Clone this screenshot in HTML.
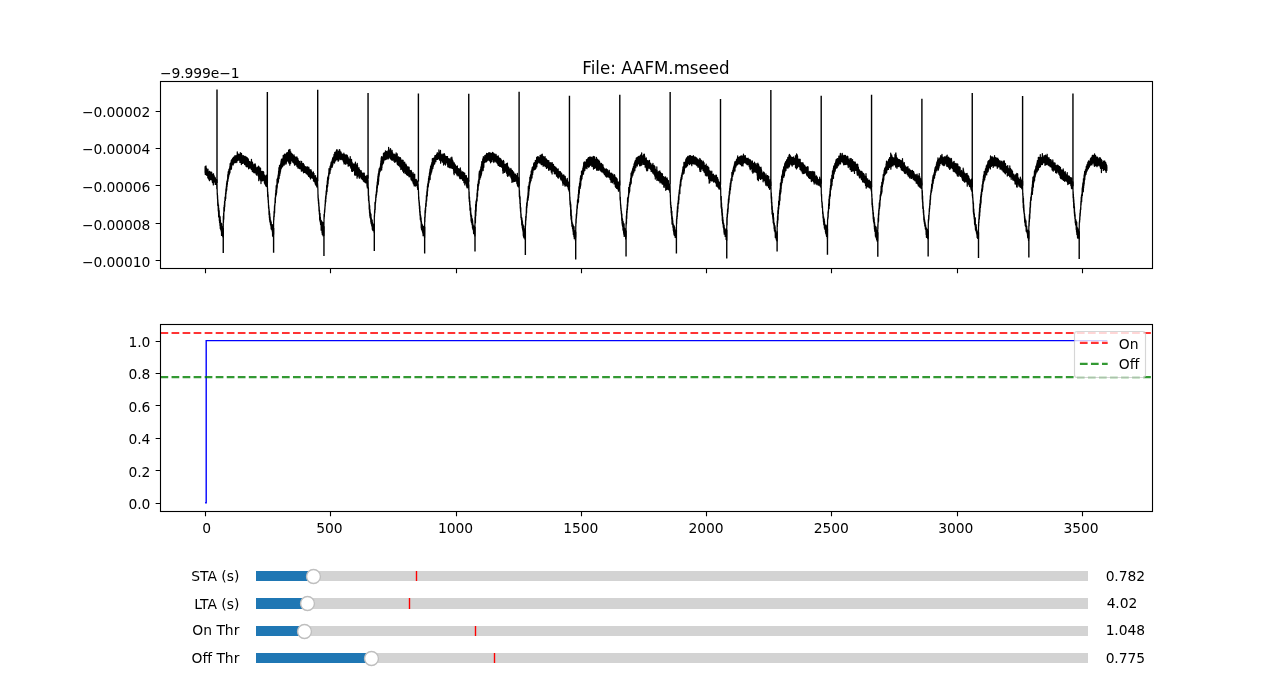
<!DOCTYPE html>
<html lang="en"><head><meta charset="utf-8"><title>File: AAFM.mseed</title>
<style>html,body{margin:0;padding:0;background:#fff;overflow:hidden}svg{display:block;will-change:transform}text{font-family:"DejaVu Sans","Liberation Sans",sans-serif;font-size:13.889px;fill:#000}.n{letter-spacing:-0.09px}.t12{font-size:16.667px}.e{text-anchor:end}.m{text-anchor:middle}.fr{fill:none;stroke:#000;stroke-width:1.11}.tk{stroke:#000;stroke-width:1.11;fill:none}</style></head><body>
<svg width="1280" height="682" viewBox="0 0 1280 682">
<rect width="1280" height="682" fill="#fff"/>
<path d="M205.09,172.78 205.12,166.71 205.32,174.56 205.34,170.01 205.44,168.38 205.54,173.58 205.57,171.71 205.59,170.95 205.67,168.8 205.82,174.35 205.84,172.32 205.89,174.07 205.99,165.9 206.07,169.07 206.09,172.1 206.12,173.02 206.29,169.61 206.32,171.62 206.34,170.94 206.42,174.48 206.52,168.09 206.57,171.45 206.59,168.28 206.77,175.47 206.82,171.36 206.84,171.62 206.87,170.34 206.99,174.78 207.07,171.32 207.09,175.31 207.22,169.8 207.32,171.51 207.34,171.91 207.47,170.18 207.52,174.09 207.57,171.75 207.6,169.73 207.82,177.88 207.85,176.08 207.87,176.14 208,169.21 208.07,171.81 208.1,171.93 208.3,176.63 208.32,175.38 208.35,176.5 208.37,171.61 208.57,172.94 208.6,173.48 208.65,179.08 208.75,173.02 208.82,173.45 208.85,174.31 208.9,174.83 208.92,172.37 209.07,174.2 209.1,175.31 209.25,172.48 209.32,178.53 209.35,179.94 209.37,180.42 209.5,171.47 209.57,176.77 209.6,177.47 209.62,180.7 209.8,172.26 209.82,174.19 209.85,171.25 210.02,177.87 210.08,176.81 210.1,177.1 210.2,172.28 210.33,177.27 210.35,175.24 210.43,173.55 210.58,175.93 210.6,173.67 210.68,179.41 210.8,172.65 210.83,174.66 210.85,173.42 210.88,172.47 211,177.12 211.08,175.39 211.1,175.82 211.15,178.41 211.3,174.1 211.33,174.52 211.35,175.24 211.4,179.29 211.58,174.56 211.6,173.71 211.63,172.12 211.75,179.23 211.83,178.35 211.85,178.05 211.98,175.61 212.03,180.46 212.08,179.87 212.1,180 212.13,180.96 212.23,173.93 212.33,177.09 212.35,175.21 212.45,182.52 212.58,175.92 212.61,176.12 212.63,174.45 212.78,181.71 212.83,181.05 212.86,180.8 212.93,175.26 213.08,179.84 213.11,178.1 213.18,175.07 213.33,184.9 213.36,181.81 213.53,173.75 213.58,178.05 213.61,181.95 213.68,182.09 213.81,177.98 213.83,178.29 213.86,179.96 213.88,177.64 213.96,182 214.08,180.79 214.11,179.99 214.21,175.85 214.26,181.37 214.33,177.94 214.36,180.71 214.51,178.15 214.53,181.91 214.58,179.32 214.61,178.78 214.76,182.1 214.83,177 214.86,180.63 214.88,181.69 215.09,178.27 215.11,177.32 215.24,184.45 215.34,181.88 215.36,180.22 215.41,178.48 215.49,183.99 215.59,180.55 215.61,181.46 215.69,180.58 215.76,184.09 215.84,182.58 215.86,182.03 215.91,179.36 216.09,183.12 216.11,180.47 216.14,184.35 216.26,180.27 216.34,180.5 216.36,180.64 216.39,183.39 216.59,179.97 216.61,181.57 216.64,179.52 216.81,188.74 216.84,184.64 216.86,183.78 216.89,179.87 217.06,185.45 217.09,184.85 217.11,189.11 217.16,188.85 217.24,194.38 217.34,193.06 217.36,194.03 217.52,198.92 217.57,195.39 217.59,198.14 217.62,196.74 217.74,205.5 217.82,201.55 217.84,199.65 218.04,206.1 218.07,202.55 218.09,202.86 218.27,211.02 218.32,210.45 218.34,211.35 218.49,204.78 218.57,211.26 218.59,214.16 218.64,216.79 218.79,208.2 218.82,209.44 218.84,212.56 218.87,212.09 219.04,217.56 219.07,214.94 219.09,216.1 219.19,210.62 219.32,220.57 219.34,219.49 219.47,215.87 219.57,222.78 219.59,219.81 219.67,223.04 219.82,216.03 219.84,220.12 219.87,219.47 219.97,225.42 220.07,222.1 220.1,221.7 220.15,216.96 220.27,228.51 220.32,228.33 220.35,225.85 220.42,220.02 220.57,229.27 220.6,226.46 220.62,227.54 220.7,222.33 220.82,225.39 220.85,224.4 220.87,224.22 220.92,229.94 221.07,225.24 221.1,227.61 221.12,225.88 221.22,231.3 221.32,228.93 221.35,225.22 221.42,224.97 221.55,235.42 221.57,233.89 221.6,232.97 221.67,223.51 221.8,233.74 221.82,233.66 221.85,230.95 221.87,232.52 222.07,227.81 222.1,228.14 222.2,233.66 222.32,228.4 222.35,226.97 222.5,236.09 222.58,232.53 222.6,227.39 222.8,234.91 222.83,234.59 222.85,232.09 223.03,227.85 223.08,236.94 223.1,234.83 223.18,236.74 223.33,216.14 223.35,217.53 223.45,222.57 223.58,216.88 223.6,213.89 223.68,212.8 223.78,219.18 223.83,215.71 223.85,211.86 223.9,207.32 224,212 224.08,211.61 224.1,211.75 224.25,205.08 224.33,206.31 224.35,206.12 224.43,210.72 224.55,201.36 224.58,202.75 224.6,203.71 224.68,201.86 224.73,206.71 224.83,203.16 224.85,203.46 225.03,197.13 225.08,198.89 225.11,200.51 225.26,196.86 225.33,198.46 225.36,200.36 225.58,192.79 225.61,196.06 225.73,198.48 225.83,192.68 225.86,191.03 225.96,188.78 226.08,193.7 226.11,190.78 226.13,192.26 226.31,186.53 226.33,188.21 226.36,187.59 226.43,191.28 226.56,183.62 226.58,183.85 226.61,184.33 226.73,189.99 226.81,182.28 226.83,183.85 226.86,183.83 226.88,181.43 227.03,186.85 227.08,184.48 227.11,182.68 227.18,180.64 227.23,184.68 227.33,181.57 227.36,184.11 227.49,179.11 227.59,180.75 227.61,181.43 227.76,174.75 227.84,178.84 227.86,177.3 227.89,181.27 228.01,176.4 228.09,177.4 228.11,175.99 228.21,171.69 228.29,178.77 228.34,173.64 228.36,173.26 228.41,173.19 228.49,176.03 228.59,175.69 228.61,171.26 228.64,177.09 228.84,172.21 228.86,169.63 228.94,174.06 229.09,172.94 229.11,169.07 229.21,174.8 229.34,173.27 229.36,169.28 229.41,169.24 229.54,173.07 229.59,170.48 229.61,173.51 229.81,166.66 229.84,167.52 229.86,167.76 229.97,172.47 229.99,166.15 230.07,168.38 230.09,167.68 230.12,163.72 230.27,169.74 230.32,164.38 230.34,165.82 230.39,164.15 230.49,168.32 230.57,167.42 230.59,166.07 230.64,168.61 230.74,163.76 230.82,167.88 230.84,168.43 230.94,162.11 231.07,168.08 231.09,168.02 231.32,160.32 231.34,162.06 231.42,169.18 231.57,166.22 231.59,164.87 231.64,163.14 231.79,165.73 231.82,163.24 231.84,162.14 231.89,164.77 231.97,159.37 232.07,159.79 232.09,163.12 232.19,164.02 232.29,159.17 232.32,159.58 232.34,160 232.52,163.82 232.57,162.21 232.6,162.68 232.65,158.33 232.82,160.39 232.85,162.66 232.97,164.38 233.07,158.72 233.1,158.81 233.12,158.19 233.22,164.91 233.32,159.25 233.35,160.54 233.42,157.23 233.57,160.97 233.6,161.48 233.62,163.47 233.67,158.31 233.82,159.65 233.85,157.45 233.95,163.14 234.07,159.27 234.1,158.37 234.12,158.13 234.25,161.23 234.32,159.64 234.35,159.97 234.45,161.79 234.5,157.45 234.57,158.44 234.6,159.63 234.65,160.4 234.72,155.89 234.82,159.84 234.85,159.9 234.9,162.36 235,157.87 235.08,160.58 235.1,159.77 235.13,161.2 235.25,157.83 235.33,158.3 235.35,159.2 235.4,160.03 235.53,156.08 235.58,159.87 235.6,158.96 235.65,160.8 235.8,156.06 235.83,158.71 235.85,155.55 235.93,162.7 236.08,156 236.1,156.59 236.18,156.07 236.33,162.23 236.35,159.43 236.43,155.86 236.53,161.7 236.58,160.44 236.6,161.81 236.7,156.02 236.83,157.17 236.85,157.51 236.88,162.17 237,155.01 237.08,156.07 237.1,159.13 237.18,159.57 237.28,151.81 237.33,153.36 237.36,153.55 237.46,159.2 237.58,155.95 237.61,153.35 237.76,160.36 237.83,156.7 237.86,154.5 238.01,159.11 238.08,159.07 238.11,157.52 238.26,159.74 238.33,155.26 238.36,156.26 238.38,159.96 238.58,156.47 238.61,156.49 238.68,154.25 238.83,160.12 238.86,159 238.93,155.11 239.08,155.3 239.11,158.77 239.18,156.31 239.31,160.03 239.33,157.84 239.36,156.62 239.41,155.2 239.51,157.58 239.58,157 239.61,158.53 239.73,154.17 239.84,159.92 239.86,158.27 239.91,162.39 240.09,155.21 240.11,161.71 240.29,152.72 240.34,154.69 240.36,157.7 240.46,161.48 240.54,154.97 240.59,155.01 240.61,155.57 240.81,161.9 240.84,161.3 240.86,160.75 240.99,155.33 241.06,162.72 241.09,159.97 241.11,159.77 241.21,154.17 241.34,162.77 241.36,164.55 241.49,153.4 241.59,160.07 241.61,159.76 241.66,163.64 241.79,156.96 241.84,159.01 241.86,159.15 241.91,156.96 242.09,161.54 242.11,158.65 242.14,157.14 242.19,160.36 242.32,159.45 242.34,158.44 242.47,162.15 242.57,158.92 242.59,158.06 242.67,157.3 242.79,163.38 242.82,161.39 242.84,155.39 242.97,160.8 243.07,159.14 243.09,160.85 243.17,162.44 243.32,156.73 243.34,157.15 243.49,162.03 243.57,161.19 243.59,157.07 243.62,155.88 243.79,162.41 243.82,159.58 243.84,162.87 243.92,163.09 244.02,156.06 244.07,159.4 244.09,161.5 244.24,162.26 244.27,159 244.32,160.66 244.34,159.46 244.39,163.18 244.49,158 244.57,160.09 244.59,163.48 244.62,164.55 244.77,156.57 244.82,159.88 244.85,160.59 245,158.86 245.07,161.94 245.1,162.34 245.27,156.27 245.32,160.14 245.35,159.79 245.4,162.63 245.57,157.31 245.6,160.37 245.77,165.15 245.82,162.68 245.85,160.72 245.87,160.17 246.02,166.27 246.07,165.81 246.1,162.38 246.2,159 246.32,164.28 246.35,163.54 246.57,157.07 246.6,160.41 246.65,160.21 246.75,166.8 246.82,162.91 246.85,162.54 246.9,164.5 247.02,158.13 247.07,164 247.1,164.16 247.3,157.76 247.33,164.48 247.35,163.22 247.38,166.27 247.58,159.54 247.6,161.69 247.7,166.86 247.8,160.45 247.83,161.15 247.85,161.45 247.88,158.47 248.05,165.86 248.08,165.44 248.1,161.18 248.25,159.12 248.33,165.87 248.35,164.09 248.38,165.08 248.5,159.88 248.58,163.62 248.6,165.49 248.63,168.8 248.8,161.63 248.83,163.58 248.85,164.07 248.88,161.46 248.95,166.53 249.08,164 249.1,163.49 249.2,162.09 249.3,167.12 249.33,165.11 249.35,168.23 249.45,161.71 249.58,164.66 249.6,165.91 249.68,165.91 249.81,162.86 249.83,163.18 249.86,167.2 249.88,167.49 249.93,162.13 250.08,163.28 250.11,163.66 250.13,167.36 250.18,161.86 250.33,165.69 250.36,165.71 250.46,162.26 250.56,166.01 250.58,164.77 250.61,167.4 250.63,168.19 250.83,162.54 250.86,164.37 250.91,161.93 251.03,167.76 251.08,165.94 251.11,164.35 251.18,162.87 251.31,169.45 251.33,167.78 251.36,167.83 251.46,159.32 251.56,168.82 251.58,165.76 251.61,167.65 251.63,168.88 251.76,161.56 251.83,167.09 251.86,166.71 252.01,170.07 252.08,162.55 252.11,161.89 252.34,171.48 252.36,165.81 252.41,167.71 252.49,162.37 252.59,165.28 252.61,168.29 252.71,169.5 252.76,165.02 252.84,165.72 252.86,165.93 252.96,171.79 253.09,165.75 253.11,164.95 253.24,170.97 253.34,167.12 253.36,168.25 253.41,166.03 253.51,171.09 253.59,167.61 253.61,168.42 253.71,165.81 253.81,171.9 253.84,171.48 253.86,171.62 253.91,172.74 254.04,164.16 254.09,166.4 254.11,169.84 254.29,166.06 254.34,172.49 254.36,168.91 254.44,165.16 254.46,171 254.59,167.58 254.61,169.85 254.72,166.67 254.79,170.25 254.82,168.78 254.84,168.14 254.92,164.72 255.07,172.96 255.09,168.06 255.17,163.88 255.32,170.79 255.34,169.88 255.39,169.88 255.47,164.85 255.57,167.09 255.59,167.4 255.67,166.56 255.69,169.77 255.82,169.23 255.84,167.34 255.92,170.76 256.07,168.91 256.09,167.75 256.22,174.38 256.32,171.8 256.34,171.47 256.47,172.52 256.57,169.11 256.59,170.25 256.67,169.17 256.77,175.16 256.82,173.02 256.84,172.63 256.87,173.06 256.99,168.22 257.07,171.87 257.09,171.35 257.2,173.75 257.3,167.02 257.32,169.81 257.35,169.63 257.42,172.69 257.57,170.93 257.6,170.04 257.65,172.31 257.67,167.83 257.82,171.97 257.85,169.44 257.9,173.78 258.02,168.24 258.07,171.96 258.1,171.5 258.17,175.41 258.25,168.53 258.32,169.18 258.35,173.37 258.42,176.14 258.57,166.2 258.6,167.51 258.62,166.54 258.75,180.64 258.82,173.94 258.85,171.81 258.95,166.62 259.07,179.89 259.1,179.6 259.22,168.5 259.32,173.65 259.35,175.79 259.37,177.72 259.57,171.38 259.6,170.2 259.65,177.72 259.83,170.27 259.85,167.99 260.05,178.7 260.08,177.46 260.1,175.06 260.13,171.28 260.33,176.13 260.35,176.31 260.53,168.11 260.58,172.62 260.6,176.38 260.68,180.4 260.8,172.35 260.83,173.38 260.85,173.69 260.88,171.29 260.98,183.53 261.08,173.69 261.1,171.56 261.13,171.47 261.28,179.79 261.33,178.48 261.35,175 261.43,173.51 261.55,178.99 261.58,177.09 261.6,176.84 261.75,171.42 261.83,173.92 261.85,174.36 261.98,177.93 262.05,173.39 262.08,174.41 262.1,175.66 262.21,180.96 262.33,173.61 262.36,171.44 262.51,179.36 262.58,177.73 262.61,175.51 262.63,178.51 262.71,173.3 262.83,178.51 262.86,177.48 262.91,180.41 263.03,172.59 263.08,175.78 263.11,175.42 263.23,180.09 263.33,174.99 263.36,171.56 263.48,179.73 263.58,172.8 263.61,172.62 263.66,172.02 263.76,178.45 263.83,177.86 263.86,176.83 264.01,174.43 264.06,179.93 264.08,177.38 264.11,178.7 264.16,181.31 264.31,175.87 264.33,177.79 264.36,178.48 264.41,182.96 264.51,176.34 264.58,177.72 264.61,178.64 264.64,177.76 264.84,184.09 264.86,179.13 264.99,175.44 265.06,183.13 265.09,182.38 265.11,181.99 265.14,183.9 265.29,176.59 265.34,181.61 265.36,181.31 265.39,182.44 265.51,177.23 265.59,178.76 265.61,179.14 265.71,185.69 265.84,177.16 265.86,176.67 266.04,186.06 266.09,179.57 266.11,177.83 266.16,176.29 266.31,186.15 266.34,184.2 266.36,186.55 266.49,175.12 266.59,179.62 266.61,183.91 266.64,184.93 266.74,179.77 266.84,181.49 266.86,179.95 266.91,186.32 267.06,182.21 267.09,181.51 267.17,179.01 267.19,183.52 267.32,183.4 267.34,181.4 267.54,192.04 267.57,188.41 267.59,192.13 267.67,196.68 267.77,191.77 267.82,192.05 267.84,196.27 267.99,194.28 268.02,199.41 268.07,195.73 268.09,195.96 268.12,195.37 268.29,203.1 268.32,199.97 268.34,202.96 268.39,200 268.57,208.23 268.59,207.12 268.64,205.02 268.82,207.91 268.84,208.18 268.89,207.15 269.04,214.77 269.07,213.84 269.09,209.2 269.29,213.76 269.32,212.71 269.34,217.48 269.42,211.27 269.57,220.06 269.6,216.69 269.75,213.55 269.8,217.69 269.82,216.1 269.85,221.91 270.02,216.78 270.07,218.28 270.1,219.43 270.12,217.26 270.32,221.74 270.35,220.91 270.45,224.46 270.57,222.55 270.6,222.34 270.62,220.05 270.82,226.04 270.85,225.35 270.87,221.69 271.07,226.35 271.1,227.24 271.15,228.88 271.22,221.75 271.32,226.83 271.35,225.2 271.42,224.63 271.57,227.91 271.6,228.01 271.65,226 271.7,229.83 271.82,227.25 271.85,226.53 271.87,226.06 272.08,229.98 272.1,225.18 272.33,231.09 272.35,231.71 272.45,225.49 272.58,236 272.6,233.12 272.63,234.2 272.73,224.53 272.83,229.22 272.85,233.6 272.93,236.07 273.03,227.12 273.08,227.53 273.1,229.78 273.13,228.94 273.28,236.62 273.33,233.37 273.35,231.68 273.4,228.56 273.53,234.53 273.58,233.77 273.6,222.74 273.8,216.18 273.83,217.97 273.85,219.86 274.08,211.49 274.1,215.5 274.2,216.86 274.25,211.58 274.33,213.3 274.35,211.67 274.5,205.79 274.58,208.66 274.61,212.92 274.76,204.5 274.83,204.93 274.86,206.05 275.06,200.66 275.08,202.65 275.11,198.89 275.23,197.66 275.28,201.88 275.33,200.74 275.36,202.73 275.56,193.47 275.58,193.91 275.61,194.86 275.71,196.74 275.83,192.18 275.86,190.02 275.96,196.02 276.08,191.49 276.11,191.23 276.18,185.69 276.33,194.55 276.36,191.7 276.58,185.19 276.61,192.09 276.63,192.69 276.81,184.51 276.83,185.17 276.86,185.37 276.93,188.98 277.04,179.2 277.09,179.45 277.11,180.12 277.26,187.25 277.34,182.27 277.36,181.54 277.41,183.97 277.49,179.29 277.59,181.78 277.61,180.7 277.69,177.81 277.84,182.42 277.86,181.55 277.91,181.77 278.01,175.68 278.09,177.94 278.11,179.84 278.14,182.97 278.34,175.15 278.36,173.98 278.44,181.81 278.59,171.09 278.61,173.84 278.64,172.88 278.74,179.13 278.84,176.73 278.86,174.49 278.91,167.61 279.09,175.97 279.11,178.37 279.26,170.23 279.34,173.74 279.36,175.66 279.52,165.27 279.57,170.4 279.59,169.23 279.72,175.54 279.82,171.54 279.84,169.31 279.89,172.03 280.07,165.18 280.09,168.04 280.19,173.14 280.32,167.67 280.34,166.82 280.44,166.41 280.54,171.3 280.57,167.12 280.59,165.22 280.69,163.63 280.82,169.14 280.84,166.71 280.97,161.57 280.99,166.92 281.07,165.61 281.09,167.38 281.12,168.83 281.27,159.94 281.32,163.41 281.34,164.84 281.37,162.7 281.49,168.06 281.57,163.29 281.59,159.08 281.74,166.65 281.82,163.04 281.84,163.42 282.05,162.07 282.07,164.72 282.1,162.1 282.15,166.37 282.22,160.08 282.32,161.07 282.35,162.98 282.42,166.78 282.5,160.25 282.57,161.91 282.6,159.79 282.67,166.4 282.8,159.02 282.82,159.04 282.85,158.38 282.87,158.02 283.07,164.63 283.1,165.58 283.22,155.28 283.32,160.38 283.35,162.51 283.45,158.67 283.57,163.43 283.6,161.78 283.65,164.18 283.8,156.39 283.82,158.22 283.85,158.99 283.95,163.97 284.07,157.6 284.1,157.84 284.12,155.86 284.27,165.07 284.32,161.28 284.35,158.33 284.45,154.05 284.58,161.52 284.6,161.75 284.65,163.33 284.73,157.52 284.83,158.14 284.85,159.17 284.93,162.41 285.03,157.49 285.08,158.31 285.1,158.39 285.13,156.66 285.33,161.12 285.35,159.07 285.45,155.23 285.55,161.92 285.58,159.7 285.6,161.96 285.75,154.13 285.83,156.35 285.85,160.51 285.9,164.25 286.08,153.94 286.1,154.33 286.23,163.47 286.33,157.62 286.35,156.99 286.43,154.93 286.58,161.97 286.6,159.82 286.7,152.99 286.78,160.71 286.83,159.57 286.85,157.33 286.98,154.31 287.06,159.4 287.08,159 287.11,156.85 287.18,159.72 287.33,155.64 287.36,155.61 287.43,154.53 287.56,160.86 287.58,159.93 287.61,160.41 287.71,152.5 287.83,157.18 287.86,159.53 287.91,159.97 288.06,152.22 288.08,154.71 288.11,157.24 288.23,158.56 288.33,153.1 288.36,152.31 288.51,162.06 288.58,157.65 288.61,155.69 288.66,150.1 288.83,161.73 288.86,162.77 289.01,149.87 289.08,157.54 289.11,160.6 289.16,163.45 289.28,151.56 289.33,152.31 289.36,153.92 289.49,162.43 289.59,151.8 289.61,152.98 289.64,150.62 289.79,165.16 289.84,159.76 289.86,160.52 289.96,149.38 290.09,163.7 290.11,159.47 290.14,161.95 290.21,151.56 290.34,161.44 290.36,159.56 290.39,161.28 290.56,151.59 290.59,152.58 290.61,153.17 290.71,163.35 290.81,152.09 290.84,153.16 290.86,155.14 290.91,154.91 291.06,160.56 291.09,158.64 291.11,158.52 291.16,153.83 291.29,158.69 291.34,158.32 291.36,157.87 291.39,156.46 291.56,159.16 291.59,156.48 291.61,158.44 291.69,160.34 291.79,153.61 291.84,155.06 291.86,157.04 292.04,160.96 292.07,158.46 292.09,155.01 292.14,154.99 292.19,160.82 292.32,159.37 292.34,156.8 292.47,159.7 292.49,155.22 292.57,157.66 292.59,154.32 292.72,162.14 292.82,159.23 292.84,158.11 292.89,155.97 293.07,160.57 293.09,159.57 293.12,155.67 293.32,159.35 293.34,158.66 293.44,159.51 293.57,156.12 293.59,158.69 293.74,162.93 293.79,158.52 293.82,161.18 293.84,158.71 293.99,162.51 294.07,154.96 294.09,159.55 294.27,164.05 294.32,157.39 294.34,159.79 294.4,158.16 294.55,161.11 294.57,160.33 294.6,160.87 294.7,156.62 294.75,165.28 294.82,163.59 294.85,162.09 294.87,164.28 295,158.07 295.07,158.29 295.1,159.19 295.2,164.53 295.27,158.76 295.32,160.6 295.35,162.79 295.52,163.23 295.55,160.18 295.57,160.34 295.6,160.65 295.7,157.51 295.77,164.1 295.82,160.72 295.85,160.83 295.92,157.18 296.05,162.18 296.07,162.02 296.1,162.09 296.12,164.16 296.3,157.29 296.32,158.54 296.35,159.13 296.45,164.98 296.55,158.72 296.57,159.25 296.6,160.39 296.7,164.3 296.77,158.03 296.82,161.12 296.85,158.91 296.9,156.86 296.98,166.52 297.08,165.33 297.1,164.31 297.28,158.89 297.33,165.24 297.35,164.6 297.43,165.84 297.53,158.33 297.58,161.8 297.6,163.25 297.68,165.68 297.8,158.38 297.83,158.69 297.85,158.61 298.03,168.12 298.08,165.11 298.1,162.94 298.13,160.04 298.23,163.69 298.33,162 298.35,160.17 298.45,166.22 298.58,164.34 298.6,164.88 298.68,161.26 298.78,167.99 298.83,166.81 298.85,166.16 298.9,161.42 299.08,166.21 299.1,162.86 299.3,166.8 299.33,166.57 299.36,165.09 299.46,168.54 299.56,163.16 299.58,164.02 299.61,166.12 299.63,167.24 299.76,163.38 299.83,165.54 299.86,165.84 299.88,168.53 300.08,161.07 300.11,162.33 300.28,168.55 300.33,167.08 300.36,168.71 300.41,165.24 300.58,165.99 300.61,167.42 300.71,165.07 300.83,169.07 300.86,166.41 300.96,163.7 301.06,169.21 301.08,165.39 301.11,166.12 301.31,163.31 301.33,167.84 301.36,168.72 301.38,171.19 301.53,163.31 301.58,164.45 301.61,161.45 301.68,169.72 301.84,165.5 301.86,165.07 301.89,164.81 301.94,169.29 302.09,166 302.11,166.94 302.24,163.41 302.34,168.25 302.36,170.5 302.51,164.02 302.59,164.67 302.61,170.85 302.74,164.07 302.84,168.19 302.86,166.37 303.01,170.34 303.06,165.1 303.09,168.34 303.11,166.27 303.24,171.38 303.34,166.46 303.36,165.96 303.41,163.5 303.54,172.8 303.59,169.18 303.61,167.68 303.71,164.78 303.84,169.75 303.86,172.15 303.99,164.56 304.09,165.18 304.11,167.34 304.14,171.13 304.32,169.89 304.34,167.06 304.39,165.96 304.54,172.45 304.57,170.9 304.59,170.21 304.74,168.55 304.82,170.77 304.84,168.96 304.87,172.11 304.99,167.79 305.07,167.82 305.09,170.51 305.14,172.56 305.29,167.23 305.32,168.51 305.34,171.28 305.39,171.82 305.52,166.58 305.57,169.53 305.59,171.64 305.64,172.26 305.74,168.48 305.82,169.69 305.84,168.57 305.87,168.39 305.97,172.5 306.07,168.67 306.09,167.02 306.27,173.72 306.32,167.73 306.34,170.14 306.42,167.45 306.52,173.44 306.57,169.68 306.59,171.97 306.69,167.1 306.8,173.88 306.82,172.61 306.85,173.36 306.97,169.22 307.07,169.6 307.1,170.77 307.17,166.63 307.22,173.37 307.32,172.03 307.35,173.48 307.55,169.83 307.57,170.67 307.6,171.49 307.72,174.85 307.82,168.58 307.85,167.5 307.97,174.98 308.07,171.86 308.1,170.47 308.12,170.18 308.3,174.69 308.32,171.71 308.35,175.44 308.57,170.2 308.6,173.64 308.67,176.47 308.82,167.17 308.85,170.64 308.87,169.52 308.97,176.13 309.07,171.48 309.1,168.66 309.28,175.13 309.33,171.91 309.35,173.58 309.4,171.28 309.58,177.07 309.6,173.06 309.73,172.65 309.83,177.1 309.85,172.46 309.95,169.93 310.08,175.64 310.1,176.04 310.13,176.85 310.3,170.79 310.33,172.45 310.35,175.25 310.38,172.58 310.5,178.96 310.58,173.57 310.6,174.59 310.63,170.2 310.8,176.34 310.83,176.04 310.85,173.81 310.93,169.57 311.08,175.84 311.1,172.97 311.18,175.57 311.33,171.72 311.35,175.36 311.4,170.84 311.58,171.56 311.6,173 311.7,177.62 311.83,174.07 311.86,173.72 311.88,172.83 311.96,177.05 312.08,173.46 312.11,172.55 312.23,178.22 312.33,176.42 312.36,175.69 312.38,174.28 312.53,177.86 312.58,176.57 312.61,175.51 312.63,177.32 312.83,173.73 312.86,175.23 312.93,176.89 313.06,173.06 313.08,175.2 313.11,175.74 313.21,178.57 313.33,173.65 313.36,171.9 313.48,181.06 313.58,176.47 313.61,175.66 313.71,174.01 313.81,181.2 313.83,176.37 313.86,177.41 313.96,173.33 314.06,179.13 314.08,177.4 314.11,176.31 314.24,175.38 314.31,180.11 314.34,177.45 314.36,181.25 314.59,176.92 314.61,178.21 314.66,180.49 314.74,178.09 314.84,178.28 314.86,180.51 314.94,182.76 315.06,177.16 315.09,181.71 315.11,180.32 315.26,183.9 315.34,179.37 315.36,183.48 315.56,175.64 315.59,183.29 315.61,179.34 315.71,185.09 315.81,177.71 315.84,178.87 315.86,178.2 316.06,183.12 316.09,181.65 316.11,183.39 316.21,178.55 316.31,184.2 316.34,181.37 316.36,184.71 316.51,178.1 316.59,180.94 316.61,179.79 316.74,186.96 316.82,179.01 316.84,180.72 316.92,178.05 317.02,184.95 317.07,184.5 317.09,186.07 317.24,180.1 317.32,182 317.34,180.94 317.44,179.2 317.57,183.56 317.59,183.32 317.82,187.85 317.84,188.92 317.87,188.6 318.04,197.91 318.07,194.96 318.09,194.5 318.27,200.73 318.32,198.75 318.34,198.79 318.39,198.63 318.52,203.83 318.57,201.55 318.59,199.78 318.74,206.32 318.82,202.54 318.84,202.97 319.02,210.92 319.07,210.77 319.09,209.36 319.17,206.65 319.3,211.88 319.32,210.61 319.35,214.29 319.52,210.02 319.57,214.1 319.6,213.82 319.65,219.75 319.75,213.67 319.82,216.91 319.85,216.85 319.9,220.68 320.07,213.48 320.1,215.93 320.22,222.11 320.32,217.03 320.35,218.75 320.42,217.39 320.57,224.52 320.6,223.31 320.7,220.47 320.82,224.7 320.85,223.39 320.97,221.04 321.02,224.58 321.07,224.34 321.1,223.99 321.15,230.14 321.25,220.4 321.32,222.24 321.35,225.7 321.45,228.11 321.52,222.25 321.57,224.07 321.6,221.54 321.75,229.44 321.83,221.68 321.85,224.32 321.88,221.53 322.03,232.68 322.08,230.32 322.1,227.15 322.13,225.28 322.3,234.41 322.33,232.43 322.35,231.84 322.48,222.03 322.58,228.73 322.6,232.45 322.63,234.5 322.83,224.81 322.85,226.45 323,235.85 323.08,229.33 323.1,226.82 323.13,222.69 323.25,235.9 323.33,228.34 323.35,229.31 323.4,225.83 323.55,235.48 323.58,233.55 323.6,234.63 323.75,229.02 323.83,232.88 323.85,235.43 324.05,214.37 324.08,218.17 324.1,218.73 324.28,214.01 324.33,216.64 324.36,215.25 324.58,209.8 324.61,211.38 324.73,212.31 324.83,208.29 324.86,207.52 324.91,209.46 325.08,204.32 325.11,204.7 325.21,206.32 325.31,200.22 325.33,200.36 325.36,203.4 325.43,203.49 325.56,197.81 325.58,198.81 325.61,196.53 325.76,201.71 325.78,196.23 325.83,198.55 325.86,195.31 325.96,198.86 326.08,193.17 326.11,192.86 326.13,196.48 326.18,191.17 326.33,191.48 326.36,192.6 326.46,189.76 326.58,194.34 326.61,187.55 326.71,185.19 326.81,191.05 326.84,190.77 326.86,190.19 326.99,185.28 327.09,191.54 327.11,188.5 327.29,180.9 327.34,183.45 327.36,185.33 327.41,187.15 327.59,177.75 327.61,178.56 327.69,186.2 327.84,182.12 327.86,177.36 327.89,177.01 328.06,183.54 328.09,181.52 328.11,179.93 328.19,176.01 328.34,180.27 328.36,176.74 328.39,179.39 328.49,175.19 328.59,177.81 328.61,177.07 328.64,178.67 328.71,172.78 328.84,176.05 328.86,174.08 328.91,175.88 328.99,168.75 329.06,170.44 329.09,173.38 329.12,174.87 329.32,169.48 329.34,169.75 329.39,169.52 329.47,171.61 329.57,171.27 329.59,172.74 329.79,168.06 329.82,168.46 329.84,168.6 329.94,173.47 330.07,170.3 330.09,166.05 330.12,171.51 330.32,169.52 330.34,168.38 330.39,167.28 330.44,170.08 330.57,167.61 330.59,168.6 330.74,169.65 330.82,163.99 330.84,164.96 330.97,166.99 331.07,162.65 331.09,163.78 331.14,162.21 331.27,167.48 331.32,162.25 331.34,165.68 331.47,162.1 331.57,166.95 331.6,165.65 331.62,166.35 331.72,162.24 331.82,162.93 331.85,162.44 331.87,167.18 332.05,160.68 332.07,164.63 332.1,162.3 332.22,167.19 332.3,160.1 332.32,162 332.35,159.49 332.52,166.04 332.57,162.19 332.6,159.15 332.72,157.89 332.82,164.83 332.85,160.67 332.87,162.83 333,157.52 333.07,161.28 333.1,161.72 333.12,162.95 333.3,157.19 333.32,157.98 333.35,159.11 333.45,161.13 333.5,158.59 333.57,159.6 333.6,158.06 333.67,156.55 333.8,162.63 333.82,158.79 333.85,162.06 334.02,154.5 334.08,159.7 334.1,160.36 334.13,161.8 334.33,157 334.35,155.44 334.38,155.38 334.58,163.06 334.6,160.09 334.75,152.35 334.83,159.47 334.85,159.14 334.88,161.12 335.05,152.97 335.08,156.07 335.1,157.05 335.25,158.76 335.28,153.84 335.33,156.74 335.35,156.78 335.48,158.14 335.5,153.6 335.58,155.13 335.6,153.09 335.73,160.76 335.83,157.15 335.85,155.83 335.88,151.53 336.08,158.9 336.1,156.11 336.15,152.9 336.3,159.71 336.33,156.94 336.35,158.64 336.48,150.15 336.58,155.46 336.61,156.18 336.66,158.79 336.81,152.83 336.83,154.1 336.86,149.73 337.01,159.58 337.08,156.33 337.11,152.74 337.23,149.78 337.33,157.33 337.36,157.17 337.38,158.85 337.56,153.4 337.58,155.12 337.61,156.26 337.63,158.19 337.81,155.13 337.83,156.26 337.86,157.79 337.98,153.59 338.08,160.28 338.11,161.15 338.16,153.19 338.33,157.54 338.36,160.34 338.41,160.94 338.56,151.29 338.58,152.84 338.61,153.68 338.71,160.43 338.83,151.47 338.86,153.67 338.96,152.52 339.01,159.06 339.09,154.57 339.11,153.87 339.21,149.91 339.29,156.76 339.34,154.84 339.36,156.45 339.44,149.6 339.59,157.46 339.61,154.44 339.79,149.87 339.84,156.25 339.86,156.53 339.91,157.3 340.06,151.33 340.09,152.47 340.11,152.28 340.24,159.58 340.34,156.36 340.36,155.26 340.41,151.77 340.56,158.51 340.59,155.37 340.61,157.34 340.74,154.67 340.81,158.6 340.84,157.38 340.86,158.87 341.06,152.05 341.09,156.9 341.11,158.27 341.19,154.18 341.31,159.1 341.34,158.53 341.36,156.72 341.49,154.48 341.57,158.88 341.59,156.34 341.62,158.09 341.69,153.91 341.82,155.33 341.84,155.15 341.94,159.7 342.07,155.9 342.09,155.29 342.19,158.58 342.29,155.17 342.32,157.56 342.34,156.26 342.37,155.39 342.54,158.54 342.57,158.41 342.59,158.14 342.64,154.23 342.77,159.06 342.82,156.87 342.84,155.04 342.87,159.03 343.04,154.87 343.07,156.99 343.09,158.78 343.14,161.11 343.24,154.85 343.32,156.51 343.34,157.44 343.52,161.36 343.54,154.38 343.57,155.69 343.59,154.69 343.79,162.4 343.82,157.7 343.84,156.87 343.87,153.01 344.07,162.65 344.1,164 344.22,155.33 344.32,163.6 344.35,160.23 344.4,161.6 344.55,154.86 344.57,161.4 344.6,159.48 344.72,161.59 344.8,157.78 344.82,160.11 344.85,159.07 344.9,160.9 344.97,154.55 345.07,158.29 345.1,162.02 345.15,162.62 345.32,154.84 345.35,155.6 345.5,164.12 345.57,160.12 345.6,156.85 345.62,155.32 345.82,163.48 345.85,163.66 346.02,157.59 346.07,160.57 346.1,163.93 346.25,157.6 346.32,159.61 346.35,159.32 346.45,161.93 346.58,154.93 346.6,156.29 346.68,160.54 346.83,159.15 346.85,161.44 347,157.57 347.08,161.2 347.1,162.22 347.28,155.31 347.33,158.24 347.35,158.68 347.43,163.51 347.45,158.32 347.58,163.01 347.6,159.19 347.73,158.84 347.83,162.18 347.85,159.05 347.88,161.19 348,157.01 348.08,160.47 348.1,162.4 348.18,166.13 348.25,157.93 348.33,161.8 348.35,163.37 348.38,164.16 348.5,159.56 348.58,163.43 348.6,162.08 348.63,164.79 348.78,159.67 348.83,162.41 348.85,164.71 348.88,165.13 349.03,159.56 349.08,160.63 349.11,161.92 349.16,165.61 349.28,159.05 349.33,160.32 349.36,161.65 349.41,160.97 349.46,165.31 349.58,163.78 349.61,161.3 349.71,165.36 349.83,162.81 349.86,161.09 349.93,159.64 350.03,163.66 350.08,162.3 350.11,164.41 350.13,165.41 350.23,156.57 350.33,163.17 350.36,166.02 350.43,166.93 350.56,159.33 350.58,161.6 350.61,165.7 350.71,167.19 350.78,160.31 350.83,160.62 350.86,161.73 350.98,168.32 351.08,165.69 351.11,163.48 351.21,160.21 351.33,167.31 351.36,165.9 351.38,166.79 351.54,159.43 351.59,163.84 351.61,166.35 351.66,171.15 351.79,162.56 351.84,163.81 351.86,161.95 351.99,169.63 352.09,163.26 352.11,162.28 352.31,167.61 352.34,164.47 352.36,167.49 352.44,165.19 352.59,171.4 352.61,170.65 352.69,165.9 352.84,168.38 352.86,166.5 352.96,169.88 353.06,163.9 353.09,166.79 353.11,167.26 353.19,164.7 353.26,169.16 353.34,168.04 353.36,165.47 353.46,170.52 353.56,164.17 353.59,168.47 353.61,168.2 353.71,164.53 353.84,168.34 353.86,168.23 353.89,165.01 353.94,168.74 354.07,166.78 354.09,168.94 354.22,166.1 354.32,170.4 354.34,166.53 354.47,164.1 354.57,170.62 354.59,172.75 354.64,174.66 354.69,165.73 354.82,170.03 354.84,168.72 354.89,175.16 355.07,165.57 355.09,163.8 355.27,173 355.32,169.76 355.34,165.43 355.42,162.02 355.57,174.91 355.59,172.93 355.67,166.3 355.82,171.24 355.84,175.14 356.07,165.6 356.09,165.28 356.17,174.13 356.32,166.2 356.34,166.63 356.37,164.97 356.5,174.49 356.57,171.12 356.6,169.39 356.65,166.45 356.82,174.61 356.85,169.99 356.95,165.44 357.07,178.2 357.1,176.45 357.27,163.37 357.32,171.21 357.35,172.64 357.4,175.68 357.52,165.33 357.57,168.34 357.6,173.98 357.67,176.37 357.77,169.45 357.82,169.84 357.85,172.09 357.87,170.51 357.97,174.55 358.07,172.34 358.1,169.62 358.12,168.9 358.3,175.02 358.32,172.72 358.35,175.23 358.42,168.47 358.57,170.87 358.6,170.89 358.7,170.85 358.82,175.49 358.85,173.75 358.93,167.59 359.08,176.67 359.1,177.83 359.25,170.06 359.33,175.49 359.35,178.25 359.55,169.41 359.58,171.02 359.6,172.17 359.63,170.64 359.73,176.29 359.83,172.51 359.85,172.57 359.95,170.49 360.03,174.93 360.08,173.34 360.1,173.98 360.15,176.58 360.23,171.99 360.33,173.1 360.35,174.63 360.45,176.04 360.5,171.4 360.58,172.57 360.6,172.93 360.63,176.71 360.75,170.98 360.83,174.06 360.85,177.2 360.88,177.52 361.05,172.46 361.08,173.92 361.1,174.83 361.13,170.73 361.3,178.63 361.33,174.29 361.36,173.22 361.51,172.19 361.56,176.35 361.58,176.2 361.61,178.35 361.66,173.62 361.83,178.75 361.86,175.51 361.88,177.39 362.03,175.38 362.08,177.13 362.11,175.51 362.23,173.74 362.31,178.9 362.33,175.12 362.36,178.21 362.53,179.74 362.58,175.2 362.61,175.28 362.63,178.86 362.81,173.24 362.83,175.95 362.86,177.69 362.93,179.56 363.03,174.49 363.08,176.12 363.11,174.14 363.16,177.57 363.23,173.09 363.33,175.5 363.36,175.96 363.46,181.16 363.56,173.8 363.58,174.16 363.61,177.05 363.63,175.01 363.68,181.18 363.84,176.86 363.86,178.57 363.94,173.25 364.06,179.88 364.09,178.81 364.11,179.57 364.26,173.09 364.34,181.34 364.36,181.99 364.54,176.41 364.59,178.62 364.61,177.83 364.79,181.69 364.84,181.54 364.86,180.41 364.94,176.1 365.09,180.8 365.11,180.9 365.19,177.95 365.21,180.98 365.34,180.82 365.36,179.68 365.39,182.65 365.59,176.49 365.61,176.5 365.76,181.82 365.84,178.67 365.86,179.8 365.89,177.45 366.06,182.89 366.09,180.89 366.11,182.89 366.29,176.69 366.32,179.28 366.34,180.89 366.47,182.35 366.49,180.03 366.57,180.55 366.59,177.85 366.69,182.51 366.82,178.34 366.84,175.39 367.02,186.31 367.07,182.44 367.09,182.79 367.12,178.1 367.29,187.07 367.32,185.17 367.34,187.96 367.52,176.62 367.57,184.53 367.59,186.13 367.64,187 367.79,175.53 367.82,179.36 367.84,181.82 367.92,187.55 368.04,179.65 368.07,180.97 368.09,180.44 368.32,195.7 368.34,190.01 368.42,187.56 368.54,200.44 368.57,198.06 368.59,198.36 368.72,199.38 368.82,195.82 368.85,200.63 368.95,202.68 369.07,201.59 369.1,201.29 369.2,209.29 369.32,203.54 369.35,205.26 369.37,205.07 369.55,212.9 369.57,211.71 369.6,212.61 369.67,205.51 369.82,215.99 369.85,211.81 369.87,214.37 369.92,209.34 370.07,211.35 370.1,214.01 370.12,217.63 370.32,213.53 370.35,212.66 370.57,219.32 370.6,217.77 370.7,213.58 370.8,221.7 370.82,221.05 370.85,221.88 370.97,214.32 371.07,221.51 371.1,222.94 371.17,223.7 371.28,217.87 371.33,219.57 371.35,221.5 371.4,224.02 371.53,219.03 371.58,219.97 371.6,220.16 371.73,225.82 371.83,222.88 371.85,223.61 371.88,220.17 372.08,226.72 372.1,225.68 372.2,220.13 372.3,229.2 372.33,225.66 372.35,228.13 372.43,222.42 372.58,229.95 372.6,229.29 372.73,223.66 372.83,227.58 372.85,225.53 373.03,224.06 373.05,229.39 373.08,228.21 373.1,227.99 373.13,230.68 373.2,226.35 373.33,227.18 373.35,226.54 373.45,225.67 373.55,227.72 373.58,225.86 373.6,230.03 373.65,230.5 373.73,225.12 373.83,226.89 373.86,225.78 374.01,229.94 374.06,224.41 374.08,226.64 374.11,225.61 374.28,232.44 374.33,215.91 374.36,215.5 374.48,216.16 374.58,210.57 374.61,213.75 374.73,209.31 374.83,211.35 374.86,212.47 374.96,202.45 375.08,206.44 375.11,207.89 375.16,209.85 375.33,201.96 375.36,203.55 375.38,203.71 375.56,200.51 375.58,201.38 375.61,202.12 375.76,196.86 375.83,200.18 375.86,194.72 375.91,197.62 376.08,196.2 376.11,197.6 376.34,191.77 376.36,195.01 376.41,195.66 376.51,190.85 376.59,192.42 376.61,194.5 376.71,186.75 376.84,191.99 376.86,191.02 376.94,185.16 377.04,192.1 377.09,188.96 377.11,189.26 377.26,181.91 377.34,186.1 377.36,187.95 377.59,182.39 377.61,180.7 377.66,178.87 377.81,185.17 377.84,179.67 377.86,180.02 377.91,176.39 378.06,182.15 378.09,179.6 378.11,178.31 378.19,174.51 378.34,184.16 378.36,179.58 378.46,173.12 378.59,177.57 378.61,177.91 378.64,181.25 378.82,171.47 378.84,170.82 378.94,177.06 379.07,172.87 379.09,172.22 379.12,168.76 379.22,175.2 379.32,172.74 379.34,172.14 379.44,173.9 379.52,170.71 379.57,171.59 379.59,169.75 379.77,171.38 379.82,169.31 379.84,170.15 379.87,167.71 380.07,171.64 380.09,169.77 380.12,171.69 380.32,166.64 380.34,166.33 380.52,170.09 380.54,164.51 380.57,166.14 380.59,164.15 380.62,163.61 380.72,168.3 380.82,166.99 380.84,165.33 380.89,160.95 381.07,170.14 381.09,169.38 381.22,157.82 381.32,166 381.35,168.25 381.4,169.76 381.52,156.75 381.57,161.68 381.6,160.09 381.67,169.89 381.8,156.78 381.82,157.79 381.85,157.84 381.92,167.79 382.07,160.37 382.1,160.59 382.15,157.63 382.3,165 382.32,164.02 382.35,163.72 382.52,158.55 382.57,160.67 382.6,160.63 382.62,157.74 382.67,164.28 382.82,159.63 382.85,158.29 382.92,158.06 383.05,162.86 383.07,161.02 383.1,159.97 383.15,156.28 383.25,161.45 383.32,160.55 383.35,163.17 383.45,153.46 383.57,160.22 383.6,162.24 383.78,155.86 383.83,158.39 383.85,157.63 384,160.51 384.05,155.78 384.08,156.71 384.1,156.45 384.2,152.81 384.3,156.69 384.33,155.28 384.35,156.66 384.38,157.64 384.55,152.9 384.58,154.29 384.6,153.71 384.7,158.48 384.83,154.65 384.85,153.84 384.98,159.53 385.05,153.07 385.08,153.74 385.1,155 385.18,154.33 385.25,157.71 385.33,156.05 385.35,157.39 385.45,150.79 385.58,158.62 385.6,159.43 385.7,159.56 385.75,154.26 385.83,156.04 385.85,154 385.88,151.76 386.03,158.32 386.08,154.87 386.1,155.02 386.13,158.12 386.21,153.8 386.33,155.64 386.36,159.24 386.56,151.92 386.58,152.51 386.61,151.35 386.71,157.15 386.83,152.3 386.86,154.47 386.88,151.95 386.91,158.18 387.08,154.4 387.11,156.38 387.18,154.14 387.33,157.41 387.36,153.78 387.53,156.83 387.58,155.71 387.61,155.45 387.68,153.1 387.83,157.41 387.86,155.85 387.91,159.05 388.01,150.65 388.08,155.86 388.11,158.97 388.23,152.03 388.33,154.37 388.36,153.85 388.48,157.82 388.58,149.47 388.61,147.42 388.81,157.03 388.84,156.33 388.86,152.13 388.91,149.59 389.09,156.86 389.11,158 389.29,150.5 389.34,156.3 389.36,154.96 389.39,157 389.51,151.35 389.59,156.8 389.61,156.24 389.69,156.86 389.81,151.24 389.84,151.82 389.86,156.72 389.96,156.73 390.09,151.04 390.11,150.89 390.21,156.36 390.34,149.67 390.36,151.17 390.44,148.63 390.56,159 390.59,155.98 390.61,156.49 390.71,149.19 390.84,155.41 390.86,156.63 390.91,157.03 390.96,152.16 391.06,152.94 391.09,151.27 391.32,157.25 391.34,153.18 391.44,151.48 391.52,155.96 391.57,155.19 391.59,157.32 391.64,159.98 391.77,151.08 391.82,151.86 391.84,152.8 392.02,159.89 392.07,152.66 392.09,153.24 392.12,150.43 392.27,160.26 392.32,155.17 392.34,157.25 392.39,158.79 392.54,153.16 392.57,154.08 392.59,156.98 392.69,157.9 392.82,153.22 392.84,154.94 392.92,159.2 393.07,156.28 393.09,155.09 393.17,154.37 393.29,159.62 393.32,158.4 393.34,158.41 393.44,154.83 393.57,157.71 393.6,157.93 393.8,154.73 393.82,155.6 393.85,157.62 393.87,161.21 394.07,155.82 394.1,157.73 394.12,158.3 394.25,154.04 394.32,156.92 394.35,160.24 394.37,154.4 394.57,158.18 394.6,155.26 394.82,162.43 394.85,160.72 395.02,155.92 395.07,158.91 395.1,154.8 395.22,160.61 395.32,156.41 395.35,156.33 395.47,161.57 395.57,154.56 395.6,157.93 395.72,159.42 395.8,155.8 395.82,157.8 395.85,157.22 396,161.04 396.05,155.82 396.08,156.55 396.1,155.24 396.13,152.78 396.33,161.12 396.35,158.74 396.45,155.94 396.58,159.02 396.6,160 396.7,157.24 396.8,160.96 396.83,157.83 396.85,154.81 397.08,163.19 397.1,160.06 397.13,162.08 397.23,153.83 397.33,159.55 397.35,164.08 397.4,164.38 397.55,157.47 397.58,159.54 397.6,161.24 397.65,162.78 397.73,157.2 397.83,159.75 397.85,162.09 397.93,162.41 398,159.04 398.08,159.55 398.1,159.78 398.28,165.58 398.3,159.49 398.33,162.24 398.35,162.9 398.45,157.36 398.48,163.75 398.58,161.89 398.61,161.12 398.71,156.75 398.81,164.6 398.83,163.08 398.86,164.11 399.01,158.01 399.08,164.36 399.11,161.77 399.18,165.02 399.26,160.16 399.33,161.28 399.36,162.99 399.51,165.11 399.56,160.85 399.58,162.01 399.61,160.43 399.66,157.71 399.78,166.78 399.83,164.28 399.86,163.32 399.96,158.65 400.08,161.16 400.11,163.49 400.16,162.97 400.26,164.64 400.33,162.97 400.36,160.46 400.38,157.63 400.51,165.62 400.58,164.09 400.61,164.44 400.68,158.46 400.83,169.5 400.86,169.15 401.04,159.55 401.09,163.97 401.11,164.35 401.16,169.17 401.26,160.79 401.34,162.4 401.36,164.42 401.46,168.17 401.59,160.86 401.61,163.54 401.69,161.55 401.76,167.53 401.84,165.86 401.86,162.5 401.89,160.74 402.04,168.23 402.09,164.75 402.11,165.65 402.24,161.12 402.34,169.52 402.36,165.07 402.39,169.57 402.54,160.05 402.59,163.35 402.61,165.02 402.69,171.11 402.81,160.39 402.84,164.2 402.86,163.5 402.89,162.85 403.01,170.66 403.09,165.44 403.11,163.18 403.16,160.47 403.34,170.94 403.36,168.92 403.44,162.37 403.57,169.32 403.59,171.23 403.62,172.71 403.77,164.67 403.82,165.89 403.84,164 403.97,168.89 404.07,164.35 404.09,162.65 404.27,171.3 404.32,166.34 404.34,167.44 404.39,164.32 404.54,169.03 404.57,166.78 404.59,168.59 404.69,162.08 404.79,170.7 404.82,169.05 404.84,167.89 404.94,163.69 405.07,170.57 405.09,173.61 405.29,165.97 405.32,167.62 405.34,169.49 405.42,170.8 405.57,166.53 405.59,169.52 405.67,173.13 405.82,167.71 405.84,166.8 405.87,172.22 406.07,164.18 406.1,166.01 406.17,165.77 406.32,170.39 406.35,172.77 406.47,165.31 406.57,171.35 406.6,171.92 406.62,174.63 406.7,167.97 406.82,170.57 406.85,170.86 406.97,167.42 407.07,174.44 407.1,171.27 407.12,173.56 407.27,166.87 407.32,168.83 407.35,169.68 407.37,167.95 407.45,175.33 407.57,168.02 407.6,166.92 407.77,175.15 407.82,173.02 407.85,171.93 407.92,169.34 408.02,173.27 408.07,171.73 408.1,169 408.17,168.18 408.2,173.7 408.32,171.46 408.35,171.26 408.42,174.49 408.45,168.3 408.58,174.12 408.6,173.09 408.7,175.55 408.8,166.94 408.83,169.1 408.85,168.51 408.93,176.7 409.08,168.33 409.1,169.02 409.13,167.49 409.2,174.95 409.33,173.98 409.35,174.67 409.43,175.45 409.58,172.13 409.6,173.17 409.7,176.82 409.83,171.55 409.85,173.9 409.88,170.3 410.08,175.43 410.1,174 410.13,175.15 410.23,172.17 410.33,172.49 410.35,172.11 410.48,171.73 410.53,176.22 410.58,175.5 410.6,174.33 410.65,175.26 410.78,171.06 410.83,172.31 410.85,176.44 410.98,179.31 411.08,170.62 411.11,170.41 411.18,179.83 411.33,170.79 411.36,174.55 411.38,172.39 411.56,178.61 411.58,175.66 411.61,177.43 411.66,171.9 411.81,180.26 411.83,177.83 411.86,178.94 411.96,175.7 412.08,178.95 412.11,175.92 412.18,180.93 412.26,174.02 412.33,178.56 412.36,180.2 412.43,180.4 412.51,173.76 412.58,174.73 412.61,178.27 412.68,181.26 412.81,174.76 412.83,174.83 412.86,175.8 413.03,182.76 413.08,172.72 413.11,174.16 413.13,173.46 413.31,183.63 413.33,181.81 413.36,180.04 413.44,176.56 413.59,182.33 413.61,183.09 413.64,183.13 413.79,177.29 413.84,179.78 413.86,180.19 413.96,184.67 414.09,174.63 414.11,177.11 414.21,185.96 414.34,176.92 414.36,177.21 414.39,176.47 414.51,183.83 414.59,181.32 414.61,180.41 414.71,174.24 414.84,182.8 414.86,183.58 414.99,179.23 415.09,179.33 415.11,180.66 415.19,184.11 415.31,180.21 415.34,182.99 415.36,181.68 415.46,186.03 415.49,180.68 415.59,181.14 415.61,181.51 415.71,184.81 415.84,179.83 415.86,182.81 416.02,184.25 416.07,181.49 416.09,182.54 416.24,179.39 416.27,184.63 416.32,181.51 416.34,182.49 416.54,180.48 416.57,185.56 416.59,184.76 416.72,180.75 416.79,185.33 416.82,180.92 416.84,184.02 416.94,185.43 417.04,181.98 417.07,182.42 417.09,184.9 417.14,182.33 417.19,185.22 417.32,183.09 417.34,186.05 417.42,187.74 417.54,181.02 417.57,183.58 417.59,184.63 417.69,189.37 417.79,181.98 417.82,184.76 417.84,184.88 417.97,188.08 417.99,182.22 418.07,186.08 418.09,185.84 418.19,184.33 418.22,188.25 418.32,187.78 418.34,187.6 418.55,194.78 418.57,191.57 418.6,194.47 418.65,199.28 418.82,196.77 418.85,200.76 418.87,199.08 419.07,202.97 419.1,201.57 419.15,200.62 419.25,205.68 419.32,203.7 419.35,205.18 419.4,202.64 419.45,208.64 419.57,205.74 419.6,208.81 419.7,212.18 419.77,205.97 419.82,208.04 419.85,207.27 419.95,215.24 420.07,214.33 420.1,212.42 420.15,211.3 420.3,218.93 420.32,214.08 420.35,219.79 420.55,215.17 420.57,219.96 420.6,219.84 420.72,216.16 420.82,220.68 420.85,218.3 420.88,221.74 421.08,218.4 421.1,217.87 421.23,228.06 421.33,221.35 421.35,221.07 421.53,229.52 421.58,225.54 421.6,225.15 421.65,222.85 421.83,229.57 421.85,226.42 422,224.41 422.08,229.79 422.1,229.81 422.13,230.93 422.28,224.55 422.33,227.55 422.35,225.41 422.55,230.13 422.58,226.11 422.6,226.86 422.63,225.07 422.7,233.11 422.83,231.38 422.85,229.93 423.03,226.37 423.08,230.63 423.1,235.86 423.25,227.91 423.33,230.25 423.36,229.8 423.41,232.98 423.56,226.69 423.58,228.77 423.61,228.2 423.78,234.64 423.83,230.39 423.86,228.63 423.98,233.32 424.08,231.91 424.11,229.61 424.26,235.81 424.33,231.43 424.36,231.62 424.38,228.44 424.53,237.69 424.58,234.02 424.61,233.67 424.71,217.09 424.83,218.72 424.86,222.13 425.03,210.58 425.08,213.45 425.11,217.14 425.33,208.39 425.36,210.08 425.48,212.81 425.56,206.68 425.58,209.19 425.61,210.44 425.76,203.32 425.84,206.33 425.86,203.45 425.89,206.52 426.09,200.55 426.11,203.21 426.14,206.12 426.31,199.2 426.34,199.73 426.36,195.59 426.41,201.13 426.59,196.86 426.61,199.26 426.71,200.91 426.81,192.6 426.84,192.69 426.86,192.16 426.91,191.5 426.99,196.31 427.09,191.53 427.11,191.27 427.21,189.19 427.31,196.01 427.34,192.74 427.36,191.86 427.39,186.09 427.59,188.65 427.61,186.98 427.66,191.04 427.74,183.93 427.84,186.55 427.86,186.8 428.06,183.13 428.09,186.58 428.11,187.18 428.14,187.26 428.26,181.49 428.32,182.06 428.34,182.49 428.39,186.3 428.54,178.41 428.57,179.01 428.59,181.58 428.72,183.27 428.77,180.21 428.82,181.71 428.84,178.19 428.89,176.43 428.94,182.44 429.07,182.32 429.09,178.22 429.19,180.19 429.32,175.19 429.34,176.14 429.44,173.25 429.49,178.87 429.57,176.58 429.59,175.92 429.69,171.99 429.82,179.16 429.84,176.5 429.97,169.63 430.04,176.54 430.07,175.56 430.09,177.79 430.12,179.51 430.27,168.61 430.32,173.48 430.34,169.52 430.42,175.15 430.57,166.62 430.59,166.24 430.69,174.65 430.82,169.6 430.85,168.18 430.87,166.55 431,174.13 431.07,171.22 431.1,169.72 431.17,164.86 431.32,170.58 431.35,170.36 431.45,164.64 431.57,169.96 431.6,169.39 431.65,172.11 431.75,162.56 431.82,166.58 431.85,167 431.87,170.69 432.07,162.89 432.1,162.56 432.25,169 432.32,161.1 432.35,158.73 432.55,168.82 432.57,168.73 432.6,164.7 432.7,159.31 432.82,167.31 432.85,168.42 433.07,159.84 433.1,163.84 433.22,166.61 433.28,159.45 433.33,161.14 433.35,158.23 433.53,165.2 433.58,162.37 433.6,161.45 433.65,162.39 433.68,160.2 433.83,160.39 433.85,160.07 433.88,163.62 434,159.28 434.08,161.96 434.1,162.69 434.13,158.44 434.33,164.21 434.35,161.02 434.48,163.35 434.55,157.75 434.58,159.37 434.6,158.28 434.73,163.65 434.83,159.42 434.85,155.82 435.05,162.03 435.08,157.78 435.1,159.46 435.15,155.36 435.3,160.89 435.33,159.59 435.35,161.05 435.48,155.98 435.58,160.88 435.6,161.68 435.73,155.68 435.83,159.85 435.86,158.92 435.88,161.62 436.06,156.12 436.08,159.05 436.11,159.84 436.21,156.44 436.33,157.44 436.36,158.42 436.38,159.53 436.56,156.49 436.58,158.43 436.61,158.84 436.63,154.33 436.83,157.54 436.86,158.61 436.96,159.33 436.98,155.87 437.08,157.78 437.11,152.95 437.31,159.41 437.33,159.2 437.36,158.85 437.51,152.89 437.58,159.35 437.61,156.2 437.63,159.35 437.78,153.97 437.83,157.17 437.86,158.23 437.93,153.82 438.08,155.06 438.11,155.55 438.26,153.51 438.34,156.92 438.36,155.84 438.39,158.67 438.56,153.78 438.59,155.57 438.61,154.73 438.69,158.25 438.84,154.08 438.86,155.52 438.89,149.98 438.99,158.46 439.09,158.33 439.11,154.31 439.16,157.98 439.29,151.94 439.34,156.15 439.36,155.17 439.46,159.74 439.59,153.42 439.61,152.07 439.69,160.16 439.84,156.51 439.86,156.11 439.96,158.83 440.09,155.28 440.11,153.93 440.19,151.91 440.31,160.09 440.34,159.77 440.36,157.21 440.46,150.29 440.56,157.42 440.59,157.25 440.61,163.15 440.74,153.72 440.82,154.1 440.84,159.43 441.07,155.36 441.09,155.13 441.12,154.12 441.24,159.04 441.32,157.9 441.34,157.08 441.39,155.3 441.52,159.93 441.57,158.25 441.59,160 441.64,160.72 441.79,155.75 441.82,156.68 441.84,157.23 442.02,160.81 442.04,155.15 442.07,155.82 442.09,155.13 442.12,154.8 442.27,162.09 442.32,158.54 442.34,158 442.47,155.07 442.57,159.46 442.59,158.95 442.62,159.95 442.74,155.02 442.82,158.47 442.84,162.22 443.02,153.96 443.07,155.99 443.09,159.75 443.12,157.51 443.22,161.27 443.32,157.96 443.35,156.07 443.42,154.71 443.55,165.09 443.57,162.54 443.6,161.44 443.72,154.97 443.82,164.22 443.85,163.77 444,154.65 444.07,158.55 444.1,159.11 444.15,163.4 444.32,153.69 444.35,156.24 444.45,163.77 444.55,155.8 444.57,159.02 444.6,154.33 444.7,161.4 444.82,160.2 444.85,159.54 444.95,161.9 445.05,155.95 445.07,158.05 445.1,158.34 445.3,161.84 445.32,159.84 445.35,159.17 445.4,158.96 445.5,165.09 445.57,161.7 445.6,157.27 445.62,156.47 445.83,162.44 445.85,162.44 446.08,156.94 446.1,161.29 446.23,161.31 446.33,158.07 446.35,156.72 446.55,162.4 446.58,157.97 446.6,158.82 446.65,156.51 446.8,162.65 446.83,160.96 446.85,160.74 446.93,160.93 447,157.43 447.08,160.15 447.1,161.88 447.15,163.4 447.25,156.74 447.33,158.75 447.35,163.25 447.4,164.55 447.55,156.66 447.58,160.94 447.6,159.14 447.63,158.28 447.78,166.83 447.83,162.09 447.85,163.82 447.9,165.36 447.98,158.53 448.08,161.75 448.1,163.74 448.33,159.36 448.36,163.25 448.43,163.47 448.58,159.46 448.61,162.06 448.71,164.25 448.76,158.69 448.83,161.2 448.86,165.69 448.93,167.33 449.08,159.66 449.11,160.31 449.23,167.14 449.33,161.37 449.36,158.92 449.41,164.56 449.58,163.05 449.61,161.46 449.68,159.64 449.78,165.16 449.83,162.63 449.86,167.79 450.03,160.49 450.08,163.95 450.11,162.64 450.21,160.08 450.31,163.22 450.33,162.43 450.36,164.98 450.43,166.14 450.56,159.82 450.58,160.51 450.61,161.56 450.76,165.87 450.84,157.78 450.86,159.21 450.89,158.27 450.99,167.94 451.09,167.36 451.11,163.59 451.16,160.26 451.31,166.1 451.34,164.94 451.36,167.71 451.51,160.65 451.59,161.21 451.61,164.26 451.66,166.53 451.81,160.03 451.84,162.28 451.86,157.08 452.01,168.3 452.09,163.99 452.11,162.3 452.16,158.98 452.34,166.29 452.36,165.59 452.39,166.98 452.51,161.42 452.59,165.03 452.61,166.6 452.66,168.4 452.81,162.69 452.84,165.41 452.86,164.86 452.89,160.75 453.04,166.63 453.06,164.43 453.09,164.01 453.14,161.79 453.29,167.55 453.32,165.77 453.34,167 453.39,163.75 453.49,170.3 453.57,167.93 453.59,167.67 453.69,163.67 453.82,173.61 453.84,170.09 454.02,165.04 454.07,168.64 454.09,170.21 454.19,174.69 454.27,162.76 454.32,166.54 454.34,165.25 454.52,172.51 454.57,169.37 454.59,166.89 454.72,164.12 454.74,170.99 454.82,170.27 454.84,167.54 454.92,166.7 454.97,169.42 455.07,168.68 455.09,170.75 455.22,167 455.32,168.26 455.34,170.1 455.44,170.39 455.52,165.13 455.57,168.07 455.6,168.85 455.67,172.82 455.82,168.2 455.85,167.86 456,173.27 456.05,166.26 456.07,167.78 456.1,168.98 456.12,167.67 456.17,173.38 456.32,170.44 456.35,172.64 456.5,166.71 456.57,173.73 456.6,174.1 456.75,168.51 456.82,172.51 456.85,171.67 456.9,174.32 457.07,167.09 457.1,168.79 457.22,175.81 457.32,171.17 457.35,165.95 457.47,172.88 457.57,170.79 457.6,170.32 457.7,168.5 457.8,172.31 457.82,169.31 457.85,173.66 457.87,170 458.08,172.09 458.1,169.48 458.33,174.47 458.35,172.75 458.38,172.11 458.4,174.19 458.58,173.22 458.6,175.64 458.65,168.63 458.83,174.91 458.85,173.26 458.9,174.76 459.03,168.79 459.08,169.2 459.1,174.79 459.23,176.39 459.33,169.43 459.35,172.05 459.38,170.48 459.45,177.13 459.58,174.43 459.6,173.16 459.63,169.26 459.83,178.51 459.85,176.62 459.98,170.8 460.08,174.66 460.1,174.89 460.15,176.03 460.33,167.98 460.35,170.58 460.45,178.21 460.58,169.98 460.61,170.98 460.66,170.86 460.78,178.66 460.83,176.2 460.86,174.2 460.93,170.59 461.08,177.36 461.11,176.98 461.28,177.1 461.33,173.06 461.36,174.53 461.51,177.32 461.58,173.53 461.61,176.23 461.73,177.33 461.78,172.86 461.83,175.78 461.86,174.81 462.01,178.66 462.08,176.66 462.11,177.78 462.18,171.89 462.33,179.29 462.36,175.58 462.38,178.84 462.53,173.82 462.58,174.15 462.61,176.18 462.68,180.34 462.81,171.86 462.83,173.42 462.86,174.65 462.91,180.02 463.09,174.97 463.11,176.74 463.31,180.05 463.34,172.91 463.36,177.61 463.41,172.44 463.59,180.41 463.61,180.69 463.66,180.71 463.79,174.19 463.84,178.15 463.86,174.99 463.91,182.67 464.09,176.94 464.11,178.96 464.14,173.78 464.34,182.22 464.36,177.98 464.44,174.58 464.59,181.57 464.61,178.5 464.69,173 464.81,184.88 464.84,179.52 464.86,180.01 464.91,183.98 464.99,176.08 465.09,178.13 465.11,180.27 465.29,182.73 465.34,176.91 465.36,177.02 465.57,183.04 465.59,180.12 465.64,175.57 465.79,180.67 465.82,180.48 465.84,179.65 465.89,182.61 465.99,177.72 466.07,178.27 466.09,178.04 466.19,183.08 466.32,176.07 466.34,176.75 466.39,175.65 466.47,186.11 466.57,183.66 466.59,184.33 466.64,178.56 466.82,186.2 466.84,182.75 466.87,187.33 467.04,178.42 467.07,182.49 467.09,183.03 467.22,187.96 467.29,178.9 467.32,180.68 467.34,180.68 467.42,178.39 467.57,185.94 467.59,182.64 467.67,178.66 467.82,184.78 467.84,187.43 468.02,178.18 468.07,183.95 468.1,181.94 468.17,186.19 468.27,180.53 468.32,181.07 468.35,183.28 468.45,184.75 468.55,181.68 468.57,182.76 468.6,180.34 468.77,190.07 468.82,188.45 468.85,184.78 469.05,198.39 469.07,197.7 469.1,196.65 469.17,191.87 469.32,201.46 469.35,198.49 469.37,201.81 469.52,196.92 469.57,201.48 469.6,200.02 469.67,205.28 469.82,201.95 469.85,201.12 469.95,210.18 470.07,205.29 470.1,204.79 470.27,210.58 470.32,210.23 470.35,208.31 470.55,215.33 470.58,215.17 470.6,213.81 470.68,207.76 470.8,216.69 470.83,215.64 470.85,214.74 470.95,212.88 471.08,220.89 471.1,220.2 471.3,214.93 471.33,216.7 471.35,220.44 471.45,222.59 471.55,217.31 471.58,219.95 471.6,215.67 471.78,222.38 471.83,222.25 471.85,221.46 471.88,219.33 472.05,224.65 472.08,222.43 472.1,224.74 472.33,218.94 472.35,219.79 472.48,228.03 472.58,222.07 472.6,222.95 472.65,220.71 472.83,228.92 472.85,226.29 472.96,223.93 473.08,229.73 473.11,228.98 473.21,225.3 473.26,230.07 473.33,227.22 473.36,227.84 473.46,226.98 473.58,233.6 473.61,231.31 473.63,232.73 473.76,225.81 473.83,232.12 473.86,230.86 473.93,233.35 473.98,227.9 474.08,230.69 474.11,228.75 474.16,228.49 474.26,234.09 474.33,232.45 474.36,227.21 474.58,234.66 474.61,233.27 474.71,227.35 474.83,234.99 474.86,235.96 475.03,217.04 475.08,220.78 475.11,221.54 475.16,223.3 475.31,210.41 475.33,213.6 475.36,211.54 475.44,222.88 475.59,208.43 475.61,208.56 475.66,204.47 475.81,215.65 475.84,212.62 475.86,209.77 475.89,209.9 475.99,201.57 476.09,209.51 476.11,209.19 476.14,211.22 476.29,200.56 476.34,204.07 476.36,206.13 476.59,198.92 476.61,199.37 476.69,202.04 476.84,198.06 476.86,200.22 477.01,193.27 477.09,200.71 477.11,196.06 477.19,197.58 477.26,192.12 477.34,192.98 477.36,189.67 477.56,196.27 477.59,191.11 477.61,190.45 477.64,191.3 477.69,184.49 477.84,190.17 477.86,189 477.94,184 478.07,185.89 478.09,190.12 478.29,182.16 478.32,183.4 478.34,182.23 478.37,180.76 478.47,185.88 478.57,183.67 478.59,181.23 478.67,185.17 478.77,179.29 478.82,179.94 478.84,179.56 478.89,182.87 479.07,173.65 479.09,178.4 479.17,183.22 479.29,171.65 479.32,176.03 479.34,173.89 479.52,178.35 479.57,174.75 479.59,175.17 479.62,172.88 479.79,179.36 479.82,178.38 479.84,177.66 479.94,170.66 480.07,175.81 480.09,176.3 480.12,176.92 480.22,169.93 480.32,172.52 480.34,177.81 480.57,169.48 480.6,170.5 480.72,176.96 480.82,167.4 480.85,167.85 481.02,175.59 481.07,168.78 481.1,170.93 481.12,166.31 481.32,175.06 481.35,168.04 481.45,164.54 481.57,173.76 481.6,170.75 481.62,171.13 481.75,161.68 481.82,168.48 481.85,166.07 481.87,171.69 482.07,162.78 482.1,162.19 482.22,168.33 482.32,164.91 482.35,162.41 482.42,161.52 482.57,166.02 482.6,169.63 482.7,159.3 482.82,163.49 482.85,165.9 482.88,167.96 483,158.36 483.08,159.33 483.1,162.34 483.15,170.55 483.33,156.73 483.35,158.91 483.48,167.78 483.58,161.71 483.6,162.27 483.68,158.36 483.83,167.31 483.85,163.12 483.93,159.34 484.08,161.63 484.1,162.2 484.18,162.71 484.28,159.12 484.33,160.93 484.35,157.79 484.43,160.98 484.48,157.65 484.58,159.16 484.6,159.01 484.68,161.92 484.75,155.69 484.83,158.97 484.85,159.85 484.88,162.42 485.08,155.58 485.1,155.32 485.13,161.6 485.33,159.15 485.36,158.76 485.58,155.45 485.61,157.53 485.63,155.71 485.78,161.06 485.83,158.25 485.86,159.1 485.93,155.19 486.08,161.84 486.11,159.22 486.13,160 486.26,154.63 486.33,158.05 486.36,157.39 486.41,161.82 486.58,155.03 486.61,155.97 486.63,153.48 486.81,158.63 486.83,155.86 486.86,158.7 487.01,156.29 487.08,156.45 487.11,159.93 487.23,155.78 487.28,160.81 487.33,157.71 487.36,159.66 487.41,154.22 487.58,159.03 487.61,156.73 487.68,159.94 487.76,153.56 487.84,156.94 487.86,157.62 487.89,156.11 487.91,159.65 488.09,156.59 488.11,155.87 488.14,159.45 488.31,154.79 488.34,156.61 488.36,154.38 488.44,153.25 488.59,160.13 488.61,156.81 488.69,152.79 488.84,158.73 488.86,155.8 488.89,158.73 488.99,152.59 489.09,156.81 489.11,157.74 489.24,154.75 489.34,157.94 489.36,159.14 489.51,154.78 489.56,160.18 489.59,158.89 489.61,160.97 489.81,152.91 489.84,153.83 489.86,155.67 489.99,159.5 490.04,154.93 490.09,157.22 490.11,156.89 490.14,153.78 490.26,160.56 490.32,157.97 490.34,155.2 490.42,153.85 490.57,161.24 490.59,162.76 490.74,153.18 490.82,156.53 490.84,157.89 490.97,160.36 491.07,154.04 491.09,157.88 491.19,159.07 491.29,153.27 491.32,154.74 491.34,156.28 491.49,159.01 491.54,154.21 491.57,155.62 491.59,154.52 491.74,161.65 491.82,155.67 491.84,156.14 491.89,153.55 492.04,160.08 492.07,158.11 492.09,156.98 492.19,153.7 492.32,159.33 492.34,159.33 492.57,152.29 492.59,154.26 492.74,158.73 492.82,156.12 492.85,157.41 492.87,152.67 493,159.3 493.07,157.75 493.1,154.8 493.17,152.86 493.32,158.52 493.35,161.5 493.45,153.6 493.57,157.29 493.6,157.23 493.62,160.78 493.7,153.92 493.82,156.8 493.85,157.57 493.87,162.54 494.05,155.94 494.07,158.9 494.1,155.63 494.2,154.9 494.3,159.73 494.32,159.61 494.35,159.58 494.47,156.34 494.5,159.75 494.57,156.51 494.6,158.55 494.67,158.91 494.8,153.95 494.82,157.98 494.85,157.13 494.9,161.21 495.02,155.93 495.07,159.38 495.1,157.58 495.2,159.64 495.25,156.54 495.33,157.5 495.35,156.87 495.45,156.43 495.5,161.02 495.58,158.45 495.6,157.29 495.63,156.13 495.8,160.15 495.83,160.15 495.85,159.53 495.98,162.08 496.08,156.14 496.1,154.41 496.18,160.01 496.33,159.18 496.35,161.05 496.38,162.05 496.43,157.34 496.58,159.49 496.6,157.48 496.68,156.6 496.78,160.26 496.83,159.5 496.85,159.04 496.98,156.22 497.08,160.55 497.1,160.9 497.18,163.31 497.3,156.67 497.33,158.83 497.35,157.03 497.48,160.51 497.58,160 497.6,159.28 497.7,156.61 497.76,163.98 497.83,162.47 497.86,162.21 498.01,156.92 498.08,163.32 498.11,162.21 498.13,165.19 498.28,155.9 498.33,161.85 498.36,162.74 498.41,165.41 498.53,158.26 498.58,159.73 498.61,160.9 498.68,165.15 498.83,158.98 498.86,159.77 498.88,157.53 498.98,164.22 499.08,160.56 499.11,162.83 499.13,159.13 499.33,166.03 499.36,163.58 499.43,158.19 499.58,164.55 499.61,163.54 499.71,165.41 499.78,159.2 499.83,159.5 499.86,162.54 499.98,166.37 500.08,158.91 500.11,158.33 500.24,166.38 500.34,162.66 500.36,159.7 500.39,159.04 500.56,166.28 500.59,162.55 500.61,162.65 500.74,158.97 500.84,165.51 500.86,165.24 500.89,165.42 500.96,159.46 501.09,160.33 501.11,164.84 501.21,166.82 501.24,161.62 501.34,162.58 501.36,163.51 501.39,160.21 501.49,165.72 501.59,163.3 501.61,160.5 501.81,166.39 501.84,164.06 501.86,166.88 501.99,162.29 502.09,167.46 502.11,163.78 502.24,162.59 502.34,166.53 502.36,165.58 502.39,166.04 502.46,161.49 502.59,165.74 502.61,166.85 502.69,170.47 502.82,162.69 502.84,161.86 503.02,173.34 503.07,166.96 503.09,168.63 503.17,160.95 503.32,172.44 503.34,169.8 503.47,160.34 503.57,166.92 503.59,166.15 503.69,170.32 503.79,163.72 503.82,164.65 503.84,161.34 503.89,168.69 504.07,164.37 504.09,164.52 504.22,169.38 504.32,167.79 504.34,167.7 504.39,164.01 504.54,168.22 504.57,166.01 504.59,167.81 504.62,172.43 504.77,166.11 504.82,167.11 504.84,166.43 504.99,166.21 505.07,170.1 505.09,169.54 505.14,170.08 505.2,164.46 505.32,166.97 505.35,166.68 505.5,170.54 505.55,165.68 505.57,167 505.6,168.45 505.72,170.23 505.77,165.88 505.82,167.56 505.85,167.37 505.97,166.86 506.07,171.91 506.1,170.4 506.15,163.96 506.32,167.35 506.35,169.29 506.45,165.6 506.57,172.25 506.6,173.33 506.77,163.62 506.82,167.99 506.85,168.81 506.9,172.9 507.05,163.28 507.07,165.76 507.1,166.9 507.25,175.44 507.32,170.36 507.35,169.67 507.42,163.08 507.55,176.31 507.57,174.03 507.6,174.68 507.65,165.76 507.83,170.55 507.85,172.78 507.88,172.79 508.05,167.41 508.08,167.97 508.1,166.72 508.2,174.57 508.33,167.44 508.35,168.85 508.38,168.39 508.53,174.3 508.58,172.79 508.6,171.15 508.65,168.14 508.8,175.36 508.83,175.17 508.85,175.51 508.98,167.82 509.08,175.32 509.1,175.32 509.15,176.1 509.2,168.59 509.33,174.11 509.35,173.87 509.4,174.71 509.58,169.61 509.6,170.5 509.63,169.75 509.7,174.16 509.83,173.63 509.85,169.58 510.03,174.3 510.08,172.52 510.1,174.22 510.28,174.87 510.31,171.54 510.33,172.34 510.36,172.53 510.43,173.41 510.51,168.92 510.58,170.69 510.61,174.16 510.71,176.36 510.83,169.95 510.86,170.31 510.91,168.48 510.96,177.42 511.08,177.21 511.11,173.34 511.23,169.8 511.33,178.17 511.36,176.41 511.48,171.67 511.58,178.91 511.61,178.05 511.63,178.51 511.76,170.09 511.83,173.69 511.86,175.25 511.96,182.42 512.03,171.18 512.08,172.82 512.11,173.68 512.13,172.63 512.21,180.99 512.33,174.37 512.36,175.25 512.41,170.74 512.58,178.77 512.61,178.31 512.76,173.89 512.84,176.84 512.86,180.34 512.96,173.74 513.09,173.84 513.11,171.85 513.24,181.78 513.34,174.32 513.36,172.94 513.51,180.18 513.59,178.88 513.61,174.74 513.69,172.18 513.84,178.11 513.86,177.07 513.89,174.11 513.99,179.15 514.09,175.93 514.11,176.58 514.16,179.84 514.24,173.51 514.34,175.17 514.36,175.85 514.46,181.47 514.59,176.79 514.61,174.95 514.64,174.87 514.84,180.7 514.86,179.54 514.89,180.76 515.04,176.41 515.06,180.16 515.09,177.69 515.14,176.4 515.27,179.93 515.32,178.9 515.34,179.87 515.47,174.11 515.57,178.18 515.59,178.66 515.62,181.24 515.82,176.95 515.84,179.8 515.89,177.23 515.94,180.91 516.07,179.73 516.09,178.25 516.17,175.93 516.19,180.23 516.32,179.51 516.34,180.86 516.49,175.63 516.57,177.91 516.59,179.38 516.72,176.98 516.82,182.84 516.84,181.71 516.87,183.57 517.07,176.92 517.09,178.25 517.22,184.31 517.32,179.73 517.34,173.36 517.52,186 517.57,183.67 517.6,181.34 517.7,176.52 517.8,182.96 517.82,181.77 517.85,184.11 518,179.25 518.05,184.93 518.07,183.65 518.1,185 518.25,178.09 518.32,182 518.35,181.98 518.42,186.88 518.55,177.83 518.57,181.35 518.6,179.17 518.72,185.82 518.82,179.07 518.85,178.31 518.9,177.81 519.05,185.65 519.07,184.53 519.1,181.78 519.32,193.86 519.35,196.84 519.47,190.51 519.57,194.83 519.6,196.91 519.72,199.32 519.8,195.93 519.82,197.3 519.85,197.54 519.97,203.82 520.08,201.56 520.1,196.94 520.25,208.2 520.33,205.49 520.35,206.6 520.38,203.37 520.5,210.95 520.58,209.85 520.6,211.88 520.78,207.64 520.83,214.34 520.85,214.27 520.88,212.77 520.9,217.49 521.08,213.78 521.1,214.73 521.13,214.47 521.3,219.52 521.33,218.15 521.35,219.01 521.43,217.45 521.45,219.94 521.58,217.71 521.6,219.13 521.73,224.9 521.8,218.74 521.83,219.36 521.85,217.83 522.05,225.15 522.08,221.11 522.1,221.94 522.18,220.14 522.3,228.11 522.33,226.42 522.35,227.54 522.48,221.52 522.58,227.05 522.61,227.78 522.66,229.65 522.83,224.47 522.86,224.34 522.93,231.28 523.08,226.96 523.11,225.12 523.28,235.41 523.33,233.08 523.36,227.92 523.41,227.47 523.56,236.85 523.58,236.15 523.61,235.49 523.71,225.97 523.83,235.89 523.86,237.14 523.88,237.83 524.01,228.32 524.08,232.01 524.11,234.77 524.21,237.83 524.31,230.44 524.33,233.36 524.36,231.44 524.46,237.03 524.58,232.04 524.61,233.38 524.63,229.74 524.81,236.85 524.83,235.3 524.86,233.04 524.91,230.77 525.06,239.21 525.09,238.38 525.11,236.95 525.21,235.08 525.31,237.48 525.34,237.35 525.36,226.04 525.44,226.53 525.56,219.87 525.59,219.89 525.61,222.02 525.64,224.93 525.74,216.38 525.84,218.26 525.86,218.94 525.96,220.38 526.09,214.07 526.11,214.22 526.16,217.71 526.34,209.68 526.36,209.74 526.41,206.54 526.56,212.91 526.59,212.21 526.61,210.64 526.71,203.13 526.84,207.26 526.86,208.09 526.99,202.18 527.09,204.31 527.11,205.35 527.16,205.73 527.31,199.09 527.34,201.53 527.36,202.42 527.41,197.96 527.57,198.08 527.59,200.18 527.62,200.21 527.74,195.8 527.82,199.22 527.84,200.47 528.04,192.71 528.07,198.12 528.09,195.98 528.12,199.47 528.29,186.44 528.32,190.91 528.34,191.87 528.44,197.44 528.54,187.45 528.57,187.8 528.59,186.79 528.72,195.3 528.82,191.61 528.84,186.43 528.92,184.9 528.97,191.24 529.07,191.03 529.09,189.8 529.24,182.41 529.32,186.58 529.34,187.9 529.39,188.86 529.52,181.61 529.57,185.03 529.59,185.65 529.62,185.93 529.82,180 529.84,177.21 530,184.1 530.07,178.81 530.1,180.59 530.17,177.58 530.32,182.08 530.35,179.68 530.4,182.22 530.47,175.37 530.57,178.05 530.6,178.87 530.62,180.8 530.8,174.36 530.82,178.65 530.85,174.36 531.05,180.78 531.07,180.19 531.1,179.54 531.22,171.08 531.32,173.63 531.35,176.49 531.45,177.61 531.52,173.77 531.57,175.27 531.6,174.99 531.75,178.03 531.82,172.7 531.85,172.47 531.9,169.33 532,177.87 532.07,172.02 532.1,176.22 532.15,167.5 532.32,172.92 532.35,172.74 532.58,169.08 532.6,169.94 532.65,174.48 532.75,166.84 532.83,167.48 532.85,168.94 532.88,172.84 533.05,166.68 533.08,168.94 533.1,169.15 533.15,167.55 533.18,169.9 533.33,169.45 533.35,169 533.43,166.28 533.53,170.09 533.58,167.52 533.6,165.77 533.65,163.54 533.75,169.54 533.83,167.7 533.85,169.12 533.93,163.93 534.08,169.9 534.1,165.79 534.2,162.52 534.23,167.81 534.33,165.39 534.35,168.46 534.38,169.38 534.58,162.96 534.6,163.78 534.65,163.11 534.8,169.22 534.83,168.24 534.85,166.24 534.93,162.69 535.03,168.26 535.08,162.71 535.11,164.46 535.18,169.34 535.33,162.12 535.36,160.27 535.48,167.06 535.58,164.11 535.61,164.84 535.73,160.67 535.83,164.27 535.86,165.74 535.88,168.53 536.03,160.68 536.08,161.69 536.11,161.23 536.18,166.37 536.33,162 536.36,161.4 536.38,160.71 536.53,166.14 536.58,163.4 536.61,162.44 536.66,157.34 536.83,166.86 536.86,163.43 537.01,157.55 537.08,160.88 537.11,163.41 537.33,158.92 537.36,161.55 537.51,156.75 537.59,160.73 537.61,163.59 537.79,158.11 537.84,160.67 537.86,161.36 538.01,156.99 538.09,158.16 538.11,159.1 538.21,161.57 538.31,158.5 538.34,158.95 538.36,157.24 538.39,156.92 538.54,162.03 538.59,157.11 538.61,157.94 538.64,157.54 538.84,162.25 538.86,159.89 539.06,157.93 539.09,162.12 539.11,159.75 539.19,162.77 539.29,158.69 539.34,160.38 539.36,158.96 539.54,162.92 539.59,158.97 539.61,159.06 539.66,157.72 539.79,162.28 539.84,160.75 539.86,161.03 539.94,162.75 540.02,157.48 540.07,159.19 540.09,155.29 540.22,163.2 540.32,158.93 540.34,157.71 540.37,155.96 540.52,163.13 540.57,162.88 540.59,161.21 540.72,156.64 540.82,161.87 540.84,162.1 540.99,155.19 541.07,159.66 541.09,156.64 541.17,164.55 541.32,158.28 541.34,156.07 541.37,154.79 541.52,162.32 541.57,159.46 541.59,158.78 541.67,155.99 541.79,163.8 541.82,160.58 541.84,164.53 541.99,156.15 542.07,163.64 542.09,163 542.14,164.09 542.24,154.09 542.32,155.67 542.34,158.47 542.5,163.61 542.55,157.04 542.57,158.94 542.6,159.73 542.62,159.56 542.75,164.26 542.82,161.49 542.85,161.11 542.87,156.61 543.05,164.28 543.07,160.76 543.1,166.15 543.22,156.4 543.32,164.89 543.35,165.57 543.4,165.88 543.57,156.96 543.6,160.06 543.65,162.08 543.82,159.16 543.85,157.29 544.02,164.29 544.07,161.76 544.1,162.46 544.15,157.02 544.32,163.99 544.35,162.55 544.45,157.9 544.57,165.45 544.6,164.11 544.65,165.69 544.75,157.19 544.82,158.7 544.85,164.36 545.08,156.54 545.1,161.05 545.13,159.27 545.23,166.64 545.33,161.33 545.35,159.68 545.45,159.25 545.53,163.73 545.58,163.44 545.6,163.06 545.63,158.7 545.73,164.64 545.83,162.15 545.85,161.49 545.88,159.19 546.03,163.44 546.08,163.38 546.1,160.91 546.18,166.3 546.33,158.99 546.35,159.18 546.48,168.39 546.58,161.99 546.6,161.92 546.68,159.62 546.83,166.82 546.85,164.9 546.9,164.93 546.95,160.91 547.08,161.43 547.1,164.57 547.13,162.7 547.18,166.64 547.33,165.07 547.36,161.89 547.46,160.91 547.56,164.03 547.58,163.42 547.61,167.38 547.73,160.4 547.83,165.33 547.86,164.2 547.96,168.09 548.08,164.79 548.11,164.09 548.13,162.6 548.28,166.3 548.33,164.73 548.36,165.45 548.46,162.84 548.56,167.94 548.58,165.94 548.61,168.26 548.63,170.17 548.83,160.74 548.86,166.47 549.01,170.32 549.03,163.98 549.08,164.81 549.11,162.33 549.26,167.83 549.33,167.06 549.36,166.85 549.41,163.78 549.53,167.49 549.58,165.71 549.61,167.87 549.73,163.16 549.84,167.39 549.86,166.21 549.94,164.5 550.06,168.62 550.09,168.42 550.11,166.39 550.14,164.85 550.19,169.33 550.34,165.53 550.36,162.73 550.59,168.31 550.61,164.93 550.64,163.34 550.84,169.06 550.86,169.14 550.96,170.26 551.09,165.65 551.11,167.31 551.16,165.17 551.34,172.18 551.36,167.88 551.39,168.71 551.49,162.87 551.59,167.96 551.61,167.29 551.74,171.84 551.84,166.12 551.86,168.37 551.91,164.75 552.09,174.11 552.11,172.78 552.24,162.65 552.32,167.74 552.34,169.12 552.42,170.33 552.54,164.89 552.57,168.27 552.59,166.72 552.64,170.71 552.82,164.87 552.84,166.1 552.87,165.93 552.97,170.74 553.07,167.32 553.09,167.87 553.22,165.29 553.32,171.04 553.34,171.12 553.47,164.42 553.57,167.21 553.59,168.59 553.69,170.06 553.72,166.11 553.82,167.9 553.84,165.97 553.87,170.36 554.07,170.18 554.09,171.66 554.19,169.03 554.32,172.27 554.34,173.79 554.49,166.64 554.57,170.05 554.59,171.56 554.69,173.43 554.8,166.8 554.82,168.71 554.85,167.15 555.05,173.47 555.07,170.67 555.1,168.55 555.15,168.16 555.17,171.53 555.32,170.45 555.35,170.8 555.37,169.09 555.52,172.84 555.57,172.2 555.6,172.75 555.62,173.62 555.72,167.1 555.82,172.16 555.85,169.86 555.87,173.5 556,168.24 556.07,170.52 556.1,173.42 556.17,174.35 556.3,169.17 556.32,170.4 556.35,169.65 556.37,168.56 556.52,176.18 556.57,173.05 556.6,173.29 556.65,168.28 556.82,176.09 556.85,170.45 556.9,170.12 557.05,174.82 557.07,174.23 557.1,173.62 557.22,170.04 557.3,175.1 557.33,172.68 557.35,171.93 557.48,176.67 557.55,169.65 557.58,172.78 557.6,175.95 557.63,174 557.78,177.49 557.83,174.45 557.85,172.16 557.93,169.68 558.05,177.41 558.08,175.16 558.1,176.85 558.18,168.96 558.3,178.18 558.33,175.7 558.35,176.24 558.38,176.89 558.48,171.4 558.58,176.66 558.6,174.82 558.68,176.98 558.75,172.02 558.83,173.44 558.85,175.85 558.9,172.73 559.08,174.24 559.1,174.59 559.23,172.42 559.28,176.05 559.33,174.75 559.35,174.69 559.38,172.71 559.5,176.13 559.58,173.12 559.6,175.65 559.73,171.37 559.83,171.97 559.86,173.19 559.88,176.51 559.98,172.95 560.08,173.53 560.11,177.83 560.31,171.67 560.33,173.36 560.36,172 560.51,178.54 560.58,175.51 560.61,172.55 560.83,179.85 560.86,176.62 560.96,173.03 561.01,177.87 561.08,176.59 561.11,177.94 561.26,173.38 561.33,177.48 561.36,175.35 561.48,178.37 561.56,174.67 561.58,176.5 561.61,173.87 561.63,173.18 561.76,180.2 561.83,176.69 561.86,174.8 561.98,174.53 562.06,180.12 562.08,179.25 562.11,175.99 562.21,175.5 562.34,181.59 562.36,178.85 562.39,176.25 562.59,180.47 562.61,182.62 562.74,183.21 562.84,175.74 562.86,177.35 562.99,185.27 563.09,182.97 563.11,178.35 563.16,175.25 563.24,182.47 563.34,179.22 563.36,180.33 563.39,177.76 563.59,182.05 563.61,182.12 563.64,182.62 563.79,174.91 563.84,180.96 563.86,183.46 564.06,176.37 564.09,178.98 564.11,182.35 564.29,178.05 564.34,179.88 564.36,177.69 564.51,184.75 564.59,178.63 564.61,180.85 564.64,177.07 564.77,184.56 564.82,182.14 564.84,179.48 564.87,176.13 565.07,186.29 565.09,182.94 565.12,184.46 565.22,176.31 565.32,180.62 565.34,181.71 565.39,185.38 565.54,178.09 565.57,180.96 565.59,181.58 565.69,183.5 565.72,180.17 565.82,180.2 565.84,182.47 565.99,180.99 566.02,184.23 566.07,182.21 566.09,182.55 566.24,184.17 566.32,180.73 566.34,184.69 566.47,185.38 566.57,181.81 566.59,180.53 566.62,184.49 566.82,179.69 566.84,181.9 566.89,184.81 566.99,180.03 567.07,183.73 567.09,183.35 567.17,186.41 567.3,178.49 567.32,181.57 567.35,182.86 567.37,180.33 567.45,186.68 567.57,180.83 567.6,181.13 567.8,185.46 567.82,183.87 567.85,186.78 567.95,182.53 568,186.91 568.07,185.62 568.1,185.69 568.15,183.98 568.27,188.9 568.32,187.4 568.35,185.49 568.45,182.22 568.57,189.44 568.6,187.01 568.7,183.14 568.82,186.4 568.85,185.5 568.9,190.47 569.07,184.03 569.1,187.7 569.2,191.39 569.27,184.92 569.32,185.97 569.35,187.5 569.45,185.33 569.57,194.02 569.6,193.61 569.62,192.28 569.8,199.85 569.83,197.33 569.85,200.77 569.9,196.92 570.05,204.43 570.08,200.8 570.1,202.49 570.23,200.75 570.33,206.16 570.35,206.33 570.38,207.04 570.53,202.55 570.58,206.77 570.6,207.62 570.7,215.62 570.83,204.53 570.85,207.44 571.08,219.2 571.1,217.43 571.18,209.88 571.33,218.03 571.35,218.44 571.53,221.16 571.55,217.1 571.58,218.09 571.6,216.98 571.63,215.98 571.68,223.62 571.83,220.54 571.85,221.84 571.88,226.22 572.08,224.72 572.1,225.08 572.16,222.2 572.31,226.18 572.33,225.63 572.36,224.59 572.56,228.67 572.58,226.57 572.61,227.13 572.71,223.91 572.73,228.3 572.83,224.54 572.86,228.84 572.88,225.9 572.98,231.31 573.08,227.43 573.11,225.61 573.18,225.22 573.33,234.55 573.36,229.81 573.46,228.2 573.56,232.72 573.58,230.08 573.61,231.62 573.68,234.75 573.76,228.97 573.83,230.8 573.86,234.07 573.91,236.4 574.03,226.56 574.08,227.69 574.11,233.34 574.28,238.64 574.33,232.29 574.36,233.31 574.41,232.4 574.51,238.45 574.58,238.06 574.61,236.27 574.66,232.33 574.81,238.66 574.84,237.72 574.86,237.43 575.04,231.85 575.09,239.1 575.11,235.27 575.19,238.27 575.34,230.46 575.36,235.16 575.46,240.41 575.56,233.85 575.59,236.3 575.61,235.14 575.69,237.38 575.79,224.14 575.84,226.42 575.86,224.38 575.99,218.76 576.09,222.95 576.11,223.31 576.29,214.48 576.34,215.04 576.36,217.3 576.46,218.35 576.54,213.33 576.59,214.72 576.61,215.97 576.81,209.11 576.84,213.66 576.86,209.22 576.91,211.78 577.04,206.12 577.06,207.82 577.09,206.64 577.17,204.85 577.22,208.65 577.32,207.5 577.34,205.83 577.39,207.48 577.49,200.34 577.57,203.19 577.59,204.98 577.74,199.34 577.82,201.18 577.84,200.88 578.02,203 578.07,197.92 578.09,198.92 578.29,194.27 578.32,195.4 578.34,195.96 578.49,201.87 578.57,192.47 578.59,192.12 578.62,190.09 578.82,197.52 578.84,192.37 578.94,186.78 579.04,194.55 579.07,193.82 579.09,193.46 579.29,186.07 579.32,189.64 579.34,188.69 579.39,192.97 579.54,183.39 579.57,184.8 579.6,185.4 579.7,188.83 579.8,184.96 579.82,187.04 579.85,184.57 579.95,181.7 580.07,186.14 580.1,186.53 580.12,188.43 580.25,178.24 580.32,179.21 580.35,181.9 580.42,187.05 580.57,175.89 580.6,178.12 580.65,177.8 580.75,185.25 580.82,182.37 580.85,179.77 580.92,176.42 581.05,180.87 581.07,179.5 581.1,177.53 581.17,175.64 581.27,179.72 581.32,179.14 581.35,178.63 581.42,179.94 581.5,171.15 581.57,176.52 581.6,176.17 581.65,179.13 581.75,172.58 581.82,175.19 581.85,174.45 581.95,178.84 582.05,173.41 582.08,173.79 582.1,171.72 582.18,176.43 582.33,174.02 582.35,172.77 582.4,174.99 582.43,170.64 582.58,172.67 582.6,172.56 582.83,168.88 582.85,168.27 583,174.03 583.08,169.84 583.1,167.6 583.23,173.47 583.33,168.74 583.35,166.53 583.38,166.2 583.48,174.11 583.58,171.18 583.6,169.65 583.7,162.72 583.75,171.91 583.83,170.77 583.85,170.45 584.08,163.53 584.1,167.41 584.2,169.75 584.3,161.98 584.33,164.89 584.35,163.54 584.38,162.26 584.45,170.72 584.58,166.2 584.61,166.69 584.73,163.33 584.81,168.01 584.83,165.74 584.86,170.61 584.96,162.38 585.08,167.8 585.11,168.74 585.33,163.59 585.36,163.91 585.56,166.06 585.58,162.69 585.61,165.29 585.66,167.46 585.78,162.41 585.83,162.47 585.86,162.83 585.93,167.81 586.08,161.41 586.11,163.8 586.23,166.99 586.28,163.37 586.33,166.07 586.36,166.13 586.43,159.65 586.58,167.54 586.61,165.8 586.66,168.16 586.76,159.85 586.83,161.05 586.86,161.83 586.96,168.62 587.09,164.17 587.11,160.3 587.16,160.04 587.21,166.3 587.34,161.89 587.36,161.82 587.44,163.79 587.49,159.68 587.59,159.83 587.61,162.4 587.69,165.57 587.74,158.51 587.84,161.31 587.86,162.25 587.89,166.34 588.09,160.65 588.11,161.69 588.24,166.52 588.34,160.79 588.36,157.54 588.51,167.12 588.59,162.46 588.61,159.15 588.66,158.01 588.79,167.08 588.84,164.9 588.86,163.21 588.99,157.62 589.06,165.2 589.09,164.91 589.11,166.64 589.14,166.74 589.21,157.7 589.34,162.04 589.36,164.12 589.41,166.21 589.57,161.25 589.59,158.09 589.72,164.28 589.82,162.37 589.84,160.12 589.89,156.95 590.07,163.96 590.09,161.78 590.12,163.86 590.24,157.85 590.32,163.72 590.34,161.48 590.39,164.04 590.47,158.62 590.57,160.8 590.59,161.89 590.67,165.34 590.82,157.2 590.84,160.4 591.02,162.63 591.04,158.95 591.07,160.29 591.09,159.31 591.17,158.64 591.27,163.15 591.32,161.65 591.34,159.32 591.57,163.88 591.59,164.35 591.72,157.48 591.82,160.96 591.84,162.37 591.89,166.5 592,158.28 592.07,160.94 592.1,160.74 592.17,164.34 592.25,160.37 592.32,162.58 592.35,161.49 592.4,159.76 592.45,164.57 592.57,161 592.6,162.21 592.67,158.37 592.72,163.42 592.82,162.2 592.85,164.17 593.02,156.68 593.07,163.86 593.1,163.99 593.15,166.67 593.32,156.74 593.35,157.74 593.5,169.13 593.57,162.37 593.6,161.72 593.65,156.28 593.8,168.19 593.82,167.56 593.85,163.76 593.95,156.74 594.05,165.77 594.07,163.97 594.1,166.59 594.27,157.5 594.32,159.55 594.35,163.62 594.42,165.99 594.58,157.56 594.6,156.83 594.75,168.45 594.83,162.15 594.85,161.1 594.93,160 595.05,167.41 595.08,166.03 595.1,161.39 595.2,159.04 595.3,165.43 595.33,163.66 595.35,164.8 595.38,167.68 595.53,159.53 595.58,161.54 595.6,163.4 595.7,165.74 595.78,159.26 595.83,160.24 595.85,164.28 595.98,166.67 596.05,162.21 596.08,163.39 596.1,163.08 596.13,161.62 596.3,167.78 596.33,167.58 596.35,161.07 596.43,157.28 596.58,169.45 596.6,168.87 596.75,160.42 596.83,163.93 596.85,167.04 596.88,170.48 597.08,159.38 597.11,163.2 597.21,168.4 597.33,162.06 597.36,160.28 597.38,159.02 597.56,169.2 597.58,168.15 597.61,164.81 597.66,159.51 597.83,169.83 597.86,167.11 597.88,169 598.01,160.99 598.08,163.87 598.11,164.6 598.26,167.11 598.31,161.88 598.33,164.6 598.36,164.51 598.38,163.16 598.48,168.49 598.58,164.52 598.61,162.75 598.63,162.62 598.71,170.34 598.83,163.73 598.86,160.42 598.88,160.22 599.01,168.76 599.08,168.69 599.11,165.7 599.21,161.36 599.28,168.57 599.33,166.49 599.36,168.89 599.49,161.32 599.59,165.01 599.61,169.04 599.79,163.5 599.84,165.18 599.86,164.56 600.01,169.02 600.09,162.93 600.11,163.16 600.24,170.12 600.34,169.23 600.36,164.89 600.41,164.43 600.56,168.59 600.59,164.44 600.61,166.76 600.69,165.49 600.81,171.05 600.84,170.19 600.86,168.37 600.91,169.3 601.06,164.87 601.09,167.71 601.11,167.57 601.19,169.36 601.31,166.22 601.34,167.21 601.36,164.8 601.39,163.4 601.49,170.1 601.59,168.03 601.61,168.1 601.74,165.02 601.81,171.92 601.84,168.31 601.86,170.53 601.99,164.02 602.07,166.14 602.09,168.27 602.17,171.33 602.32,166.98 602.34,166.76 602.52,170.74 602.57,169.78 602.59,169.51 602.64,165.96 602.82,170.32 602.84,168.85 602.97,164.8 603.07,170.82 603.09,171.16 603.12,172.67 603.29,167.02 603.32,167.36 603.34,168.95 603.47,170.86 603.57,167.13 603.59,167.74 603.77,171.17 603.82,170.12 603.84,169.79 603.87,173.34 603.99,168.43 604.07,170.33 604.09,171.24 604.17,174 604.19,168.41 604.32,171.23 604.34,169.01 604.5,174.01 604.57,171.52 604.6,174.37 604.72,169.07 604.82,172.2 604.85,172.97 604.95,169.59 605.07,174.74 605.1,170.65 605.15,170.08 605.32,175.7 605.35,172.28 605.47,174.58 605.52,171.05 605.57,171.1 605.6,171.81 605.62,169.15 605.75,176.22 605.82,174.12 605.85,171.5 605.87,172.85 606.07,170.23 606.1,170.46 606.25,173.93 606.3,170.14 606.32,171.83 606.35,170.58 606.37,168.86 606.45,177.07 606.57,171.29 606.6,171.57 606.67,170.54 606.8,175.05 606.82,174.38 606.85,174.77 606.93,175.25 607.05,172.11 607.08,172.27 607.1,172.43 607.2,174.7 607.25,169.55 607.33,169.69 607.35,173.26 607.38,170.87 607.45,174.96 607.58,174.65 607.6,173.29 607.65,172.26 607.73,176.94 607.83,175.26 607.85,175.06 607.9,172.83 608.03,176.55 608.08,174.09 608.1,172.95 608.25,174.96 608.3,172.81 608.33,174.89 608.35,174.4 608.45,175.38 608.53,172.01 608.58,172.33 608.6,174.21 608.7,171.21 608.8,175.79 608.83,174.25 608.85,174 608.88,176.35 608.95,170.38 609.08,174.21 609.1,177.58 609.28,170.42 609.33,175.09 609.36,174.57 609.38,172.76 609.56,175.94 609.58,173.7 609.61,172.46 609.71,176.57 609.83,175.45 609.86,173.08 610.01,177.34 610.08,176.81 610.11,177.37 610.16,179.38 610.31,174.23 610.33,174.43 610.36,178.33 610.48,179.66 610.51,173.25 610.58,174.52 610.61,175.94 610.68,175.72 610.71,180.09 610.83,177.46 610.86,173.82 610.88,173.81 611.06,182.37 611.08,175.79 611.11,176.89 611.16,173.5 611.33,178.5 611.36,176.46 611.41,173.69 611.53,180.53 611.58,178.12 611.61,173.02 611.81,179.86 611.84,179.65 611.86,178.86 611.99,174.16 612.09,181.46 612.11,177.69 612.21,175.76 612.31,181.08 612.34,180.75 612.36,182.82 612.54,175.94 612.59,177.82 612.61,178.97 612.71,174.69 612.81,179.72 612.84,177.37 612.86,176.96 612.89,174.14 613.04,180.43 613.09,178.86 613.11,178.88 613.24,181.35 613.31,175.6 613.34,178.84 613.36,177.15 613.41,175.88 613.46,181.52 613.59,177.8 613.61,178.63 613.66,180.9 613.81,177.62 613.84,180.09 613.86,177.19 614.04,183.92 614.09,179.32 614.11,180.56 614.24,177.75 614.29,182.07 614.32,181.15 614.34,180.22 614.39,182.63 614.49,174.62 614.57,182.34 614.59,182.24 614.64,183.65 614.79,177.39 614.82,177.71 614.84,176.37 614.87,175.71 614.99,183.81 615.07,182.09 615.09,176.91 615.32,186.56 615.34,185.24 615.37,185.46 615.57,179.55 615.59,183.16 615.67,187.22 615.82,177.69 615.84,177.61 616.02,187.6 616.07,183.43 616.09,186.27 616.22,178.22 616.32,185.1 616.34,185.22 616.39,187.46 616.52,178.08 616.57,181.75 616.59,183.68 616.67,188.4 616.8,179.04 616.82,179.24 616.85,178.59 617,187.82 617.07,183.95 617.1,185.61 617.17,179.15 617.27,186.63 617.32,184.36 617.35,184.4 617.42,182.86 617.57,188.87 617.6,185.75 617.7,186.42 617.75,183.13 617.82,185.88 617.85,185.89 617.95,188.27 618.07,181.99 618.1,181.86 618.22,187.93 618.32,185.07 618.35,185.86 618.45,191.19 618.55,182.01 618.57,186.2 618.6,186.59 618.65,183.64 618.72,189.98 618.82,186.23 618.85,185.38 619.02,183.67 619.05,187.44 619.07,186.09 619.1,184.71 619.22,189.82 619.33,182.63 619.35,183.16 619.48,187.21 619.58,186.03 619.6,186.14 619.63,180.71 619.83,191.41 619.85,192.18 619.98,191.73 620.05,199.29 620.08,197.48 620.1,199.43 620.3,200.55 620.33,197.09 620.35,199.81 620.58,205.39 620.6,204.87 620.63,203.68 620.8,208.45 620.83,205.27 620.85,206.17 621.03,210.81 621.08,207.95 621.1,210.08 621.15,209.81 621.33,213.89 621.35,211.44 621.45,211.19 621.55,215.41 621.58,214.41 621.6,214.4 621.78,220.58 621.83,217.63 621.86,215.81 621.91,213.97 622.03,223.14 622.08,220.66 622.11,219.89 622.21,218.12 622.31,225.21 622.33,224.38 622.36,224.79 622.38,225.12 622.51,218.93 622.58,220.52 622.61,222.33 622.68,226.77 622.83,223.17 622.86,221.09 622.98,230.08 623.08,223.56 623.11,221.46 623.31,230.83 623.33,229.67 623.36,227.5 623.43,223 623.58,232.2 623.61,230.95 623.63,233.35 623.73,225.07 623.83,229.96 623.86,230.99 623.88,234.38 624.08,223.98 624.11,230.94 624.18,236.42 624.26,229.01 624.34,232.57 624.36,230.77 624.39,228.42 624.54,235.49 624.59,233.51 624.61,232.84 624.76,228.48 624.84,235.04 624.86,235.48 624.91,235.76 624.99,232.06 625.09,234.62 625.11,232.53 625.16,234.95 625.34,233.53 625.36,232.96 625.56,236.64 625.59,236.07 625.61,235.24 625.64,238.92 625.69,234.86 625.84,235.96 625.86,235.96 625.94,236.87 626.09,223.14 626.11,222.16 626.21,225.32 626.34,216.31 626.36,215.9 626.49,223.46 626.59,214.68 626.61,211.19 626.77,218.52 626.82,215.64 626.84,214.22 626.89,208.87 627.07,210.99 627.09,212.75 627.24,204.54 627.32,206.42 627.34,208.18 627.44,209.56 627.57,197.99 627.59,198.6 627.72,206.35 627.82,201.39 627.84,199.74 627.94,198.84 628.02,202.28 628.07,202.13 628.09,202.19 628.32,195.9 628.34,197.55 628.37,198.06 628.49,194.53 628.57,196.78 628.59,196.42 628.62,196.89 628.72,187.5 628.82,195.02 628.84,191.71 628.94,193.91 629.07,188.86 629.09,189.34 629.2,190.24 629.32,186.84 629.35,192.82 629.5,184.43 629.57,186.54 629.6,187.15 629.72,191.19 629.8,184.36 629.82,184.58 629.85,184.49 629.92,182.46 630,186.81 630.07,186.72 630.1,185.91 630.17,186.1 630.32,181.28 630.35,181.96 630.37,183.6 630.55,178.97 630.57,179.64 630.6,178.44 630.67,184.37 630.82,177.77 630.85,178.13 630.92,182.06 631.07,173.2 631.1,175.98 631.12,174.3 631.22,183.26 631.32,179.09 631.35,173.19 631.55,177.99 631.57,177.51 631.6,174.92 631.62,177.66 631.75,173.01 631.83,174.14 631.85,172.61 631.93,171.35 632.08,176.92 632.1,174.04 632.15,176.01 632.3,170.89 632.33,172.26 632.35,170.19 632.48,174.3 632.58,172.14 632.6,171.44 632.65,168.65 632.83,175.16 632.85,174.08 633,168.36 633.08,171.69 633.1,174.04 633.28,166.87 633.33,167.63 633.35,171.47 633.45,172.81 633.58,166.87 633.6,166.3 633.8,170.1 633.83,167.39 633.85,166.88 633.9,172.25 634.05,163.86 634.08,166.49 634.1,164.37 634.16,164.1 634.26,169.67 634.33,165.3 634.36,165.49 634.41,163.88 634.56,169.69 634.58,166.05 634.61,167.53 634.71,162.15 634.83,165.1 634.86,170.69 635.03,161.61 635.08,163.51 635.11,161.18 635.21,167.51 635.33,161.1 635.36,160.5 635.41,160.36 635.53,167.01 635.58,164.7 635.61,164.16 635.66,160.26 635.81,165.82 635.83,164.48 635.86,167.69 636.01,160.82 636.08,162.27 636.11,163.2 636.13,164.8 636.26,158.17 636.33,161.73 636.36,160.89 636.38,164.77 636.56,160.53 636.58,160.93 636.61,158.93 636.71,163.43 636.79,158.17 636.84,161.33 636.86,161.14 636.91,159.49 636.99,165.72 637.09,163.32 637.11,159.62 637.14,157.26 637.24,166.03 637.34,161.84 637.36,159.8 637.41,158.3 637.59,163.84 637.61,164.6 637.66,164.72 637.76,157.65 637.84,160.59 637.86,160.76 637.89,162.26 638.09,156.9 638.11,157.23 638.19,163.47 638.34,159.36 638.36,158.24 638.39,157.55 638.54,163.55 638.59,159.8 638.61,159.3 638.74,156.39 638.76,161.8 638.84,158.07 638.86,159.84 638.91,160.16 638.99,158.17 639.06,159.05 639.09,158.45 639.19,163.86 639.32,161.38 639.34,159.66 639.39,156.86 639.54,162.83 639.57,161.74 639.59,164.96 639.62,165.79 639.82,157.67 639.84,158.22 639.92,163.78 640.07,160.3 640.09,162.76 640.22,155.44 640.32,162.46 640.34,160.77 640.37,163.05 640.54,155.85 640.57,156.27 640.59,158.75 640.69,165.71 640.82,156.81 640.84,158.07 640.99,165.55 641.07,158.19 641.09,154.7 641.27,162.88 641.32,161.6 641.34,159.71 641.44,155.74 641.54,162.06 641.57,160.68 641.6,160.85 641.67,152.8 641.82,162.11 641.85,164.8 641.92,155.26 642.07,158.86 642.1,160.69 642.17,162.51 642.3,157.62 642.32,160.42 642.35,160.37 642.47,157.19 642.5,162.07 642.57,159.69 642.6,158.88 642.7,161.95 642.8,156.07 642.82,160.2 642.85,159.14 642.87,162.47 643.07,156.15 643.1,158.37 643.12,157.47 643.25,164.39 643.32,158.97 643.35,157.78 643.45,159.86 643.55,156.21 643.57,159.42 643.6,159.05 643.75,154.43 643.82,160.1 643.85,160.11 643.87,162.86 644.02,154.33 644.08,158.27 644.1,157.33 644.25,164.04 644.33,156.95 644.35,154.07 644.58,164.37 644.6,163.01 644.7,156.04 644.83,160.2 644.85,163.93 644.95,159.82 645.08,164.49 645.1,162.97 645.18,167.13 645.28,160 645.33,161.2 645.35,162.14 645.48,160.66 645.53,164.5 645.58,162.77 645.6,159.5 645.65,158.74 645.83,166.48 645.85,161.03 645.95,158.18 646.05,165.26 646.08,164.34 646.1,165.13 646.28,157.82 646.33,166.15 646.35,166.63 646.38,169.15 646.58,159.91 646.61,163.84 646.68,170.61 646.83,160.53 646.86,161.02 647.01,170.97 647.08,166.7 647.11,164.2 647.21,161.38 647.28,167.78 647.33,167.46 647.36,168.03 647.51,160.53 647.58,164.02 647.61,168.47 647.68,170.3 647.78,160.8 647.83,164.59 647.86,161.67 647.96,166.88 648.08,163.49 648.11,164.28 648.23,165.73 648.26,160.87 648.33,162.35 648.36,163.77 648.46,166.26 648.51,163.12 648.58,163.26 648.61,163.72 648.68,168.06 648.78,162.37 648.83,163.9 648.86,167.33 648.93,162.9 649.09,166.59 649.11,168.02 649.19,163.65 649.34,168.13 649.36,166.05 649.46,160.31 649.56,167.52 649.59,165.4 649.61,165.56 649.64,167.34 649.81,162.61 649.84,166.34 649.86,164.99 650.01,164.83 650.06,168.7 650.09,165.44 650.11,166.82 650.21,163.61 650.29,168 650.34,164.52 650.36,166.13 650.44,164.28 650.54,169.29 650.59,166.9 650.61,165.5 650.66,167.85 650.76,163.37 650.84,165.31 650.86,165.5 650.89,169.34 650.96,164.85 651.09,166.55 651.11,166.08 651.16,171.59 651.29,164.96 651.34,165.29 651.36,166.06 651.44,170.56 651.57,167.75 651.59,168.24 651.77,170.45 651.82,165.59 651.84,169.85 651.87,170.46 652.07,164.96 652.09,168.44 652.14,171.09 652.29,165.94 652.32,168.15 652.34,167.96 652.44,171.79 652.52,166.39 652.57,167.82 652.59,168.02 652.67,166.63 652.77,172.9 652.82,171.39 652.84,166.23 652.94,163.38 653.04,170.74 653.07,169.96 653.09,173.15 653.27,167.6 653.32,170.82 653.34,172.82 653.37,172.87 653.57,167.17 653.59,170.26 653.67,172.2 653.82,167.96 653.84,167.38 653.94,166.78 653.97,174.27 654.07,168.5 654.1,168.84 654.15,165.41 654.32,173.9 654.35,172.82 654.5,175.06 654.57,166.41 654.6,174.41 654.75,175.68 654.82,168.61 654.85,168 654.92,166.52 655.02,176.54 655.07,173.72 655.1,171.44 655.17,168.64 655.3,179.07 655.32,176.02 655.35,175.87 655.45,169.47 655.57,174.84 655.6,173.09 655.67,175.76 655.82,170.24 655.85,173.08 655.97,176.53 656.07,171.47 656.1,175.47 656.15,172.22 656.22,176.32 656.32,172.71 656.35,172.82 656.42,174.58 656.48,170.7 656.58,173.9 656.6,173.31 656.65,178.31 656.83,166.8 656.85,174.45 656.98,180.4 657.03,172.96 657.08,173.46 657.1,173.3 657.13,170.21 657.3,178.11 657.33,176.62 657.35,173.67 657.48,172.96 657.58,176.4 657.6,178.2 657.8,172.32 657.83,174.8 657.85,174.13 657.88,179.68 658.08,173.58 658.1,173.59 658.23,179.74 658.33,174.17 658.35,176.08 658.48,180.7 658.58,171.76 658.6,173.63 658.65,173.17 658.73,178.37 658.83,178.36 658.85,176.46 658.93,171.37 659.06,179.65 659.08,178.39 659.11,176.26 659.13,178.18 659.21,173.2 659.33,176.81 659.36,179.33 659.41,180.91 659.51,173.26 659.58,174.16 659.61,176.61 659.68,179.19 659.81,175.09 659.83,175.74 659.86,170.98 660.03,182.82 660.08,177.13 660.11,177.31 660.16,172.62 660.33,179.89 660.36,179.71 660.38,180.02 660.48,172.39 660.58,176.24 660.61,177.14 660.71,181.12 660.83,173.74 660.86,174.17 660.98,180.26 661.08,177.01 661.11,178.85 661.13,174.47 661.33,180.53 661.36,182.09 661.41,182.93 661.54,175.67 661.59,176.15 661.61,178.73 661.71,182 661.84,173.37 661.86,178.13 661.89,176.83 661.94,181.09 662.09,177 662.11,178.11 662.14,174.66 662.29,184.16 662.34,179.32 662.36,175.45 662.44,173.97 662.51,180.25 662.59,180.01 662.61,181.12 662.64,181.53 662.81,177.83 662.84,179.84 662.86,178.47 662.91,183.03 663.09,176.92 663.11,178.48 663.19,184.21 663.34,177.31 663.36,178.23 663.54,184.17 663.59,182.34 663.61,182.98 663.69,176.66 663.81,187.09 663.84,184.81 663.86,182.6 664.02,176.9 664.07,179.94 664.09,184.76 664.14,187.46 664.27,177.32 664.32,179.29 664.34,178.03 664.42,184.8 664.57,178.44 664.59,179.36 664.74,185.79 664.82,179.55 664.84,177.83 665.02,182.61 665.07,182.44 665.09,182.32 665.12,184.96 665.29,177.68 665.32,181.45 665.34,180.18 665.49,186.33 665.57,176.83 665.59,178.34 665.74,190.26 665.82,183.41 665.84,181.88 665.92,179.5 666.02,187.22 666.07,186.59 666.09,187.21 666.19,181.84 666.32,186.56 666.34,187.43 666.47,178.74 666.57,179.32 666.6,182.88 666.7,189.42 666.8,181.67 666.82,183.18 666.85,179.49 666.87,179.24 667.02,186.82 667.07,184.05 667.1,177.76 667.27,189.17 667.32,186.83 667.35,184.8 667.45,179.33 667.57,188.51 667.6,185.95 667.62,188.92 667.82,182.31 667.85,183.36 667.92,188.24 668.07,187.64 668.1,187.7 668.12,184.36 668.2,188.84 668.32,185.46 668.35,185.86 668.42,189.85 668.47,185.16 668.57,186.18 668.6,186.36 668.62,180.6 668.8,189.5 668.82,188.22 668.85,187.89 668.93,184.36 669.08,189.45 669.1,189.32 669.23,184.96 669.33,187.23 669.35,185.31 669.38,184.12 669.55,189.31 669.58,187.94 669.6,190.21 669.7,186.23 669.78,192.26 669.83,190.43 669.85,190.54 670.08,185.46 670.1,186.34 670.33,196.24 670.35,197.2 670.38,195.05 670.53,204.44 670.58,204.05 670.6,202.88 670.7,201.97 670.8,207.8 670.83,205.41 670.85,206.34 671.03,205.37 671.08,209.22 671.1,208.83 671.15,212.62 671.23,208.8 671.33,209.15 671.36,207.28 671.43,215.28 671.58,211.6 671.61,211.22 671.73,218.96 671.83,214.78 671.86,211.05 672.03,223.96 672.08,223.47 672.11,220.76 672.18,216.23 672.31,224.47 672.33,220.49 672.36,222.58 672.51,217.96 672.58,221.56 672.61,224.51 672.71,224.73 672.78,220.6 672.83,223.4 672.86,223.73 672.88,227.14 673.01,223.38 673.08,226.8 673.11,223.78 673.13,223.54 673.33,230.36 673.36,229.37 673.43,225.42 673.58,230.18 673.61,232.02 673.78,225.16 673.84,228.79 673.86,225.34 673.91,234.16 674.09,225.79 674.11,228.33 674.14,226.34 674.29,235.34 674.34,230.91 674.36,229.99 674.44,226.74 674.56,234.09 674.59,232.48 674.61,232.83 674.71,227.41 674.84,232.69 674.86,234.22 674.94,236.04 675.04,229.52 675.09,233.08 675.11,232.23 675.19,237.44 675.31,232.1 675.34,232.4 675.36,233.72 675.46,236.28 675.56,230.68 675.59,231.6 675.61,232.54 675.69,236.54 675.84,234.9 675.86,235.96 675.91,230.86 676.09,233.51 676.11,235.68 676.14,231.79 676.32,236.64 676.34,237.24 676.37,237.66 676.52,218.78 676.57,219.88 676.59,221.97 676.67,223.84 676.82,216.13 676.84,216.13 676.97,219.02 677.02,213.62 677.07,218.54 677.09,212.84 677.27,209.79 677.29,216.59 677.32,215.11 677.34,213.33 677.44,206.62 677.57,209.1 677.59,211.1 677.72,212.05 677.82,205.45 677.84,203.08 677.97,208.79 678.07,202.76 678.09,204.63 678.22,200.55 678.32,203.52 678.34,201.99 678.39,204.02 678.49,196.62 678.57,199.84 678.59,202.24 678.62,203.52 678.82,194.6 678.85,195.5 678.97,199.71 679.07,192.5 679.1,193.95 679.22,194.1 679.32,189.8 679.35,193.54 679.47,190.02 679.57,191.65 679.6,192.09 679.62,192.5 679.77,186.58 679.82,188.47 679.85,192.11 679.87,193.72 679.97,184.74 680.07,186.22 680.1,188.1 680.3,183.57 680.32,184.84 680.35,181.73 680.5,184.46 680.55,179.68 680.57,182.08 680.6,181.42 680.7,179.99 680.82,185.97 680.85,183.69 681,178.15 681.07,181.44 681.1,177.29 681.12,181.47 681.33,178.53 681.35,178.65 681.38,179.51 681.5,175.22 681.58,176.04 681.6,177.46 681.63,179.56 681.78,174.79 681.83,175.61 681.85,177.43 681.93,178.74 682.05,172.88 682.08,173.92 682.1,173.93 682.2,176.44 682.23,173.01 682.33,173.06 682.35,174.48 682.38,174.57 682.58,169.93 682.6,172.93 682.7,170 682.8,174.12 682.83,173.06 682.85,171.56 682.95,167.22 683.08,172.29 683.1,172.92 683.18,174.22 683.33,166.5 683.35,169.98 683.5,171.77 683.58,166.5 683.6,167.01 683.63,166.17 683.73,171.89 683.83,169.13 683.86,169.2 683.91,162.45 684.06,173.18 684.08,170.39 684.11,171.57 684.18,162.54 684.33,169.35 684.36,170.61 684.38,171.01 684.56,162.86 684.58,166.85 684.61,166.69 684.76,168.12 684.81,163.68 684.83,165.44 684.86,165.38 684.91,163.14 684.96,168.11 685.08,167.76 685.11,161.89 685.16,166.05 685.33,165.86 685.36,164.83 685.41,166.7 685.48,163.41 685.58,166.41 685.61,166.26 685.73,159.65 685.83,162.12 685.86,160.77 685.96,167.1 686.08,165.51 686.11,161.14 686.18,158.82 686.34,166.44 686.36,162.41 686.39,163.89 686.49,157.98 686.59,163.39 686.61,161.85 686.64,166.79 686.84,159.49 686.86,162.28 686.96,164.2 687.09,159.72 687.11,157.88 687.21,165.82 687.34,160.29 687.36,158.64 687.41,158.62 687.44,162.42 687.59,162.19 687.61,161.41 687.66,165.26 687.74,156.26 687.84,159.71 687.86,159.5 687.94,162.9 688.09,160.71 688.11,161.33 688.14,158.88 688.19,163.15 688.34,161.45 688.36,161.95 688.41,159.79 688.51,163.03 688.59,161.37 688.61,160.74 688.79,156.95 688.82,161.42 688.84,159.63 688.94,163.75 689.07,157.49 689.09,155.96 689.17,161.94 689.32,160.42 689.34,161.89 689.37,155.72 689.54,164.54 689.57,160.7 689.59,159.83 689.67,158.3 689.69,161.85 689.82,159.97 689.84,158.11 689.92,157.48 690.04,163.56 690.07,161.12 690.09,161.38 690.14,156.21 690.32,160.1 690.34,160.69 690.39,162.6 690.54,155.7 690.57,161.64 690.59,157.16 690.74,162.79 690.79,156.72 690.82,157.83 690.84,157.92 690.99,163.3 691.07,156.64 691.09,160.22 691.25,156.44 691.27,164.13 691.32,160.97 691.35,159.53 691.37,156.68 691.45,161.1 691.57,160.77 691.6,161.91 691.62,158.5 691.8,165.68 691.82,163.66 691.85,161.7 691.95,157.65 692.07,159.31 692.1,160.04 692.15,161.39 692.25,156.44 692.32,159.63 692.35,159.35 692.45,163.34 692.5,157.72 692.57,159.86 692.6,159.1 692.65,162.38 692.77,156.57 692.82,161.4 692.85,158.19 692.87,157.19 693,161.47 693.07,158.88 693.1,159.2 693.2,156.87 693.27,163.91 693.32,163.17 693.35,161.76 693.42,155.7 693.57,161.92 693.6,158.38 693.62,163.64 693.73,156.59 693.83,161.69 693.85,162.2 693.9,162.59 694.03,157.27 694.08,158.34 694.1,158.92 694.23,162.25 694.33,161.29 694.35,159.71 694.43,157.15 694.55,162.37 694.58,160.57 694.6,160.56 694.78,164.13 694.83,162.51 694.85,158.56 695,162.88 695.08,160.45 695.1,160.16 695.3,157 695.33,163.13 695.35,163.04 695.45,163.5 695.58,158.69 695.6,158.79 695.73,163.9 695.83,163.07 695.85,161.18 695.95,157.73 696.08,164.81 696.1,162.68 696.23,158.56 696.33,164.11 696.36,164.8 696.53,158.16 696.58,160.23 696.61,158.56 696.68,165.36 696.83,160.74 696.86,160.63 696.91,164.24 697.03,158.48 697.08,160.31 697.11,161.88 697.23,165.93 697.31,159.63 697.33,160.46 697.36,159.95 697.56,164.62 697.58,159.91 697.61,164 697.68,165.69 697.81,159.84 697.83,160.04 697.86,162.11 698.03,167.35 698.06,161.16 698.08,165.06 698.11,162.2 698.13,159.31 698.31,165.33 698.33,164.5 698.36,164.29 698.38,161.06 698.46,165.56 698.58,164.72 698.61,161.19 698.79,161.17 698.84,163.41 698.86,163.18 699.06,165.7 699.09,161.69 699.11,162.2 699.21,160.86 699.34,167.53 699.36,166.8 699.46,160.01 699.59,165.96 699.61,169.13 699.81,158.33 699.84,166.25 699.86,166.88 699.96,171.31 700.09,158.86 700.11,162.28 700.14,160.77 700.21,171.31 700.34,164.22 700.36,159.99 700.54,169.17 700.59,165.27 700.61,162.41 700.64,159.64 700.81,171.54 700.84,168.77 700.86,167.23 700.96,160.84 701.06,162.21 701.09,163.86 701.17,169.58 701.27,161.33 701.32,163.16 701.34,162.11 701.42,168.65 701.57,162.3 701.59,164.14 701.67,160.54 701.72,166.55 701.82,164.34 701.84,163.32 701.92,162.11 701.99,167.4 702.07,166.64 702.09,165.1 702.12,163.72 702.14,166.66 702.32,163.99 702.34,163.23 702.52,168.78 702.57,168.03 702.59,163.55 702.64,163.28 702.77,168.4 702.82,165.32 702.84,168.7 702.97,161.92 703.07,170.46 703.09,169.53 703.24,161.11 703.32,167.03 703.34,168.98 703.54,164.36 703.57,167.76 703.6,166.14 703.7,170 703.82,162.25 703.85,165.18 703.97,171.96 704.05,165.01 704.07,166.49 704.1,164.71 704.12,163.22 704.22,170.08 704.32,167 704.35,167.85 704.45,167.15 704.57,170.05 704.6,169.99 704.7,167.82 704.77,172.66 704.82,172.3 704.85,167.53 704.9,165.59 704.97,170.6 705.07,167.83 705.1,168.89 705.15,171.79 705.25,166.6 705.32,169.19 705.35,169.52 705.4,175.15 705.55,165.64 705.57,169.83 705.6,169.84 705.62,168.61 705.72,174.14 705.82,168.95 705.85,171.11 705.92,168.14 706,173.51 706.08,172.08 706.1,174.04 706.2,164.09 706.3,175.91 706.33,172.94 706.35,174.55 706.5,166.4 706.58,173.16 706.6,174.16 706.8,166.34 706.83,169.16 706.85,171.73 706.93,174.58 707.08,167.38 707.1,169.61 707.23,174.55 707.33,172.64 707.35,172.38 707.45,175.3 707.53,170.71 707.58,173.36 707.6,173.58 707.73,175.75 707.8,166.2 707.83,168.83 707.85,170.5 707.9,176.03 708.08,169.29 708.1,170.43 708.15,169.12 708.28,176.41 708.33,171.76 708.35,174.45 708.4,168.26 708.58,177.66 708.61,178.68 708.76,167.61 708.83,173.06 708.86,177 708.91,178.28 709.03,170.07 709.08,172.28 709.11,173.12 709.21,183.19 709.31,173.1 709.33,173.24 709.36,172.96 709.53,180.84 709.58,176.15 709.61,176.7 709.68,171.11 709.81,182.5 709.83,177.75 709.86,176.89 709.96,171.74 710.08,178.08 710.11,180.29 710.28,171.15 710.33,173.14 710.36,172.79 710.46,179.33 710.56,171.72 710.58,175.37 710.61,174.18 710.71,172.41 710.81,177.86 710.83,176.32 710.86,175.88 710.93,173.56 711.04,178.82 711.09,178.56 711.11,180.77 711.24,174.87 711.34,176.35 711.36,175.54 711.51,173.94 711.59,178.85 711.61,176.22 711.69,178.7 711.81,171.01 711.84,175.95 711.86,175.87 711.99,180.9 712.04,175.56 712.09,176.37 712.11,175.31 712.31,177.84 712.34,175.22 712.36,175.03 712.41,174.43 712.46,178.72 712.59,178.63 712.61,179.14 712.71,174.83 712.84,178.15 712.86,179.61 712.91,180.64 713.01,176.27 713.09,177.64 713.11,176.83 713.14,177.67 713.29,174.64 713.34,175.09 713.36,174.18 713.54,181.89 713.57,180.37 713.59,175.46 713.64,174.83 713.82,182.06 713.84,180.75 713.94,175.32 714.07,177.9 714.09,181.75 714.32,177.02 714.34,179.03 714.37,176.18 714.39,181.82 714.57,179.46 714.59,180.65 714.77,175.99 714.82,181.34 714.84,179.5 714.87,181.74 714.99,176.3 715.07,177.15 715.09,177.91 715.12,181 715.32,180.6 715.34,178.7 715.49,181.89 715.54,177.06 715.57,178.45 715.59,179.96 715.64,182.9 715.82,177.47 715.84,175.21 716.02,182.39 716.07,181.88 716.1,179.43 716.12,182.09 716.27,175.13 716.32,178.62 716.35,182.05 716.42,186.19 716.52,175.65 716.57,179.54 716.6,181.49 716.62,180.2 716.67,185.43 716.82,182 716.85,178.58 717.07,185.04 717.1,183.44 717.12,183.87 717.2,179 717.32,180.79 717.35,181.76 717.37,178.97 717.5,185.86 717.57,181.38 717.6,177.73 717.72,186.92 717.82,183.46 717.85,182.19 717.9,179.19 718.07,187.21 718.1,185.15 718.22,179.7 718.3,186.42 718.32,186.05 718.35,186.37 718.45,181.49 718.58,185.54 718.6,187.65 718.65,183.59 718.83,187.91 718.85,187.15 718.88,188.89 718.93,181.66 719.08,182.11 719.1,187.66 719.15,182.37 719.33,183.13 719.35,187.29 719.43,187.95 719.58,183.74 719.6,186.1 719.68,182.83 719.8,187.92 719.83,186.31 719.85,185.39 719.88,188.54 720.05,183.2 720.08,186.84 720.1,187.18 720.2,189.39 720.33,182.31 720.35,184.33 720.58,190.18 720.6,188.11 720.65,187.79 720.83,200.29 720.85,197.21 720.9,196.42 721.08,202.81 721.11,206.59 721.13,207.25 721.26,196.29 721.33,205.67 721.36,207.79 721.38,208.59 721.53,202.86 721.58,204.55 721.61,206.56 721.71,212.16 721.83,208.61 721.86,207.31 721.96,215.18 722.08,210.71 722.11,210.74 722.13,209.06 722.33,220.62 722.36,218.91 722.43,213.13 722.58,220.74 722.61,218.28 722.63,223.34 722.78,217.06 722.83,220.63 722.86,222.72 722.93,223.96 722.98,220.22 723.08,223.41 723.11,219.87 723.28,227.26 723.33,223.14 723.36,222.94 723.46,222.73 723.59,228.34 723.61,225.84 723.66,223.44 723.81,229.36 723.84,228.4 723.86,228.1 723.99,232.12 724.01,227.09 724.09,229.01 724.11,225.05 724.24,234.16 724.34,230.27 724.36,230.93 724.49,227.98 724.59,231.8 724.61,230.5 724.66,229.86 724.74,234.23 724.84,232.31 724.86,231 724.91,228.77 725.04,233.5 725.09,232.86 725.11,232.52 725.14,231.78 725.16,236.43 725.34,232.86 725.36,235.09 725.46,236.35 725.49,231.57 725.59,234.53 725.61,234.38 725.66,230.71 725.76,236.42 725.84,233.88 725.86,234.22 725.89,230.85 726.04,235.69 726.07,235.19 726.09,239.43 726.27,228.9 726.32,235.36 726.34,238.08 726.42,239.42 726.52,233.07 726.57,233.07 726.59,235.77 726.69,240.37 726.82,220.91 726.84,219.37 726.92,217.22 727.07,224.97 727.09,224.6 727.19,213.87 727.32,216.95 727.34,216.57 727.39,217.27 727.54,209.28 727.57,212.56 727.59,212.41 727.72,213.78 727.82,208.09 727.84,208.67 727.97,211.66 728.04,204.05 728.07,204.64 728.09,205.14 728.22,208.96 728.27,202.72 728.32,204.91 728.34,202.6 728.42,198.97 728.47,203.38 728.57,202.65 728.6,202.97 728.62,203.2 728.82,196.5 728.85,197.21 728.87,202.31 728.97,195.39 729.07,196.12 729.1,197.43 729.12,199.68 729.3,192.38 729.32,192.41 729.35,191.22 729.52,195.28 729.57,192.56 729.6,194.82 729.72,188.2 729.82,191.27 729.85,191.55 729.87,193.55 730.02,185.81 730.07,189.36 730.1,189.06 730.17,190.01 730.27,183.36 730.32,184.97 730.35,183.71 730.37,182.98 730.45,189.94 730.57,184 730.6,183.51 730.75,186.85 730.8,180.66 730.82,183.41 730.85,184.78 731.05,179.39 731.08,182.46 731.1,181.15 731.15,183.33 731.23,178.3 731.33,179.72 731.35,178.84 731.48,179.95 731.58,177.79 731.6,179.76 731.78,176.96 731.83,177.08 731.85,174.63 731.88,172.3 732.03,180.59 732.08,174.8 732.1,174.75 732.18,172.17 732.28,176.73 732.33,175.84 732.35,175.12 732.53,173.49 732.58,174.18 732.6,174.09 732.7,176.3 732.75,170.08 732.83,171.47 732.85,172.94 732.95,170.65 733,174.7 733.08,171.68 733.1,171.68 733.13,172.85 733.33,168.26 733.36,169.14 733.43,174.01 733.56,167.13 733.58,169.13 733.61,169.26 733.63,167.09 733.78,172.23 733.83,170.18 733.86,167 733.96,166.11 733.98,170.07 734.08,168.33 734.11,167.18 734.26,165.02 734.31,170.64 734.33,166.47 734.36,166.65 734.43,163.8 734.58,167.21 734.61,167.69 734.63,170.19 734.81,161.78 734.83,162 734.86,162.19 734.96,171.03 735.08,165.61 735.11,166.84 735.21,167.48 735.26,164.23 735.33,166.92 735.36,167.29 735.58,162.37 735.61,167.06 735.68,167.09 735.76,161.38 735.84,164.58 735.86,162.6 735.91,167.06 736.04,162.43 736.09,164.19 736.11,161.54 736.24,165.79 736.31,160.47 736.34,164.19 736.36,162.01 736.41,165.26 736.49,159.51 736.59,164.14 736.61,163.56 736.76,164.4 736.79,159.04 736.84,160.41 736.86,161.61 736.96,164.47 737.09,162.89 737.11,160.69 737.21,164.89 737.31,159.47 737.34,162.01 737.36,161.2 737.41,157.96 737.56,164.54 737.59,162.11 737.61,162.24 737.71,155.96 737.84,163.51 737.86,163.99 737.89,164.26 738.06,157.48 738.09,158.49 738.11,159.26 738.16,163.2 738.21,158.53 738.32,160.46 738.34,159.26 738.37,158.38 738.47,161.01 738.57,160.93 738.59,160.7 738.67,161.96 738.82,157.89 738.84,159.86 738.94,158.22 739.04,163.72 739.07,161.75 739.09,160.64 739.14,157.41 739.32,161.26 739.34,161.64 739.37,162.14 739.52,158.1 739.57,159.32 739.59,158.13 739.72,162.73 739.82,157.53 739.84,156.65 739.97,163.54 740.07,160.93 740.09,160.15 740.19,158.52 740.29,164.44 740.32,163.09 740.34,158.88 740.44,157.88 740.54,162.93 740.57,158.6 740.59,158.13 740.64,156.3 740.82,162.03 740.85,159.91 740.87,159.95 740.97,155.93 741.07,156.98 741.1,159.83 741.22,163.48 741.27,157.56 741.32,158.32 741.35,158.57 741.42,165.85 741.55,158.07 741.57,158.47 741.6,160.19 741.62,159.3 741.75,164.45 741.82,160.81 741.85,158.88 741.97,155.87 742.05,164.55 742.07,164.49 742.1,162.46 742.22,157.54 742.32,162.97 742.35,165.46 742.5,156.68 742.57,160.7 742.6,157.01 742.67,164.47 742.8,156.64 742.82,157.42 742.85,158.12 742.87,157.94 742.97,166.03 743.07,161.38 743.1,156.22 743.2,156.21 743.33,163.18 743.35,163.46 743.48,154.18 743.58,161.31 743.6,160.65 743.68,162.8 743.8,155.32 743.83,156.89 743.85,159.6 743.93,162.6 744.03,156.78 744.08,159.09 744.1,156.94 744.15,160.09 744.3,156.57 744.33,159.74 744.35,159.48 744.45,157.93 744.5,160.77 744.58,160.07 744.6,159.01 744.65,156.44 744.8,162.53 744.83,162.2 744.85,162.07 744.95,157.71 745.08,159.76 745.1,159.64 745.13,160.7 745.3,155.59 745.33,158.25 745.35,160.02 745.38,162.93 745.53,157.59 745.58,157.68 745.6,160.59 745.81,162.29 745.83,158.75 745.86,162.27 746.06,158.02 746.08,160.46 746.11,161.17 746.23,163.82 746.28,159.94 746.33,160.52 746.36,161.02 746.38,159.99 746.58,163.11 746.61,161.42 746.68,163.79 746.81,158.37 746.83,160.1 746.86,159.52 746.96,163.29 747.08,158.61 747.11,162.67 747.16,159.15 747.28,164.82 747.33,162.29 747.36,159.3 747.38,158.93 747.56,163.17 747.58,159.75 747.61,162.14 747.76,159.81 747.83,164.23 747.86,163.2 747.93,164.2 748.06,158.16 748.08,158.53 748.11,161.74 748.13,159.74 748.29,164.39 748.34,162.17 748.36,161.05 748.44,163.68 748.46,160.28 748.59,160.58 748.61,161.89 748.71,164.58 748.84,160.33 748.86,159.35 749.09,166.23 749.11,162.21 749.21,159.3 749.34,165.8 749.36,166.79 749.49,160.03 749.59,164.26 749.61,166.2 749.79,160.13 749.84,163.78 749.86,165.16 749.89,161.15 749.91,168.55 750.09,164.25 750.11,166.02 750.14,163.53 750.26,169.71 750.34,165.82 750.36,165.94 750.44,159.78 750.59,166.23 750.61,165.24 750.66,166.22 750.77,162.75 750.82,163.96 750.84,164.18 750.97,165.77 751.04,162.93 751.07,163.28 751.09,162.47 751.24,167.83 751.32,165.22 751.34,163.18 751.37,162.09 751.47,168.54 751.57,167.32 751.59,167.36 751.69,161.54 751.82,168.73 751.84,168.41 751.87,169.3 752.02,160.87 752.07,167.78 752.09,165.24 752.17,171.85 752.32,164.39 752.34,161.74 752.37,161 752.49,169.77 752.57,166.92 752.59,165.79 752.69,164.47 752.79,170.48 752.82,166.99 752.84,173.24 753.04,166.29 753.07,168.01 753.09,163.96 753.2,168.62 753.32,166.06 753.35,166.3 753.47,163.31 753.5,169.3 753.57,163.35 753.6,164.77 753.82,168.83 753.85,164.75 753.95,164.28 754.02,172.15 754.07,171.71 754.1,169.91 754.22,164.55 754.32,166.29 754.35,168.66 754.37,170.65 754.57,162.17 754.6,164.72 754.72,171.54 754.82,164.92 754.85,164.41 754.87,163.66 755.05,171.52 755.07,168.19 755.1,168.71 755.22,171.18 755.32,166.91 755.35,165.98 755.5,170.61 755.57,169.06 755.6,168.14 755.65,170.02 755.75,165.67 755.83,169.87 755.85,167.29 755.98,172.47 756.08,165.39 756.1,165.56 756.13,163.62 756.25,172.45 756.33,169.05 756.35,170.18 756.43,171.04 756.55,166.19 756.58,166.64 756.6,168.18 756.83,173.09 756.85,172.69 757.05,166.46 757.08,168.82 757.1,169.29 757.18,175.15 757.3,165.14 757.33,168.45 757.35,167.55 757.48,179.41 757.58,168.33 757.6,166.84 757.63,163.66 757.8,179.71 757.83,174.65 757.85,172.66 757.93,163.17 758.05,177.51 758.08,176.6 758.1,178.89 758.26,165.79 758.33,172.72 758.36,176.14 758.38,180.73 758.58,164.52 758.61,168.89 758.68,178.86 758.83,170.61 758.86,168.99 758.88,168.21 759.03,178.61 759.08,174.08 759.11,170.01 759.18,166.07 759.33,175.64 759.36,173.04 759.48,168.86 759.58,175.72 759.61,178.1 759.78,167.32 759.83,174.24 759.86,175.04 759.88,178.15 760.08,167.57 760.11,172.03 760.18,177.99 760.33,170.83 760.36,169.91 760.38,169.86 760.51,179.39 760.58,175.39 760.61,173.95 760.66,168.9 760.81,178.27 760.84,178.14 760.86,179.09 761.01,167.15 761.09,172.14 761.11,173.9 761.16,178.7 761.31,168.96 761.34,171.32 761.36,173.48 761.46,178.55 761.59,170.22 761.61,171.12 761.74,177.28 761.84,172.85 761.86,173.95 761.99,177.67 762.09,176.94 762.11,176.1 762.21,177.08 762.26,173.94 762.34,176 762.36,178.62 762.51,173.71 762.59,177.34 762.61,176.73 762.74,173.18 762.84,177.38 762.86,176.96 762.99,173.54 763.01,178.36 763.06,178.01 763.09,178.26 763.12,181.78 763.24,171.94 763.32,175.44 763.34,176.67 763.44,174.25 763.47,178.56 763.57,175.95 763.59,174.96 763.67,178.86 763.82,174.06 763.84,174.32 763.87,173.79 764.02,180.21 764.07,178.28 764.09,175.24 764.17,172.4 764.32,180.4 764.34,180.44 764.47,173.44 764.57,176.71 764.59,176.35 764.64,180.13 764.82,177.34 764.84,179.12 764.92,175.63 765.07,181.38 765.09,180.26 765.12,181.03 765.27,176.02 765.32,179.61 765.34,181.8 765.37,182.95 765.52,176.58 765.57,178.64 765.6,176.52 765.8,185.13 765.82,182.15 765.85,182.1 765.95,173.92 766.07,178.18 766.1,181.28 766.12,182.68 766.25,177.38 766.32,180.42 766.35,181.73 766.47,182.12 766.57,178.09 766.6,177.39 766.72,184.68 766.82,180.47 766.85,178.79 766.92,176.21 767.02,182.13 767.07,181.14 767.1,185.95 767.2,175.54 767.32,185.35 767.35,185.54 767.5,175.63 767.57,177.22 767.6,180.05 767.7,184.59 767.8,177.68 767.82,178.17 767.85,177.32 767.97,185.39 768.08,181.83 768.1,177.85 768.23,184.73 768.33,183.66 768.35,181.12 768.43,176.38 768.58,187.58 768.6,184.83 768.73,176.46 768.8,186.71 768.83,183.94 768.85,184.85 768.9,186.89 769.03,179.63 769.08,183.96 769.1,183.12 769.2,187.56 769.28,182.44 769.33,183.02 769.35,182.43 769.5,189.26 769.58,184.45 769.6,185.87 769.68,182.46 769.83,186.98 769.85,186.03 769.9,188.83 770.03,181.77 770.08,183.57 770.1,181.16 770.2,187.89 770.33,182.03 770.35,179.79 770.38,179.35 770.5,187.5 770.58,183.08 770.61,184.09 770.73,181.75 770.83,185.11 770.86,188.82 770.98,187.15 771.08,193.35 771.11,196.03 771.21,198.56 771.33,192.86 771.36,199.87 771.38,198.3 771.46,203.03 771.58,199.76 771.61,198.33 771.63,196.8 771.78,209.01 771.83,207.71 771.86,209.85 771.91,202.3 772.08,214.05 772.11,212.52 772.21,206.02 772.33,210.11 772.36,213.75 772.38,214.43 772.56,210.38 772.58,212.21 772.61,211.96 772.68,217.28 772.83,214.35 772.86,217.54 772.93,219.32 773.09,215.39 773.11,216.36 773.21,222.76 773.34,215.42 773.36,213.39 773.51,223.39 773.59,220.95 773.61,218.8 773.66,217.7 773.81,224.92 773.84,223.92 773.86,223.05 773.94,222.02 774.06,225.88 774.09,224.32 774.11,228.03 774.16,228.64 774.29,223.31 774.34,223.67 774.36,227.3 774.44,230.87 774.54,225.12 774.59,226.76 774.61,228.55 774.76,226.33 774.84,229.83 774.86,226.45 774.89,225.58 775.01,232.27 775.09,227.76 775.11,230.48 775.16,226.94 775.31,237.57 775.34,232.08 775.36,232.65 775.44,230.34 775.57,235.24 775.59,233.26 775.69,232.38 775.82,236.46 775.84,235.67 775.87,237.98 776.04,233.74 776.07,236.95 776.09,236.54 776.12,234.47 776.29,239.52 776.32,237.55 776.34,239.09 776.39,240 776.52,233.36 776.57,239.87 776.59,239.79 776.74,233.84 776.82,236.01 776.84,236.2 776.89,235.18 777.07,240.91 777.09,240.74 777.19,221.21 777.32,225.21 777.34,226.85 777.52,216.24 777.57,219.2 777.59,219.27 777.64,223.15 777.82,211.99 777.84,210.75 778.02,219.96 778.07,214.02 778.1,212.07 778.2,207.46 778.27,212.38 778.32,211.44 778.35,208.55 778.37,213.75 778.57,205.18 778.6,206.15 778.62,201.13 778.75,208.97 778.82,207.07 778.85,204.39 778.95,201 779,205.03 779.07,202.03 779.1,204.16 779.27,196.32 779.32,199.04 779.35,199.64 779.45,204.79 779.55,192.79 779.57,194.72 779.6,192.92 779.7,201.07 779.82,190.46 779.85,192.67 779.9,191 780,200.18 780.07,194.22 780.1,189.5 780.17,188.57 780.25,194.64 780.32,193.79 780.35,193.39 780.45,183.03 780.58,193.43 780.6,190.27 780.65,190.76 780.73,182.98 780.83,187.97 780.85,190.73 780.93,192.08 781.05,182.47 781.08,183.54 781.1,185.79 781.18,188.68 781.33,179.48 781.35,179.97 781.5,185.39 781.58,182.18 781.6,179.47 781.63,176.22 781.83,180.88 781.85,181.29 781.88,181.73 782.08,175.17 782.1,179.02 782.18,182.65 782.33,174.64 782.35,174.07 782.58,180.17 782.6,177.14 782.68,170.84 782.83,177.63 782.85,176.75 782.96,169.78 783.08,175.83 783.11,177.38 783.31,169.15 783.33,170.34 783.36,169.99 783.48,176.18 783.58,168.63 783.61,170.72 783.66,166.83 783.81,177.15 783.83,175.03 783.86,171.26 783.93,167.57 784.03,175.52 784.08,174.45 784.11,173.12 784.23,167.08 784.33,170.83 784.36,170.43 784.41,175.71 784.58,164.61 784.61,167.5 784.71,172.74 784.83,165.96 784.86,165.28 784.88,163.09 785.01,171.52 785.08,168.21 785.11,166.48 785.16,164.29 785.33,170.96 785.36,170.83 785.49,161.93 785.59,163.13 785.61,167.58 785.64,168.86 785.76,161.68 785.84,164.41 785.86,165.54 785.94,170.55 786.09,163.06 786.11,162.55 786.26,167.65 786.34,163 786.36,163.23 786.54,167.32 786.56,159.75 786.59,162.64 786.61,164.23 786.71,167.99 786.81,162.25 786.84,163.31 786.86,160.24 786.89,166.49 787.09,164.49 787.11,162.67 787.19,160.03 787.29,166.36 787.34,164.49 787.36,166.19 787.39,167.24 787.51,159.24 787.59,166.51 787.61,166.06 787.66,166.68 787.79,157.39 787.84,160.26 787.86,160.24 787.94,168.17 788.07,160.46 788.09,159.13 788.14,158.06 788.29,164.29 788.32,162.97 788.34,161.43 788.44,163.37 788.57,159.56 788.59,158.86 788.67,158.28 788.77,164.13 788.82,162 788.84,159.26 788.94,155.58 789.07,167.02 789.09,165.3 789.27,154.75 789.32,158.88 789.34,162.87 789.39,166.38 789.57,154.44 789.59,159.98 789.62,158.7 789.67,165.24 789.82,159.72 789.84,157.14 789.87,155.63 790.02,164.86 790.07,160.72 790.09,163.65 790.22,156.69 790.32,159.63 790.34,159.6 790.45,155.85 790.57,161.38 790.6,159.2 790.65,162.97 790.7,158.16 790.82,160.9 790.85,162.49 790.97,156.71 791.07,160.04 791.1,163.95 791.15,158.4 791.32,159.58 791.35,158.76 791.47,157.46 791.57,163.16 791.6,162.5 791.65,165 791.72,158.75 791.82,159.3 791.85,161.65 791.9,161.75 792,157.63 792.07,159.91 792.1,161.78 792.22,166.13 792.27,157.63 792.32,160.89 792.35,157.7 792.37,162.69 792.57,161.52 792.6,162.95 792.65,160.03 792.82,162.07 792.85,161.8 793.03,163.22 793.05,159.24 793.08,160.85 793.1,159.52 793.28,164.73 793.33,161.51 793.35,156.88 793.58,162.6 793.6,162.79 793.7,158.95 793.83,163.72 793.85,164.32 793.98,158.06 794.08,161.99 794.1,163.73 794.18,158.29 794.33,160.58 794.35,162.07 794.4,164 794.55,159.62 794.58,162.73 794.6,163.22 794.68,163.87 794.8,159.75 794.83,162.39 794.85,161.32 794.9,164.32 795.08,157.77 795.1,162.62 795.18,159.87 795.25,163.52 795.33,160.24 795.36,160.01 795.38,155.81 795.48,167.51 795.58,161.77 795.61,159.62 795.63,157.23 795.83,165.48 795.86,162.91 795.96,156.4 796.08,162.22 796.11,166.11 796.16,167.9 796.26,155.15 796.33,160.32 796.36,161.92 796.46,168.92 796.58,153.93 796.61,157.94 796.63,156.81 796.78,168.29 796.83,162.58 796.86,159.07 796.93,156.06 797.06,167.86 797.08,166.41 797.11,167.24 797.21,154.8 797.33,162.79 797.36,167.39 797.38,167.74 797.53,155.89 797.58,160.18 797.61,160.6 797.71,166.74 797.84,159.49 797.86,160.32 797.89,159.11 797.96,166.8 798.09,162.18 798.11,162.67 798.26,163.85 798.34,159.94 798.36,165.44 798.49,160.52 798.59,166.07 798.61,161.12 798.74,159.17 798.84,164 798.86,163.2 798.96,161.74 799.04,165.9 799.09,165.89 799.11,165.74 799.24,160.44 799.34,164.42 799.36,166.61 799.51,162.46 799.59,162.69 799.61,166.92 799.84,159.25 799.86,159.85 800.06,169.48 800.09,167.51 800.11,163.41 800.21,159.42 800.26,167.54 800.32,166.44 800.34,164.59 800.39,169.03 800.52,162.78 800.57,165.07 800.59,165.67 800.77,167.28 800.79,163.91 800.82,165.99 800.84,163.27 801.07,170.8 801.09,166.89 801.14,167.84 801.22,162.6 801.32,166.41 801.34,167.05 801.42,170.87 801.52,165.44 801.57,165.52 801.59,162.78 801.69,170.59 801.82,165.12 801.84,164.44 802.04,170.76 802.07,166.01 802.09,168.78 802.14,164.24 802.32,172.93 802.34,170.32 802.37,171.03 802.52,165.39 802.57,167.49 802.59,170.41 802.64,171.86 802.82,164.74 802.85,162.58 803,173.68 803.07,165.68 803.1,164.54 803.2,171.14 803.32,165.37 803.35,168.52 803.37,163.98 803.57,170.2 803.6,168 803.67,165.29 803.82,171.16 803.85,168.89 804,165.53 804.07,171.76 804.1,173.49 804.27,166.66 804.32,171.21 804.35,168.69 804.42,167.2 804.5,171.82 804.57,169.49 804.6,167.72 804.62,170.63 804.7,165.11 804.82,170.01 804.85,170.6 804.87,172.9 804.92,166.18 805.07,170.71 805.1,171.58 805.17,166.51 805.33,168.03 805.35,167.74 805.4,172.16 805.53,166.95 805.58,170.42 805.6,168.81 805.73,172.46 805.83,168.97 805.85,168.21 805.93,167.86 806,172.58 806.08,169.95 806.1,169.08 806.13,168.84 806.33,173.55 806.35,172.69 806.4,167.68 806.55,174.68 806.58,169.13 806.6,172.08 806.65,167.48 806.83,170.23 806.85,172.09 806.93,168.24 807.08,175.62 807.1,173.32 807.28,166.72 807.33,172.52 807.35,173.6 807.45,170.26 807.53,176.04 807.58,174.06 807.6,174.56 807.81,168.8 807.83,170.88 807.86,172.37 807.93,174.54 808.06,166.97 808.08,170.43 808.11,167.85 808.21,174.44 808.33,172.23 808.36,173.79 808.41,171.63 808.56,174.51 808.58,172.31 808.61,177.6 808.81,172.42 808.83,174.45 808.86,174.26 808.98,172.4 809.01,176.63 809.08,173.72 809.11,173.34 809.18,171.91 809.33,174.86 809.36,178.2 809.53,171.54 809.58,175.44 809.61,176.17 809.66,178.41 809.83,171.78 809.86,173.24 809.88,171.47 810.08,177.66 810.11,174.6 810.18,173.2 810.34,177.33 810.36,178.63 810.49,172.34 810.59,174.73 810.61,173.26 810.69,171.8 810.79,176.58 810.84,176.16 810.86,175.48 810.89,173.75 811.01,177.21 811.09,176.39 811.11,174.03 811.21,171.64 811.34,181.58 811.36,179.26 811.51,173.92 811.59,176.55 811.61,179 811.64,179.49 811.84,172.09 811.86,176.63 811.89,172.71 812.01,180.72 812.09,176.59 812.11,175.69 812.19,173.67 812.31,179.26 812.34,178.1 812.36,174.01 812.44,173.07 812.54,179.15 812.59,177.15 812.61,179.64 812.74,171.28 812.82,177.96 812.84,177.36 812.92,180.7 813.07,172.23 813.09,175.06 813.12,173.35 813.19,181.31 813.32,174.4 813.34,175.08 813.39,171.83 813.57,181.47 813.59,179.12 813.72,174.64 813.82,178.94 813.84,181.82 813.89,182.43 814.02,173.52 814.07,176.33 814.09,179.29 814.17,184.03 814.29,172.46 814.32,173.6 814.34,176.52 814.47,182.69 814.57,171.95 814.59,175.4 814.64,173.22 814.82,182.67 814.84,180.24 814.94,174.59 815.07,181.79 815.09,178.24 815.14,175.99 815.2,180.63 815.32,178.76 815.35,179.32 815.4,182.76 815.55,176.41 815.57,177.7 815.6,178.65 815.82,182.1 815.85,179.36 815.9,176.97 816.02,183.95 816.07,181.96 816.1,182.85 816.25,177.5 816.32,182.48 816.35,181.18 816.4,183.94 816.5,175.88 816.57,178.29 816.6,180.35 816.75,179.39 816.77,183.78 816.82,181.93 816.85,176.5 817.05,184.64 817.07,179.94 817.1,183.53 817.32,177.41 817.35,179.56 817.47,179.11 817.52,183.03 817.57,180.8 817.6,179.75 817.65,178.98 817.73,182.81 817.83,182.35 817.85,180.6 817.98,179.73 818.03,183.39 818.08,181.4 818.1,182.97 818.28,179.9 818.33,180.73 818.35,185.19 818.45,181.03 818.58,183.57 818.6,184 818.63,181.38 818.78,184.58 818.83,184.09 818.85,180.53 818.93,184.75 819.05,179.28 819.08,181.12 819.1,179.99 819.18,184.92 819.33,181.67 819.35,181.75 819.53,185.16 819.58,180.41 819.6,184.04 819.7,177.19 819.83,182.4 819.85,181.01 819.93,185.45 820.05,178.68 820.08,181.94 820.1,181.59 820.18,186.35 820.31,179.02 820.33,181.05 820.36,182.39 820.48,185.33 820.53,181.77 820.58,182.82 820.61,181.26 820.63,179.97 820.76,187.16 820.83,181.75 820.86,182.17 820.91,179.79 821.08,186.68 821.11,184.08 821.13,179.9 821.33,194.12 821.36,194.24 821.41,194.22 821.46,196.16 821.58,194.36 821.61,196.09 821.73,202.02 821.83,201.58 821.86,201.11 821.88,201.01 822.06,204.35 822.08,203.9 822.11,206.06 822.18,207.51 822.21,202.67 822.33,207.32 822.36,207.24 822.46,205.82 822.58,209.35 822.61,209.53 822.66,213.64 822.84,211.65 822.86,212.12 822.94,211.86 823.04,218.08 823.09,213.89 823.11,213.6 823.34,216.83 823.36,218.87 823.49,221.86 823.56,217.39 823.59,219.36 823.61,219.26 823.66,216.92 823.76,224.44 823.84,222.97 823.86,219.2 823.89,218.29 824.06,225.32 824.09,223.81 824.11,223.79 824.26,219.06 824.29,224.86 824.34,224.11 824.36,227.93 824.49,221.29 824.59,224.57 824.61,225.59 824.71,223.66 824.81,229.26 824.84,226.73 824.86,224.61 824.89,224.27 825.06,229.49 825.09,227.09 825.19,226.65 825.22,229.52 825.32,227.65 825.34,228.58 825.37,226.9 825.42,231.8 825.57,229.61 825.59,232.47 825.62,233.23 825.82,225.54 825.84,226.58 825.99,232.72 826.07,228.19 826.09,225.09 826.22,234.99 826.32,228.76 826.34,228.82 826.42,226.03 826.57,236.4 826.59,233.94 826.67,226.98 826.79,235.89 826.82,235.28 826.84,234.84 826.97,228.86 827.07,233.11 827.09,232.1 827.17,236.55 827.32,228.54 827.34,231.6 827.44,238.37 827.57,219.31 827.6,219.25 827.65,219.53 827.8,217.1 827.82,217.91 827.85,218.1 827.9,219.15 828,212.05 828.07,214.66 828.1,214.34 828.17,217.36 828.2,210.79 828.32,212.31 828.35,210.31 828.45,212.88 828.55,206.91 828.57,209.25 828.6,206.09 828.67,203.86 828.82,208.83 828.85,207.79 828.95,199.04 829.07,204.27 829.1,208.71 829.32,196.31 829.35,198.51 829.42,205.59 829.55,194.62 829.57,195.36 829.6,195.59 829.77,198.42 829.82,194.83 829.85,195.15 829.97,190.93 830.05,195.62 830.08,195.37 830.1,194.71 830.2,188.38 830.33,196.08 830.35,193.58 830.53,185.47 830.58,185.8 830.6,187.22 830.73,190.05 830.75,186.18 830.83,187.98 830.85,184.89 830.9,179.38 831.05,189.15 831.08,187.11 831.1,186.65 831.2,178.58 831.33,182.03 831.35,182 831.43,186.88 831.58,179.12 831.6,180.89 831.7,182.61 831.83,175.08 831.85,176.93 831.88,176.3 832,185.33 832.08,177.57 832.1,180.91 832.15,175.5 832.3,181.56 832.33,179.88 832.35,177.83 832.48,170.95 832.56,179.27 832.58,177.16 832.61,175.81 832.63,178.74 832.73,170.93 832.83,176.12 832.86,175.88 832.93,177.28 833.01,170.96 833.08,172.23 833.11,174.68 833.13,175.34 833.28,168.57 833.33,170.06 833.36,170.17 833.48,178.36 833.56,169.2 833.58,170.03 833.61,166.58 833.81,174.6 833.83,169.89 833.86,168.14 833.91,165.88 834.03,173.03 834.08,172.74 834.11,172.08 834.18,167.53 834.31,173.27 834.33,171.89 834.36,170.93 834.41,171.47 834.48,166.38 834.58,169.73 834.61,166.84 834.63,169.8 834.81,163.7 834.83,164.18 834.86,164.64 834.96,171.41 835.09,165.15 835.11,168.21 835.26,165.62 835.31,170.3 835.34,168.31 835.36,166.31 835.44,167.6 835.56,161.81 835.59,165.05 835.61,166.13 835.64,168.53 835.74,163.49 835.84,168.41 835.86,167.3 836.04,159.88 836.09,165.51 836.11,163.08 836.29,166.33 836.34,161.16 836.36,162.59 836.39,159.44 836.51,167.98 836.59,162.76 836.61,161.07 836.84,167.34 836.86,164.61 836.99,159.81 837.09,164.4 837.11,164.69 837.19,167.71 837.31,158.55 837.34,161.54 837.36,161.92 837.44,165.22 837.57,161.7 837.59,159.02 837.82,164.51 837.84,164.61 837.94,158.51 838.07,165.93 838.09,162.01 838.27,164.98 838.32,162.15 838.34,163.67 838.57,159.12 838.59,161.85 838.62,165.09 838.82,156.78 838.84,156.09 838.99,164.78 839.07,159.77 839.09,159.98 839.22,156.87 839.32,161.99 839.34,160.51 839.44,157.36 839.52,162.16 839.57,161.03 839.59,159.62 839.67,161.16 839.79,157.2 839.82,158.09 839.84,163.26 840.07,155.23 840.1,156.2 840.2,162.63 840.32,153.41 840.35,153.28 840.55,163.89 840.57,157.43 840.6,158.47 840.67,155.74 840.77,160.83 840.82,160.08 840.85,159.79 840.95,160.67 841.02,157.25 841.07,158.26 841.1,157.84 841.15,161.78 841.32,156.72 841.35,157.84 841.47,161.53 841.55,156.16 841.57,157.35 841.6,156.62 841.62,156.59 841.75,160.72 841.82,159.13 841.85,158.32 841.92,153.99 842.02,161.34 842.07,158.78 842.1,160.91 842.25,153.34 842.32,160.93 842.35,159.05 842.45,162.1 842.48,154.94 842.58,159.42 842.6,156.51 842.73,159.98 842.83,157.68 842.85,156.63 843.05,161.48 843.08,156.88 843.1,162.47 843.25,156.56 843.33,158.6 843.35,159.64 843.38,163.63 843.58,156.35 843.6,161.34 843.7,164.85 843.83,155.54 843.85,155.4 844.03,163.49 844.08,160.34 844.1,159.94 844.2,157.57 844.3,163.35 844.33,159.4 844.35,160.44 844.45,162.51 844.58,155.44 844.6,156.97 844.73,164.57 844.83,157.21 844.85,158.3 844.88,157.2 845.01,164.1 845.08,160.37 845.11,162.34 845.16,155.63 845.31,164.26 845.33,161.8 845.36,163.78 845.48,155.47 845.58,160.75 845.61,163.19 845.66,163.51 845.76,159.46 845.83,163.28 845.86,160.79 845.98,164.53 846.08,159.51 846.11,159.7 846.18,164.3 846.28,158.4 846.33,160.2 846.36,158.62 846.48,157.71 846.53,164.19 846.58,160.22 846.61,158.4 846.68,161.61 846.83,158.83 846.86,156.44 846.91,161.8 847.08,159.87 847.11,161.29 847.28,157.21 847.33,162.73 847.36,160.2 847.38,161.7 847.56,156.25 847.59,161.66 847.61,160.17 847.64,164.53 847.84,156.57 847.86,158.8 847.89,157.51 847.99,165.93 848.09,161.12 848.11,160.69 848.14,158.58 848.26,167.59 848.34,161.19 848.36,161.54 848.39,159.13 848.56,163.38 848.59,162.58 848.61,163.3 848.66,160.35 848.71,164.77 848.84,160.68 848.86,160.62 848.89,159.76 849.09,164.47 849.11,162.31 849.16,165.8 849.26,160.09 849.34,161.9 849.36,162.57 849.39,160.75 849.56,165.47 849.59,162.84 849.61,166.76 849.69,160.73 849.84,165.18 849.86,166.65 850.02,158.45 850.07,165.65 850.09,169.26 850.32,158.61 850.34,160.88 850.42,168.78 850.57,160.64 850.59,160.23 850.77,169.66 850.82,163.94 850.84,164.55 850.87,162.93 851.04,167.43 851.07,166.33 851.09,165.94 851.12,166.96 851.22,158.62 851.32,165.96 851.34,169.58 851.37,171.47 851.57,163.51 851.59,163.98 851.62,162.82 851.77,169.54 851.82,167.93 851.84,163.06 851.87,161.71 852.04,170.32 852.07,168.39 852.09,167.51 852.22,160.82 852.32,165.63 852.34,165.36 852.4,168.76 852.55,159.61 852.57,163.07 852.6,163.74 852.65,171.08 852.82,165.05 852.85,166.24 852.87,164.77 852.97,168.4 853.07,166.28 853.1,164.98 853.2,164.2 853.3,169.47 853.32,167.67 853.35,170.75 853.42,162.75 853.57,170.84 853.6,169.55 853.77,161.55 853.82,168.62 853.85,168.15 853.92,169.34 854,164.68 854.07,166.53 854.1,164.74 854.12,161.94 854.17,168.09 854.32,167.95 854.35,166.5 854.37,166.23 854.5,173.45 854.57,169.6 854.6,165.97 854.62,164.83 854.77,168.7 854.82,167.04 854.85,168.48 854.95,164.47 855.05,170.1 855.08,168.28 855.1,167.97 855.25,162.01 855.33,169.63 855.35,170.43 855.58,164.99 855.6,166.39 855.68,170.24 855.75,165.86 855.83,166.57 855.85,168.32 855.9,165.46 856.05,168.84 856.08,167.46 856.1,164.07 856.25,169.6 856.33,166.53 856.35,167.6 856.38,165.77 856.48,170.48 856.58,168.37 856.6,170.12 856.7,165.05 856.78,170.99 856.83,170.48 856.85,168.95 856.88,167.42 856.98,173.33 857.08,167.84 857.1,168.54 857.28,174.99 857.33,169.17 857.36,164.51 857.41,164.11 857.53,173.65 857.58,173.63 857.61,171.94 857.76,164.44 857.83,172.91 857.86,175.31 858.03,166.58 858.08,169.51 858.11,173.55 858.13,174.04 858.26,170.77 858.33,171.67 858.36,171.77 858.41,167.49 858.56,173.57 858.58,171.28 858.61,174.52 858.73,169.42 858.83,172.45 858.86,173.1 858.91,174.74 859.08,170.89 859.11,174.14 859.21,176.68 859.33,171.15 859.36,173.07 859.38,170.77 859.51,177.75 859.58,171.9 859.61,170 859.63,177.1 859.84,173.61 859.86,175.27 859.94,177.95 860.09,173.2 860.11,172.93 860.19,176.26 860.31,172.38 860.34,173.84 860.36,174.61 860.41,176.61 860.54,171.97 860.59,174.2 860.61,172.75 860.71,171.43 860.81,175.69 860.84,171.99 860.86,176.26 860.89,176.79 861.04,171.56 861.09,176.58 861.11,176.21 861.14,176.68 861.26,171.45 861.34,176.29 861.36,179.31 861.56,173.32 861.59,175.73 861.61,175.31 861.71,177.75 861.76,173 861.84,174.91 861.86,173.91 861.89,171.44 862.04,180.05 862.09,175.23 862.11,178.46 862.21,173.76 862.32,179.92 862.34,178.64 862.37,178.97 862.47,172.55 862.57,178.34 862.59,176.61 862.62,181.79 862.79,175.38 862.82,176.49 862.84,173.64 862.99,180.39 863.07,176.64 863.09,177.54 863.17,174.32 863.27,182.17 863.32,179.91 863.34,178.11 863.42,173.31 863.54,179.72 863.57,179.52 863.59,179.74 863.72,173.67 863.82,178.7 863.84,177.1 863.92,181.03 864.07,174.46 864.09,174.39 864.27,179.91 864.32,179.29 864.34,176.78 864.57,182.71 864.59,181.39 864.69,175.99 864.82,182.55 864.85,179.74 864.9,180.74 865,178.19 865.07,178.49 865.1,178.65 865.25,183.33 865.32,181.58 865.35,181.08 865.4,176.29 865.55,185.45 865.57,182.98 865.6,181.64 865.67,177.98 865.82,185.6 865.85,183.77 865.87,185.26 866,173.55 866.07,180.52 866.1,182.96 866.2,188.12 866.32,176.66 866.35,180.42 866.37,178.12 866.55,186.12 866.57,183.45 866.6,183.62 866.72,180.43 866.82,182.14 866.85,184.55 866.95,186.89 867.07,181.3 867.1,181.87 867.15,178.84 867.33,186.31 867.35,183.77 867.38,184.17 867.45,181.37 867.58,183.48 867.6,184.41 867.63,184.89 867.75,178.99 867.83,182.24 867.85,182.2 867.88,181.48 868,185.97 868.08,182.4 868.1,183.57 868.15,181.9 868.28,187.01 868.33,184.25 868.35,186.2 868.5,180.85 868.58,185.79 868.6,185.41 868.83,181.85 868.85,182.31 868.95,186.34 869.08,184.49 869.1,183.46 869.18,185.31 869.3,180.19 869.33,181.02 869.35,181.39 869.43,187.94 869.58,181.04 869.6,181.03 869.73,187.63 869.83,182.14 869.86,186.01 869.93,182.15 870.06,187.41 870.08,186.58 870.11,185.54 870.16,187.34 870.26,181.85 870.33,186.36 870.36,184.02 870.48,186.66 870.53,183.29 870.58,183.32 870.61,185.85 870.63,181.55 870.78,189.1 870.83,188.16 870.86,185.98 870.96,188.07 871.06,183.06 871.08,186.48 871.11,182.43 871.31,190.9 871.33,189.64 871.36,188.93 871.41,183.98 871.58,189.85 871.61,190.73 871.78,196.83 871.83,195.14 871.86,194.03 872.01,204.85 872.08,202.4 872.11,203.33 872.18,198.56 872.31,206.89 872.34,205.62 872.36,204.69 872.41,203.12 872.59,209.05 872.61,210.18 872.69,206.06 872.84,209.83 872.86,210.51 872.91,213.92 872.99,210.04 873.09,212.83 873.11,214.44 873.24,219.03 873.34,212.8 873.36,215.51 873.41,212.68 873.49,221.13 873.59,220.32 873.61,218.61 873.64,217.19 873.76,222.18 873.84,217.37 873.86,220.01 873.94,217.03 874.04,223.29 874.09,222.27 874.11,224.03 874.19,218.78 874.31,226.7 874.34,224.78 874.36,225.75 874.44,228.97 874.54,222.38 874.59,222.68 874.61,224.58 874.74,231.17 874.82,226.81 874.84,228.21 874.89,224.81 875.07,231.49 875.09,231.76 875.24,228.33 875.32,231.88 875.34,233.99 875.42,236.22 875.54,229.33 875.57,229.44 875.59,231.95 875.72,236.38 875.82,227.92 875.84,227.3 875.87,226.72 876.02,237.69 876.07,236.02 876.09,234.16 876.19,227.38 876.27,238 876.32,235.89 876.34,237.01 876.47,229.91 876.57,236.31 876.59,239.44 876.77,230.76 876.82,231.99 876.84,234.27 876.97,240.4 877.07,232.53 877.09,234.56 877.12,231.6 877.3,241.48 877.32,237.39 877.35,235.7 877.4,234.61 877.57,240.85 877.6,238.25 877.65,238.32 877.82,227.57 877.85,224.49 877.92,228.66 878.07,221.32 878.1,219.94 878.12,218.19 878.2,222.61 878.32,220.78 878.35,217.6 878.47,213.66 878.57,221.15 878.6,216.99 878.77,209.78 878.82,213.9 878.85,214.38 878.87,215.08 879.05,207.9 879.07,209.42 879.1,210.39 879.15,210.45 879.3,202.79 879.32,206.02 879.35,205.56 879.42,204.09 879.52,208.57 879.57,206.63 879.6,204.88 879.62,206.75 879.8,200.14 879.83,202.11 879.85,206.18 880.08,199.53 880.1,199.83 880.23,194.77 880.3,199.88 880.33,196.76 880.35,199.94 880.53,194.4 880.58,195.81 880.6,194.98 880.65,196.47 880.78,191.46 880.83,194.56 880.85,192.27 880.98,195.55 881.03,189.5 881.08,190.9 881.1,186.27 881.3,194.25 881.33,189.76 881.35,191.89 881.45,185.62 881.58,193.15 881.6,193.55 881.8,182.29 881.83,184.9 881.85,184.75 881.98,191.92 882.08,183.45 882.1,183.54 882.16,182.97 882.31,185.9 882.33,184.57 882.36,186.71 882.58,179.02 882.61,180.26 882.73,184.8 882.83,179.43 882.86,179.43 882.88,177.96 883.03,183.54 883.08,182.38 883.11,181.03 883.21,174.53 883.31,181.73 883.33,180.75 883.36,179.16 883.38,179.46 883.51,175.26 883.58,177.13 883.61,175.49 883.68,174.53 883.76,180.06 883.83,177.39 883.86,174.67 883.98,172.62 884.01,175.95 884.08,174.29 884.11,175.43 884.16,170.28 884.33,172.33 884.36,172.91 884.38,175.62 884.51,169.36 884.58,172.43 884.61,171.83 884.66,172.64 884.74,168.07 884.84,170.63 884.86,170.26 884.89,173.78 885.04,167.99 885.09,168.71 885.11,172.37 885.16,174.55 885.24,168.71 885.34,171.58 885.36,173.26 885.41,173.84 885.59,167.52 885.61,168.91 885.74,172.46 885.81,166.46 885.84,168.2 885.86,168.36 885.89,167.45 885.96,173.34 886.09,169.99 886.11,167.86 886.14,163.78 886.31,172.9 886.34,171.18 886.36,171.62 886.49,161.2 886.59,169.23 886.61,171.39 886.66,172.71 886.84,163.51 886.86,164.32 886.99,170.37 887.06,164.9 887.09,164.67 887.12,167.89 887.14,164.57 887.32,165.79 887.34,165.41 887.37,167.26 887.52,162.11 887.57,164.06 887.59,165.25 887.62,166.4 887.77,161.57 887.82,164.71 887.84,164.59 887.94,169.29 888.04,163.3 888.07,165.76 888.09,164.89 888.24,165.96 888.32,162.94 888.34,160.69 888.49,169.4 888.57,164.26 888.59,162.4 888.67,159.43 888.79,166.93 888.82,164.83 888.84,166.1 888.97,161.02 889.07,167.75 889.09,164.84 889.29,158.88 889.32,163.47 889.34,163.53 889.42,167.46 889.57,157.61 889.6,162.41 889.65,160.26 889.72,165.9 889.82,163.51 889.85,163.51 889.87,164.06 890.07,158.41 890.1,158.36 890.15,164.06 890.32,163.79 890.35,160.31 890.37,157.45 890.55,166.7 890.57,165.41 890.6,164.77 890.72,153.04 890.82,166.69 890.85,169.12 891.05,154.64 891.07,156.34 891.1,158.77 891.17,167.06 891.32,158.06 891.35,157.09 891.37,156.44 891.55,166.12 891.57,165.77 891.6,162.59 891.72,155.07 891.8,162.89 891.82,161.37 891.85,164.11 891.9,165.54 892.02,156.47 892.08,160.86 892.1,163.25 892.15,165.12 892.33,158.21 892.35,159.72 892.45,163.42 892.55,159.06 892.58,160.55 892.6,157.93 892.78,164.27 892.83,162.63 892.85,161.23 892.9,157.54 892.95,165.9 893.08,157.97 893.1,159.77 893.13,158.13 893.28,164.25 893.33,162.17 893.35,162.69 893.4,159.09 893.55,163.31 893.58,162.33 893.6,164.02 893.78,158 893.83,164.53 893.85,164 894,158.46 894.08,159.34 894.1,161.27 894.15,162.96 894.28,158.03 894.33,162.06 894.35,159.93 894.4,159.33 894.58,164.29 894.61,160.86 894.73,159.47 894.81,162.58 894.83,161.17 894.86,162.84 894.93,154.68 895.08,164.89 895.11,165.27 895.26,154.56 895.33,163.17 895.36,162.04 895.38,165.23 895.58,154.61 895.61,153.52 895.68,167.04 895.83,155.46 895.86,153.61 895.88,152.93 895.98,164.19 896.08,163.53 896.11,162.03 896.21,155.02 896.33,161.59 896.36,166.96 896.51,157.05 896.58,161.95 896.61,163.38 896.66,163.65 896.76,157.63 896.83,158.29 896.86,161.13 896.88,160.6 896.96,168.31 897.09,161.03 897.11,158.26 897.16,158.13 897.34,165.48 897.36,161.6 897.44,158.58 897.49,164.47 897.59,162.66 897.61,165.67 897.79,158.86 897.84,159.33 897.86,163.61 897.91,166.67 897.96,160.74 898.09,162.45 898.11,163.59 898.26,165.5 898.29,161.85 898.34,162.87 898.36,160.51 898.54,163.38 898.56,159.84 898.59,161.7 898.61,159.98 898.76,165.52 898.84,163.04 898.86,164.6 898.89,166.3 899.01,161.48 899.09,164.05 899.11,162.26 899.26,159.59 899.34,165.42 899.36,162.84 899.44,160.57 899.52,165.11 899.57,165.01 899.59,162.73 899.69,161.01 899.79,164.71 899.82,163.42 899.84,164.99 899.89,159.92 900.04,165.55 900.07,163.2 900.09,166.55 900.19,160.62 900.32,165.44 900.34,164.8 900.37,167.54 900.54,160.59 900.57,162.2 900.59,161.44 900.67,167.17 900.82,163.9 900.84,163.14 900.92,161.59 901.04,167.13 901.07,167 901.09,166.42 901.19,160.58 901.32,169.84 901.34,168.62 901.52,162.94 901.57,165.98 901.59,165.02 901.62,164.59 901.69,167.38 901.82,164.85 901.84,164.6 901.87,161.81 901.97,169.62 902.07,167.41 902.1,167.46 902.15,161.78 902.32,170.61 902.35,166.23 902.5,158.59 902.57,167.59 902.6,169.04 902.7,169.99 902.8,161.52 902.82,163.15 902.85,166.69 902.95,170.01 903.07,163.99 903.1,164.55 903.25,170.08 903.32,166.66 903.35,165.26 903.42,163.25 903.52,170.88 903.57,169.5 903.6,169.21 903.67,164.06 903.82,167.39 903.85,168.74 903.87,171.3 904.07,163.14 904.1,165.84 904.2,172 904.3,162.53 904.32,164.96 904.35,166.31 904.48,173.01 904.58,170.75 904.6,169.05 904.63,165.59 904.83,170.95 904.85,171.27 904.88,173.16 904.95,165.33 905.08,170.68 905.1,169.6 905.18,173.59 905.33,166.84 905.35,168.88 905.38,166.66 905.48,173.27 905.58,169.8 905.6,170.18 905.63,168.22 905.8,172.43 905.83,171.56 905.85,171.57 905.98,166.87 906.08,168.33 906.1,169.46 906.18,171.43 906.33,167.39 906.35,168.41 906.5,172.45 906.58,168.89 906.6,170.02 906.73,167.93 906.8,172.65 906.83,170.52 906.85,173.34 906.98,168.61 907.08,169.48 907.11,169.81 907.28,174.36 907.33,171.68 907.36,168.35 907.43,167.04 907.51,173.19 907.58,173.14 907.61,172.46 907.71,168.07 907.83,171.78 907.86,168.66 907.91,166.52 908.03,173.13 908.08,172.88 908.11,175.89 908.21,169.69 908.33,171.55 908.36,175.65 908.48,170.69 908.58,170.86 908.61,169.61 908.63,169.25 908.76,176.16 908.83,173.14 908.86,172.73 908.91,169.72 909.08,173.2 909.11,175.88 909.26,168.8 909.33,170.11 909.36,173.56 909.41,177.36 909.54,170.79 909.59,172.42 909.61,170.95 909.71,175.38 909.84,175.29 909.86,173.93 909.91,170.4 910.06,178.2 910.09,176.46 910.11,175.46 910.14,175.61 910.24,170.04 910.34,172.84 910.36,176.13 910.54,171.29 910.59,173.32 910.61,174.67 910.69,174.73 910.76,170.47 910.84,172.46 910.86,173.4 910.94,176.66 911.09,170.87 911.11,172.44 911.16,176.66 911.34,171.16 911.36,171.3 911.41,170.97 911.46,178.38 911.59,173.71 911.61,174.53 911.76,171.21 911.84,173.83 911.86,176.76 911.99,173.81 912.07,174.96 912.09,173.05 912.19,176.53 912.22,172.97 912.32,176.52 912.34,172.47 912.37,177.3 912.49,170.44 912.57,175.26 912.59,175.04 912.62,172.28 912.69,177.47 912.82,177.38 912.84,174.54 912.92,171.27 912.99,178.95 913.07,176.76 913.09,176.76 913.22,171.59 913.29,177.33 913.32,174.37 913.34,176.72 913.37,179 913.57,171.62 913.59,178.35 913.64,179.61 913.77,172.4 913.82,173.01 913.84,173.45 914.02,178.78 914.07,177.5 914.09,175.11 914.14,173.39 914.32,180 914.34,179.35 914.52,174.5 914.57,176.46 914.6,176.37 914.8,175.52 914.82,179.34 914.85,179.4 914.9,180.09 914.92,176.15 915.07,176.45 915.1,176.42 915.12,180.93 915.27,175.39 915.32,176.89 915.35,176 915.42,178.86 915.55,175.63 915.57,176.52 915.6,178.2 915.72,179.14 915.8,174.51 915.82,178.56 915.85,176.19 915.92,180.94 916.07,176.22 916.1,178.07 916.15,176.94 916.25,183.24 916.32,181.12 916.35,179.33 916.37,176.03 916.57,182.06 916.6,180.49 916.62,182.12 916.8,176.19 916.82,178.36 916.85,179.02 916.93,182.39 917.05,175.67 917.08,176.9 917.1,174.24 917.3,183.56 917.33,181.65 917.35,177.22 917.4,180.55 917.48,176.63 917.58,178.9 917.6,181 917.68,181.97 917.8,178.07 917.83,178.22 917.85,179.54 917.88,177.54 918.03,184.76 918.08,182.25 918.1,180.71 918.18,175.97 918.33,185.95 918.35,185.16 918.48,176.29 918.58,178.31 918.6,180.36 918.65,178.31 918.7,183.08 918.83,181.57 918.85,179.82 918.88,178.9 919.03,185.51 919.08,183.88 919.1,180.84 919.23,173.57 919.33,186.19 919.36,185.6 919.38,186.78 919.53,176.41 919.58,185.28 919.61,184.39 919.66,187.01 919.81,176.75 919.83,179.42 919.86,181.86 919.98,186.88 920.06,180.65 920.08,182.52 920.11,181.75 920.16,180.56 920.28,187 920.33,184.29 920.36,184.18 920.46,180.47 920.58,184.75 920.61,182.43 920.71,181.23 920.83,188.11 920.86,185.16 920.98,178.71 921.08,187.13 921.11,187.66 921.23,179.44 921.33,181.88 921.36,184.9 921.43,188.43 921.58,180.79 921.61,183.31 921.71,187.76 921.84,184.73 921.86,182.97 922.09,193 922.11,191.4 922.24,199.34 922.34,190.5 922.36,194.26 922.39,192.88 922.51,202.25 922.59,196.82 922.61,195.91 922.81,208.59 922.84,204.21 922.86,205.88 922.89,201.77 923.09,209.1 923.11,207.7 923.24,206.68 923.31,212.45 923.34,210.62 923.36,208.56 923.56,215.01 923.59,213.43 923.61,212.74 923.66,210.43 923.81,219.68 923.84,217.2 923.86,215.39 923.96,214.96 924.09,221.61 924.11,218.81 924.19,216.88 924.26,221.23 924.32,218.55 924.34,223.23 924.52,219.51 924.57,221.77 924.59,221.26 924.67,220.43 924.77,226.03 924.82,221.88 924.84,224.06 924.89,221.79 924.99,224.28 925.07,223.45 925.09,224.93 925.17,222.88 925.22,226.49 925.32,225.55 925.34,225.3 925.37,229.11 925.57,226.3 925.59,227.45 925.62,224.83 925.79,229.77 925.82,227.52 925.84,229.55 925.99,227.15 926.02,231.4 926.07,230.74 926.09,230.18 926.12,234.57 926.24,227.97 926.32,229.22 926.34,229.82 926.42,237.28 926.57,230.61 926.59,231.13 926.64,230.44 926.8,234.21 926.82,234.13 926.85,233.94 926.97,229.11 927.07,235.73 927.1,235.27 927.15,236.76 927.25,232.69 927.32,233.58 927.35,235.1 927.45,238.1 927.52,231.88 927.57,234.83 927.6,233.85 927.7,236.66 927.8,230 927.82,232.86 927.85,231.69 927.97,238.74 928.07,233.3 928.1,234.52 928.15,238.18 928.32,222.11 928.35,219.72 928.42,219.3 928.47,222.27 928.57,219.6 928.6,219.1 928.65,220.61 928.72,215.27 928.82,216.91 928.85,217.42 928.87,219.23 929.07,213.26 929.1,214.13 929.15,214.67 929.28,208.58 929.33,208.6 929.35,209.74 929.38,211.79 929.58,206.73 929.6,206.26 929.65,209.07 929.83,203.09 929.85,204.15 929.9,204.47 929.98,199.93 930.08,201.09 930.1,201.38 930.18,204.69 930.33,195.68 930.35,197.38 930.38,195.64 930.5,199.73 930.58,196.72 930.6,196.73 930.75,193.13 930.83,194.22 930.85,194.35 930.9,194.59 930.98,190.54 931.08,190.76 931.1,191.91 931.13,193.08 931.3,188.87 931.33,188.88 931.35,188.69 931.5,191.91 931.53,187.31 931.58,187.42 931.6,185.25 931.7,184.12 931.78,190.85 931.83,188.28 931.86,187.96 932.08,184.75 932.11,184.79 932.16,184.29 932.26,188.34 932.33,184.71 932.36,180.48 932.41,179.82 932.53,186.26 932.58,183.5 932.61,182.01 932.71,183.47 932.78,177.58 932.83,183.17 932.86,180.04 932.93,181.76 933.06,175.75 933.08,179.43 933.11,179.75 933.16,183.27 933.31,177.83 933.33,178.23 933.36,177.07 933.53,180.68 933.58,178.03 933.61,174.79 933.76,174.55 933.83,178.85 933.86,175.71 934.01,178.25 934.08,176.99 934.11,172.9 934.24,175.51 934.34,173.84 934.36,174.62 934.49,172.23 934.54,178.08 934.59,176.54 934.61,169.98 934.79,175.59 934.84,174.4 934.86,174.27 935.06,167.65 935.09,169.22 935.11,169.4 935.19,175.08 935.31,168.37 935.34,170.3 935.36,169.86 935.46,172.49 935.56,166.97 935.59,168.17 935.61,166.66 935.81,172.24 935.84,170.1 935.86,169.52 936.01,169.74 936.06,166.38 936.09,167.69 936.11,167.27 936.16,169.39 936.31,165.35 936.34,166.03 936.36,167.22 936.41,169.07 936.44,163.9 936.59,165.66 936.61,165.42 936.69,168.6 936.82,163.49 936.84,162.12 936.94,170.7 937.07,166.61 937.09,164.96 937.22,169.26 937.32,162.04 937.34,161.32 937.49,167.31 937.57,162.6 937.59,160.11 937.82,167.65 937.84,166.21 937.97,157.79 938.07,163.11 938.09,167.28 938.12,168 938.29,159.43 938.32,160.62 938.34,160.08 938.44,170.01 938.57,159.85 938.59,160.52 938.79,168.18 938.82,165.32 938.84,163.86 938.89,165.62 938.92,161.39 939.07,163.43 939.09,162.12 939.2,166.88 939.32,160.76 939.35,160 939.37,158.68 939.47,165.01 939.57,163.43 939.6,161.05 939.72,160.87 939.75,165.43 939.82,164.1 939.85,160.68 939.9,157.87 940.05,163.05 940.07,161.96 940.1,161.05 940.17,163.48 940.27,158.53 940.32,162.75 940.35,161.89 940.4,157.01 940.5,163.42 940.57,160.97 940.6,160.19 940.7,155.68 940.82,162.75 940.85,161.69 940.87,161.95 940.92,157.05 941.07,159.89 941.1,158.93 941.17,161.92 941.32,160.3 941.35,161.25 941.52,162.63 941.55,157.64 941.57,160.23 941.6,158.51 941.73,156.37 941.83,163.37 941.85,162.69 941.98,154.35 942.08,158.33 942.1,161.28 942.2,164.53 942.3,158.11 942.33,158.12 942.35,160.41 942.38,157.34 942.58,162.45 942.6,158.88 942.75,157.46 942.8,162.38 942.83,161.42 942.85,160.92 942.9,162.72 943,157.91 943.08,160.43 943.1,160.47 943.15,165.14 943.28,158.6 943.33,161.05 943.35,161.78 943.38,158.85 943.5,162.94 943.58,160.29 943.6,159.95 943.75,157.7 943.8,161.3 943.83,159.77 943.85,161.41 943.93,165.72 944.08,158.68 944.1,158.83 944.21,156.9 944.31,162.04 944.33,160.99 944.36,162.77 944.43,163.55 944.51,158.23 944.58,158.31 944.61,158.06 944.71,165.15 944.83,159.66 944.86,158.8 944.91,156.97 945.03,164.22 945.08,160.74 945.11,160.3 945.26,157.61 945.33,162.3 945.36,162 945.46,163.23 945.53,158.25 945.58,160.06 945.61,159.27 945.73,163.12 945.83,161.76 945.86,159.16 945.93,157.17 945.98,162.37 946.08,159.39 946.11,161.5 946.21,156.24 946.33,159.92 946.36,162.99 946.43,163.98 946.56,156.39 946.58,157.19 946.61,161.59 946.74,166.14 946.84,157.48 946.86,160.25 946.89,157.91 946.99,163.8 947.09,159.37 947.11,162.66 947.19,155.17 947.31,166.61 947.34,164.58 947.36,162.02 947.44,162.89 947.56,159.52 947.59,160.63 947.61,161.74 947.74,164.57 947.84,163.02 947.86,161.14 947.91,158.47 948.06,165.02 948.09,164.97 948.11,166.22 948.24,157.31 948.34,161.14 948.36,163.75 948.41,164.65 948.59,157.01 948.61,157.9 948.76,167.88 948.84,163.11 948.86,159.18 949.06,165.19 949.09,161.44 949.17,164.84 949.24,159.76 949.32,161.66 949.34,160.03 949.42,166.85 949.57,162.92 949.59,163.47 949.62,160.83 949.74,169.46 949.82,165.78 949.84,158.19 950.02,168.57 950.07,165.24 950.09,164.08 950.14,158.58 950.29,168.56 950.32,163.98 950.34,166.22 950.42,159.67 950.57,167.62 950.59,164.2 950.62,166.09 950.72,160.01 950.82,162.3 950.84,165.49 950.92,167.85 951.07,160.31 951.09,162.61 951.12,161.19 951.24,166.89 951.32,166.35 951.34,163.49 951.37,164.46 951.44,158.5 951.57,164.11 951.6,164.34 951.7,167.31 951.75,160.79 951.82,163.07 951.85,164.7 951.97,167.54 952.05,163.37 952.07,166.32 952.1,166.71 952.2,162.61 952.32,168.69 952.35,167.02 952.45,164.36 952.57,167.94 952.6,165.23 952.65,166.72 952.77,163.84 952.82,166.53 952.85,165.54 952.97,168.82 953.07,166 953.1,165.53 953.17,163.41 953.3,171.21 953.32,166.45 953.35,167.22 953.4,162.02 953.57,168.27 953.6,170.01 953.65,170.61 953.77,162.96 953.82,163.4 953.85,165.73 953.95,171.21 954.05,161.51 954.08,161.95 954.1,165.33 954.13,161.27 954.25,171.79 954.33,167.33 954.35,163.32 954.53,170.37 954.58,170.32 954.6,169.02 954.68,164.4 954.8,170 954.83,168.63 954.85,169.25 954.9,170.22 955,163.81 955.08,166.66 955.1,169.01 955.15,170.58 955.3,164.09 955.33,165.02 955.35,166.42 955.43,171.72 955.58,164.39 955.6,163.8 955.65,163.54 955.73,172.98 955.83,168.55 955.85,165.83 955.9,163.4 956.08,171.37 956.1,169.37 956.15,169.9 956.33,166.22 956.35,168.84 956.43,171.36 956.56,166.7 956.58,167.43 956.61,171.91 956.71,173.86 956.78,167.82 956.83,172.11 956.86,168.65 957.01,173.74 957.08,167.34 957.11,166.55 957.13,163.86 957.31,175.81 957.33,170.54 957.36,168.27 957.41,165.64 957.58,174.54 957.61,173.47 957.63,173.57 957.78,164.11 957.83,169.83 957.86,169.38 957.91,174.86 958.08,166.23 958.11,167.8 958.13,166.44 958.21,176.27 958.33,168.96 958.36,168.22 958.38,167.6 958.56,174.48 958.58,171.51 958.61,172.44 958.68,167.55 958.83,174.56 958.86,173.71 958.96,166.91 959.09,170.77 959.11,171.39 959.14,172.47 959.24,166.8 959.34,169.87 959.36,170.47 959.39,171.54 959.54,167.72 959.59,170.96 959.61,173.06 959.71,175.26 959.84,167.17 959.86,168.85 959.89,168.7 959.96,174.65 960.09,169.59 960.11,167.43 960.29,176.46 960.34,174.31 960.36,170.77 960.51,175.03 960.59,173.01 960.61,172.29 960.74,174.03 960.79,171.43 960.84,173.81 960.86,173.06 960.94,175.63 961.04,171.25 961.09,173.84 961.11,174.36 961.14,171.45 961.21,176.06 961.34,173.27 961.36,172.84 961.49,176.09 961.57,173 961.59,175.57 961.64,170.46 961.82,177.74 961.84,175.68 961.89,174.38 961.94,177.22 962.07,175.33 962.09,173.82 962.19,178.15 962.27,173.4 962.32,177.18 962.34,176.21 962.39,179.59 962.54,172.4 962.57,173.12 962.59,172.22 962.69,180.38 962.82,174.7 962.84,171.78 963.04,180.55 963.07,176.63 963.09,174.1 963.17,168.16 963.29,180.06 963.32,179.82 963.34,179.64 963.49,169.52 963.57,177.31 963.59,176.67 963.62,180.41 963.82,171.61 963.84,175.77 963.87,175.04 964.02,181.38 964.07,175.58 964.1,178.19 964.17,173.59 964.32,178.04 964.35,178.16 964.42,174 964.57,179.58 964.6,179.82 964.62,182.17 964.75,173.22 964.82,173.46 964.85,175.39 965,181.06 965.07,174.76 965.1,174.72 965.25,180.83 965.32,176.97 965.35,176.15 965.37,174.45 965.57,179.17 965.6,178.44 965.7,180.49 965.8,176.41 965.82,178.52 965.85,179.45 965.97,176.03 966.02,181.75 966.07,178.52 966.1,177.97 966.17,173.74 966.27,179.98 966.32,178.09 966.35,180.12 966.48,180.75 966.55,176.45 966.58,179.37 966.6,181.45 966.68,181.49 966.75,176.26 966.83,177.87 966.85,177.48 966.93,182.32 967.08,175.59 967.1,173.39 967.25,186.17 967.33,178.53 967.35,176.44 967.53,183.21 967.58,178.9 967.6,182.12 967.8,175.75 967.83,181.26 967.85,180.84 967.9,183.21 968.03,176.91 968.08,177.94 968.1,175.41 968.13,183.02 968.33,179.88 968.35,176.92 968.4,176.28 968.58,184.3 968.6,184.37 968.8,176.64 968.83,179.22 968.85,182.03 968.93,184.55 969.08,178.49 969.11,178.57 969.26,185.44 969.33,183.24 969.36,183.43 969.38,178.51 969.51,186.43 969.58,183.46 969.61,180.17 969.73,186.56 969.83,184.03 969.86,183.73 969.93,180.01 970.01,185.24 970.08,184.41 970.11,183.13 970.23,185.74 970.31,180.15 970.33,184.42 970.36,182.57 970.41,185.87 970.53,179.95 970.58,182.8 970.61,181.58 970.81,188.23 970.83,183.64 970.86,184.5 970.93,180.55 971.08,186.84 971.11,189.63 971.31,179.86 971.33,182.05 971.36,182.56 971.41,188.68 971.59,179.06 971.61,180.58 971.74,191.12 971.84,179.83 971.86,179.86 971.99,189.42 972.09,182.49 972.11,182.36 972.16,179.08 972.34,195.73 972.36,189.96 972.54,197.24 972.59,195.9 972.61,197.45 972.64,194.32 972.81,199.11 972.84,197.4 972.86,199.83 972.89,198.3 973.01,203.43 973.09,200.73 973.11,201.96 973.14,200.85 973.34,211.92 973.36,208.27 973.46,202.97 973.56,213.81 973.59,212.17 973.61,213.14 973.66,214.23 973.76,208.75 973.84,209.45 973.86,211.52 973.97,217.06 974.07,212.72 974.09,215.89 974.12,213.73 974.22,218.94 974.32,216.64 974.34,216.49 974.37,213.95 974.57,224.21 974.59,220.81 974.74,217.39 974.82,224.33 974.84,224.78 975.02,220.04 975.07,222.81 975.09,224.35 975.17,226.15 975.29,217.99 975.32,220.54 975.34,224.19 975.37,223.66 975.42,229.48 975.57,224.13 975.59,224.98 975.64,224.54 975.74,230.51 975.82,225.15 975.84,227.05 975.87,224.61 976.02,231.09 976.07,229.42 976.09,230.3 976.14,224.55 976.27,231.74 976.32,230.84 976.34,231.79 976.4,227.17 976.52,233.27 976.57,231.92 976.6,230.55 976.65,229.77 976.8,234.11 976.82,233.23 976.85,229.81 977.07,235.91 977.1,233.73 977.12,237.43 977.22,232.3 977.32,232.61 977.35,235.53 977.4,236.69 977.47,231.73 977.57,235.62 977.6,235.08 977.67,238.47 977.82,235.73 977.85,233.94 977.9,233.25 978.02,237.77 978.07,236.03 978.1,235.77 978.15,233.7 978.2,238 978.32,235.78 978.35,235.07 978.45,238.78 978.57,222.12 978.6,222.74 978.7,226.09 978.82,219.02 978.85,219.71 978.93,222.82 979,217.86 979.08,218.3 979.1,214.32 979.13,218.06 979.3,212.1 979.33,217.5 979.35,216.14 979.4,218.87 979.53,207.82 979.58,212.41 979.6,211.64 979.68,216.03 979.83,205.36 979.85,203.85 979.98,212.33 980.08,206.14 980.1,205.22 980.25,206.39 980.33,202.4 980.35,199.99 980.45,207.59 980.58,201.16 980.6,199.06 980.63,196.66 980.8,204.1 980.83,203.62 980.85,199.76 980.95,194.52 981.08,202.5 981.1,200.32 981.25,192.33 981.33,194.1 981.36,194.82 981.43,196.63 981.58,189.79 981.61,190.06 981.68,194.7 981.81,188.74 981.83,189.95 981.86,191.89 982.01,188.8 982.08,190.67 982.11,188.65 982.18,184.81 982.33,189.81 982.36,191.36 982.53,183.89 982.58,186.15 982.61,187.23 982.63,189.45 982.78,181.48 982.83,182.04 982.86,182.51 982.91,187.36 983.06,179.04 983.08,181.48 983.11,182.06 983.18,179.71 983.31,183.81 983.33,182.95 983.36,178.49 983.43,176.15 983.48,180.27 983.58,178.16 983.61,179.77 983.66,174.8 983.84,181.63 983.86,177.48 983.89,181.35 983.94,175.16 984.09,176.09 984.11,178.74 984.21,171.42 984.34,176.85 984.36,177.41 984.46,177.45 984.51,171.99 984.59,175.23 984.61,179.77 984.69,179.83 984.76,172.87 984.84,175.76 984.86,173.25 985.01,177.31 985.06,172.9 985.09,174.47 985.11,172.14 985.21,177.28 985.34,174.38 985.36,170.43 985.41,173.07 985.44,168.98 985.59,172.59 985.61,172.88 985.71,173.97 985.81,169.85 985.84,170.05 985.86,171.83 985.89,168.14 985.91,174.1 986.09,172.18 986.11,172.55 986.32,165.87 986.34,170.84 986.44,171.51 986.54,166.86 986.57,169.13 986.59,169.01 986.69,174.87 986.82,165.17 986.84,166.81 986.87,165.26 987.04,171.43 987.07,170.88 987.09,167.31 987.22,166.74 987.32,171.33 987.34,168.72 987.37,171.02 987.52,164.22 987.57,166.45 987.59,168.16 987.64,172.23 987.79,162.61 987.82,163.82 987.84,163.74 987.94,169.37 988.04,161.3 988.07,162.26 988.09,162.73 988.12,162.55 988.27,171.25 988.32,166.73 988.34,165.59 988.44,160.88 988.54,168.18 988.57,165.54 988.59,169.27 988.72,164.03 988.82,167.09 988.85,166.65 988.9,167.89 989.05,160.57 989.07,160.93 989.1,163.38 989.2,167.5 989.32,164.27 989.35,162.72 989.42,161.53 989.55,166.98 989.57,165.22 989.6,164.85 989.65,161.86 989.8,167.21 989.82,166.81 989.85,162.28 989.92,159.17 990.07,166.67 990.1,166.46 990.3,160.52 990.32,162.16 990.35,167.35 990.4,168.91 990.52,155.92 990.57,161.69 990.6,161.01 990.67,164.54 990.77,158.19 990.82,160.29 990.85,157.12 991.02,165.1 991.07,163.06 991.1,161.86 991.17,156.64 991.33,166.44 991.35,165.05 991.48,157.73 991.58,162.84 991.6,165.4 991.78,157.92 991.83,158.17 991.85,160.9 991.93,164.39 992,160.82 992.08,162.05 992.1,158.31 992.18,157.39 992.33,164.93 992.35,162.47 992.5,158.67 992.58,163.35 992.6,162.9 992.65,156.97 992.8,165.77 992.83,162.57 992.85,161.58 992.93,159.14 993.03,163.7 993.08,162.93 993.1,161.79 993.15,167.48 993.28,158.59 993.33,158.84 993.35,162.26 993.43,166.38 993.58,159.48 993.6,158.26 993.76,164.65 993.83,162.58 993.86,161.85 993.91,163.07 993.96,157.75 994.08,161.54 994.11,161.53 994.18,162.85 994.21,158.41 994.33,162.68 994.36,164.3 994.56,155.64 994.58,158.66 994.61,160.92 994.63,160.23 994.68,165.99 994.83,161.06 994.86,160.67 994.88,157.5 995.01,164.75 995.08,164.41 995.11,162.86 995.21,159.83 995.33,162.17 995.36,164.35 995.38,164.91 995.53,158.33 995.58,164.65 995.61,161.24 995.63,165.7 995.83,157.55 995.86,160.71 995.91,160.22 996.03,165.91 996.08,161.37 996.11,159.48 996.34,165.58 996.36,161.83 996.46,158.12 996.59,165.8 996.61,162.85 996.66,163.9 996.81,158.93 996.84,161.38 996.86,158.88 996.96,165.35 997.09,165.12 997.11,161.14 997.16,160.13 997.29,168.34 997.34,164.02 997.36,163.92 997.46,158.37 997.59,165.81 997.61,165.69 997.76,158.22 997.84,161.89 997.86,165.28 997.91,166.69 998.06,159.15 998.09,163.93 998.11,162.06 998.26,166.76 998.34,163.46 998.36,161.2 998.39,159.25 998.56,165.19 998.59,165.06 998.61,166.88 998.69,160.16 998.82,161.93 998.84,165.06 998.94,160.4 999.07,164.61 999.09,164.48 999.22,161.54 999.32,162.72 999.34,160.54 999.49,166.57 999.57,165.4 999.59,165.43 999.69,165.55 999.77,162.42 999.82,165.05 999.84,164.14 999.92,168.33 999.99,162.8 1000.07,163.25 1000.09,164.82 1000.17,169.26 1000.27,163.35 1000.32,164.45 1000.34,165.37 1000.42,166.75 1000.47,163.67 1000.57,163.88 1000.59,165.21 1000.74,161 1000.77,166.43 1000.82,165.72 1000.84,165.41 1001.02,163.5 1001.04,167.93 1001.07,165.06 1001.09,165.73 1001.12,165.55 1001.3,168.54 1001.32,166.35 1001.35,166.21 1001.37,167.41 1001.5,161.4 1001.57,167.4 1001.6,166.67 1001.62,169.27 1001.8,161.49 1001.82,164.13 1001.85,165.45 1001.87,169.91 1002.05,162.54 1002.07,166.62 1002.1,163.28 1002.2,169.1 1002.32,166.64 1002.35,164.07 1002.4,162.89 1002.5,168.33 1002.57,166.85 1002.6,166.46 1002.65,166.79 1002.67,164.54 1002.82,166.74 1002.85,168.34 1002.92,170.75 1003,162.66 1003.07,163.18 1003.1,166.71 1003.22,171.79 1003.32,161 1003.35,166.27 1003.37,165.51 1003.5,170.07 1003.57,166.15 1003.6,167.74 1003.73,163.33 1003.83,169.49 1003.85,168.83 1003.88,170.02 1003.98,163.95 1004.08,169.4 1004.1,170.7 1004.23,170.97 1004.33,160.94 1004.35,167.12 1004.4,167.05 1004.45,172.67 1004.58,168.32 1004.6,165.44 1004.63,162.99 1004.78,171.89 1004.83,166.9 1004.85,168.22 1004.93,164.78 1005.08,172.36 1005.1,173.22 1005.23,165.52 1005.33,170.1 1005.35,173.31 1005.43,173.85 1005.5,163.69 1005.58,169.11 1005.6,167.95 1005.68,167.79 1005.75,171.13 1005.83,168.81 1005.85,171.29 1006,167.42 1006.08,172.1 1006.1,168.8 1006.13,166.18 1006.21,171.78 1006.33,169.41 1006.36,171.01 1006.38,168.01 1006.56,172.47 1006.58,168.36 1006.61,169.78 1006.78,171.06 1006.81,168.33 1006.83,169.87 1006.86,170.68 1006.93,171.72 1007.06,166.47 1007.08,169.23 1007.11,167.35 1007.28,176.01 1007.33,168.17 1007.36,169 1007.41,166.84 1007.56,174.5 1007.58,173.99 1007.61,171.59 1007.76,165.57 1007.83,174.18 1007.86,172.88 1007.88,173.41 1008.03,167.91 1008.08,172.31 1008.11,173.35 1008.18,174.11 1008.28,168.15 1008.33,169.58 1008.36,171.51 1008.38,175.27 1008.58,169.72 1008.61,169.95 1008.64,169.04 1008.71,175.05 1008.84,171.35 1008.86,168.85 1008.99,174.57 1009.09,173.89 1009.11,174.92 1009.24,169.45 1009.34,174.98 1009.36,172.27 1009.49,168.88 1009.59,174 1009.61,175.55 1009.64,176.59 1009.81,165.76 1009.84,170.57 1009.86,171 1009.91,176.93 1010.06,168.19 1010.09,168.23 1010.11,168.45 1010.29,176.23 1010.34,173.44 1010.36,170.18 1010.46,168.35 1010.54,175.42 1010.59,172.1 1010.61,170.71 1010.64,168.83 1010.76,175.22 1010.84,173.37 1010.86,174.31 1010.96,170.04 1011.06,171.11 1011.09,171.32 1011.19,179.27 1011.27,170.95 1011.32,171.54 1011.34,170.75 1011.42,177.17 1011.57,171.52 1011.59,171.69 1011.67,169.82 1011.69,176.35 1011.82,173.97 1011.84,174.81 1011.87,171.92 1011.92,175.55 1012.07,174.8 1012.09,174.32 1012.14,172.02 1012.32,176.5 1012.34,174.27 1012.49,171.11 1012.57,176.63 1012.59,177.48 1012.67,179.31 1012.82,175.18 1012.84,177 1012.92,174.2 1013.04,180.13 1013.07,177.47 1013.09,176.95 1013.17,178.35 1013.27,174.5 1013.32,175.91 1013.34,177.66 1013.39,175.59 1013.54,178.64 1013.57,177.08 1013.6,177.23 1013.72,174.06 1013.75,179.19 1013.82,176.75 1013.85,178.47 1013.9,179.16 1013.97,174.63 1014.07,177.29 1014.1,175.05 1014.3,180.61 1014.32,177.92 1014.35,179.44 1014.57,175.94 1014.6,178.19 1014.62,176.99 1014.75,181.23 1014.82,177.28 1014.85,179.64 1014.87,177.35 1015.07,183.89 1015.1,181.27 1015.15,176.44 1015.32,182.42 1015.35,180.48 1015.4,181.8 1015.47,175.36 1015.57,176.94 1015.6,181.02 1015.72,181.59 1015.82,174.47 1015.85,180.99 1015.97,183.75 1016.08,175.91 1016.1,175.63 1016.25,184.43 1016.33,182.96 1016.35,181.86 1016.48,174.52 1016.58,182.47 1016.6,186.8 1016.8,173.47 1016.83,175.57 1016.85,179.35 1016.93,186.01 1017.08,173.99 1017.1,174.72 1017.23,187.13 1017.33,177.95 1017.35,173.84 1017.5,182.44 1017.58,178.97 1017.6,179.86 1017.7,173.96 1017.83,183.65 1017.85,183.89 1018,177.63 1018.08,180.05 1018.1,181.68 1018.13,177.47 1018.15,182.58 1018.33,180.28 1018.35,180.44 1018.43,181.85 1018.5,178.46 1018.58,181.82 1018.61,182.27 1018.66,184.38 1018.76,180.27 1018.83,182.47 1018.86,181.62 1018.88,186.03 1019.06,179.93 1019.08,180.23 1019.11,183.63 1019.16,184.75 1019.28,181.31 1019.33,184.44 1019.36,181.95 1019.48,185.28 1019.58,179.84 1019.61,180.93 1019.63,179.4 1019.78,186.34 1019.83,183.12 1019.86,183.54 1020.01,179.99 1020.08,182.19 1020.11,182.17 1020.21,187.29 1020.33,177.04 1020.36,178.19 1020.51,187.15 1020.58,182.1 1020.61,179 1020.83,186.47 1020.86,184.21 1020.98,182.13 1021.06,186.88 1021.09,182.22 1021.11,182.14 1021.24,185.76 1021.34,183.03 1021.36,183.62 1021.46,187.78 1021.59,180.89 1021.61,180.92 1021.79,188.84 1021.84,185.81 1021.86,184.66 1021.91,180.22 1022.09,187.31 1022.11,186.44 1022.16,188.18 1022.31,178.61 1022.34,183.93 1022.36,186.35 1022.46,189.09 1022.59,181.17 1022.61,186.48 1022.76,195.27 1022.84,194.09 1022.86,194.41 1022.89,193.05 1022.99,202.47 1023.09,196.59 1023.11,197.95 1023.16,196.39 1023.31,207.69 1023.34,203.91 1023.36,204.47 1023.44,198.27 1023.57,204.79 1023.59,205.94 1023.62,210.37 1023.74,204.7 1023.82,205.86 1023.84,211.9 1023.92,207.45 1024.07,212.68 1024.09,209.93 1024.14,214.06 1024.32,213.63 1024.34,213 1024.49,218.25 1024.57,214.38 1024.59,216.39 1024.67,221.89 1024.82,216.45 1024.84,218.59 1024.92,222.68 1024.97,217.95 1025.07,218.51 1025.09,222.18 1025.19,220.26 1025.24,225.38 1025.32,220.39 1025.34,219.81 1025.49,226.17 1025.57,222.87 1025.59,221.89 1025.62,219.77 1025.82,224.94 1025.84,224.31 1025.89,227.07 1025.97,220.87 1026.07,225.05 1026.1,226.23 1026.17,231.21 1026.32,225.5 1026.35,227.91 1026.52,231.56 1026.57,229.51 1026.6,229.7 1026.72,226.01 1026.82,231.14 1026.85,231.15 1026.95,232.41 1027,228.96 1027.07,230.24 1027.1,231.16 1027.17,230.8 1027.25,233.38 1027.32,232.64 1027.35,232.77 1027.42,231.28 1027.52,235.42 1027.57,233.66 1027.6,234.58 1027.67,237.41 1027.8,231.05 1027.82,235.7 1027.85,234.42 1027.9,237.91 1028.05,231.75 1028.07,233.96 1028.1,232.91 1028.12,230.26 1028.3,237.01 1028.32,233.98 1028.35,231.57 1028.37,230.11 1028.5,240.46 1028.58,237.52 1028.6,236.41 1028.63,234.61 1028.78,238.52 1028.83,238.28 1028.85,226.83 1029.08,220.75 1029.1,225.94 1029.3,217.88 1029.33,219.06 1029.35,215.26 1029.38,222.02 1029.48,214.16 1029.58,216.78 1029.6,214.22 1029.78,218.64 1029.83,211.38 1029.85,211.17 1029.93,207.64 1030,213.24 1030.08,213.12 1030.1,211.43 1030.13,211.46 1030.3,202.1 1030.33,204.89 1030.35,206.54 1030.48,207.36 1030.55,200.25 1030.58,204.87 1030.6,200.51 1030.65,200.92 1030.78,197.29 1030.83,199.94 1030.85,199.86 1031.01,200.47 1031.06,197.09 1031.08,197.11 1031.11,196.28 1031.23,200.11 1031.31,195.47 1031.33,196.84 1031.36,193.68 1031.43,196.88 1031.48,192.78 1031.58,194.29 1031.61,191.84 1031.78,194.58 1031.83,190.72 1031.86,188.02 1031.88,193.9 1031.96,187.33 1032.08,189.94 1032.11,191.1 1032.16,192.66 1032.31,184.64 1032.33,187.82 1032.36,187.06 1032.43,194.35 1032.58,181.82 1032.61,180.94 1032.71,190.65 1032.83,183.21 1032.86,180.17 1032.93,177.05 1033.06,187.53 1033.08,185.5 1033.11,185 1033.21,178.95 1033.33,181.91 1033.36,186.89 1033.51,176.63 1033.59,178.73 1033.61,179.34 1033.64,177.75 1033.71,182.92 1033.84,179.86 1033.86,176.35 1034.04,181.62 1034.09,179.29 1034.11,177.42 1034.14,175.17 1034.31,181.03 1034.34,175.2 1034.36,174.81 1034.46,171.19 1034.59,180.55 1034.61,174.37 1034.66,176.71 1034.81,172.53 1034.84,174.96 1034.86,173.79 1034.89,169.88 1034.96,174.91 1035.09,173.53 1035.11,173.05 1035.14,176.98 1035.26,170.13 1035.34,171.18 1035.36,171.12 1035.41,175.18 1035.51,169.76 1035.59,171.1 1035.61,168.53 1035.71,174.24 1035.84,166.76 1035.86,170.55 1035.94,166.13 1036.04,173.14 1036.07,170.45 1036.09,170.83 1036.12,171.28 1036.17,165.8 1036.32,170.37 1036.34,169.52 1036.37,171.54 1036.42,167.74 1036.57,170.53 1036.59,169.21 1036.62,170.7 1036.74,163.78 1036.82,167.22 1036.84,166.96 1036.97,171.85 1037.07,165.56 1037.09,162.7 1037.19,171.84 1037.32,165.59 1037.34,162.31 1037.39,160.65 1037.54,168.45 1037.57,166.65 1037.59,169.13 1037.74,162.96 1037.82,166.88 1037.84,166.14 1037.89,170.05 1038.02,160.75 1038.07,161.8 1038.09,164.62 1038.14,168.51 1038.32,159.4 1038.34,157.43 1038.47,169.91 1038.57,163.58 1038.6,161.36 1038.62,158.76 1038.8,167.13 1038.82,166.52 1038.85,166.99 1038.97,157.39 1039.07,162.55 1039.1,165.8 1039.15,166.81 1039.3,157.97 1039.32,159.29 1039.35,159.28 1039.42,165.21 1039.57,159.76 1039.6,160.16 1039.62,157.85 1039.77,167.45 1039.82,163.16 1039.85,163.59 1039.97,159.29 1040.05,164.74 1040.07,162.83 1040.1,162.44 1040.12,164.94 1040.3,154.69 1040.32,159.15 1040.35,162.83 1040.42,166.42 1040.55,157.25 1040.57,158.86 1040.6,158.89 1040.77,165.01 1040.82,157.98 1040.85,160.66 1040.9,157.54 1041.08,162.33 1041.1,163.58 1041.3,158.93 1041.33,161.72 1041.35,158.8 1041.38,164.54 1041.55,158.4 1041.58,159.59 1041.6,158.97 1041.63,158.05 1041.8,164.16 1041.83,163.26 1041.85,161.21 1041.9,157.02 1042.08,160.57 1042.1,162.57 1042.18,164.27 1042.33,156.37 1042.35,153.57 1042.45,164.5 1042.58,159.87 1042.6,158.71 1042.65,157.01 1042.83,163.28 1042.85,159.83 1042.88,157.33 1042.98,162.59 1043.08,160.78 1043.1,160 1043.25,162.72 1043.28,158.58 1043.33,159.81 1043.36,159.72 1043.46,159.62 1043.51,162.43 1043.58,160.3 1043.61,158.64 1043.63,161.92 1043.83,158.91 1043.86,159.15 1043.88,155.91 1044.03,162.69 1044.08,161.12 1044.11,158.29 1044.13,157.65 1044.28,162.67 1044.33,161.04 1044.36,161.6 1044.41,157.27 1044.58,161.38 1044.61,158.94 1044.63,162.08 1044.81,155.7 1044.83,159.54 1044.86,159.01 1044.96,165.36 1045.08,157.74 1045.11,159.07 1045.13,156.61 1045.28,164.83 1045.33,161.97 1045.36,160.65 1045.43,155.16 1045.53,164.91 1045.58,161.74 1045.61,163.55 1045.63,163.95 1045.73,155.35 1045.84,162.73 1045.86,161.89 1045.89,163.31 1046.09,156.31 1046.11,159.95 1046.14,161.59 1046.24,157.4 1046.34,160.47 1046.36,161.11 1046.41,164.09 1046.59,155.8 1046.61,161.56 1046.66,164.56 1046.84,158.24 1046.86,159.88 1046.89,156.51 1047.09,163.74 1047.11,160.34 1047.16,154.25 1047.29,163.34 1047.34,163.01 1047.36,161.21 1047.56,163.61 1047.59,157.12 1047.61,159.08 1047.69,162.79 1047.76,158.51 1047.84,162.18 1047.86,161.57 1047.89,158.54 1047.96,164.69 1048.09,160.2 1048.11,160.55 1048.14,158.07 1048.26,163.33 1048.32,161.19 1048.34,163.21 1048.37,165.18 1048.42,159.08 1048.57,161.55 1048.59,160.53 1048.72,162.74 1048.74,159.74 1048.82,162.09 1048.84,163.25 1048.97,157.67 1049.07,165.62 1049.09,164.87 1049.29,158.99 1049.32,162.8 1049.34,161.46 1049.47,165.05 1049.52,159.76 1049.57,160.56 1049.59,162.41 1049.62,161.15 1049.74,164.38 1049.82,161.47 1049.84,161.97 1049.89,166.06 1049.92,161.92 1050.07,165.02 1050.09,166.29 1050.14,166.63 1050.29,159.71 1050.32,162.53 1050.34,162.55 1050.39,165.03 1050.49,159.66 1050.57,164.36 1050.59,163.15 1050.62,161.9 1050.74,166.42 1050.82,163.56 1050.85,164.25 1050.9,160.25 1051.02,166.67 1051.07,165.8 1051.1,164.98 1051.2,160.19 1051.32,166.8 1051.35,167.22 1051.45,161.8 1051.57,164.56 1051.6,162.59 1051.72,166.4 1051.82,162.26 1051.85,162.66 1052.07,168.83 1052.1,169.49 1052.22,162.02 1052.32,167.03 1052.35,169.56 1052.37,170.18 1052.57,162.84 1052.6,161.42 1052.67,169.15 1052.8,159.95 1052.82,163.24 1052.85,160.52 1053,169.14 1053.07,163.86 1053.1,161.98 1053.25,171.13 1053.33,164.89 1053.35,162.91 1053.45,168.71 1053.58,167.3 1053.6,163.81 1053.7,163.28 1053.83,167.68 1053.85,166.42 1053.88,169.67 1053.95,164.44 1054.08,165.61 1054.1,166.09 1054.15,162.9 1054.28,167.57 1054.33,166.55 1054.35,166.23 1054.43,163.63 1054.58,168.85 1054.6,169.2 1054.63,170 1054.73,163.08 1054.83,167.58 1054.85,166.73 1054.9,170.1 1055.08,163.07 1055.1,166.05 1055.15,164.85 1055.23,170.56 1055.33,168.2 1055.35,168.18 1055.4,166.29 1055.58,172.52 1055.6,170.08 1055.7,171.16 1055.78,165.76 1055.83,166.52 1055.86,168.06 1055.91,166 1055.98,170.43 1056.08,169.51 1056.11,168.25 1056.18,166.33 1056.28,170.8 1056.33,170.23 1056.36,167.79 1056.38,166.38 1056.58,173.03 1056.61,171.03 1056.78,165.34 1056.83,167.95 1056.86,170.53 1056.93,165.5 1057.08,168.42 1057.11,168.36 1057.13,165.44 1057.31,170 1057.33,168.68 1057.36,169.98 1057.43,165.23 1057.58,169.96 1057.61,169.73 1057.66,166.15 1057.83,170.92 1057.86,169.59 1057.93,172.06 1058.06,165.44 1058.08,169.63 1058.11,168.87 1058.21,172.87 1058.29,167.49 1058.34,169.63 1058.36,169 1058.39,167.02 1058.51,169.7 1058.59,168.21 1058.61,167.58 1058.76,172.42 1058.84,166.97 1058.86,166.39 1058.91,166.25 1059.04,174.41 1059.09,172.72 1059.11,169.31 1059.26,167.86 1059.29,171.09 1059.34,170.97 1059.36,173.78 1059.51,166.64 1059.59,169.68 1059.61,171.99 1059.76,175.54 1059.81,167.61 1059.84,169.31 1059.86,170.35 1059.89,168.13 1060.06,175.58 1060.09,170.82 1060.11,169.4 1060.26,177.45 1060.34,174.08 1060.36,174.38 1060.46,167.29 1060.59,174.87 1060.61,174.51 1060.64,178.21 1060.74,169.55 1060.82,172.65 1060.84,171.32 1060.89,178.52 1061.04,170.66 1061.07,172.97 1061.09,170.97 1061.17,176.76 1061.32,174.39 1061.34,172.89 1061.37,169.93 1061.49,176.87 1061.57,173.84 1061.59,174.2 1061.67,172.4 1061.74,176.49 1061.82,175.17 1061.84,176.38 1061.97,170.53 1062.07,179.15 1062.09,176.83 1062.14,172.42 1062.32,177.31 1062.34,175.45 1062.44,177.49 1062.57,170.13 1062.59,174.13 1062.64,174.07 1062.72,178.96 1062.82,175.44 1062.84,170.41 1062.99,179.85 1063.07,177.19 1063.09,174.57 1063.2,168.95 1063.3,180.05 1063.32,175.57 1063.35,178.31 1063.47,170.28 1063.57,178.04 1063.6,178.56 1063.62,180.38 1063.75,173.66 1063.82,174.46 1063.85,175.51 1064.05,178.35 1064.07,176.9 1064.1,176.2 1064.12,177.22 1064.22,173 1064.32,175.98 1064.35,173.28 1064.42,178.57 1064.55,172.81 1064.57,176.69 1064.6,177.29 1064.65,181.32 1064.82,174.19 1064.85,172.47 1064.9,171.78 1065,180.98 1065.07,179.97 1065.1,179.15 1065.22,171.53 1065.32,179.3 1065.35,180.33 1065.5,173.1 1065.57,176.26 1065.6,176.42 1065.78,176.02 1065.8,180.63 1065.83,179.15 1065.85,178.86 1065.9,176.14 1066.08,180.59 1066.1,178.32 1066.25,180.21 1066.3,174.98 1066.33,178.7 1066.35,176.31 1066.43,181.13 1066.58,177.73 1066.6,177 1066.7,175.2 1066.8,180.92 1066.83,180.46 1066.85,177.3 1066.9,179.7 1066.95,174.93 1067.08,177.2 1067.1,179.75 1067.25,172.56 1067.33,178.69 1067.35,175.86 1067.45,182.47 1067.53,175.75 1067.58,178.16 1067.6,176.24 1067.78,184.61 1067.83,181.88 1067.85,182.29 1067.95,176.55 1068.08,179.77 1068.1,180.96 1068.13,181.17 1068.28,175.97 1068.33,176.19 1068.36,177.45 1068.51,182.23 1068.58,176.25 1068.61,176.18 1068.78,183.79 1068.83,180.42 1068.86,181.31 1068.93,176.76 1069.06,182.86 1069.08,182.33 1069.11,179.01 1069.23,176.14 1069.28,183.53 1069.33,180.18 1069.36,182.53 1069.48,176.51 1069.58,180.7 1069.61,179.18 1069.66,183.44 1069.73,178.54 1069.83,180.51 1069.86,182.42 1069.96,182.89 1070.06,178.04 1070.08,179.18 1070.11,181.66 1070.16,178.81 1070.31,183.43 1070.33,181.52 1070.36,180.46 1070.38,182.72 1070.48,179.59 1070.58,179.85 1070.61,177.57 1070.84,185.37 1070.86,180.31 1070.89,178.99 1071.06,184.43 1071.09,184.18 1071.11,183.01 1071.14,185.9 1071.29,179.24 1071.34,181.27 1071.36,181.97 1071.46,188.17 1071.59,179.7 1071.61,177.83 1071.79,188.66 1071.84,181.51 1071.86,181.69 1071.94,178.12 1072.01,188.05 1072.09,186.84 1072.11,188.55 1072.16,188.61 1072.24,181.39 1072.34,183.39 1072.36,186.75 1072.39,182.6 1072.49,187.66 1072.59,184.5 1072.61,181.59 1072.74,187.01 1072.84,184.51 1072.86,185.57 1072.94,181.89 1073.06,195.01 1073.09,191.97 1073.12,197.67 1073.19,191.64 1073.29,198.32 1073.32,195.53 1073.34,196.17 1073.37,194.2 1073.42,201.72 1073.57,198.3 1073.59,197.12 1073.72,207.85 1073.82,199.72 1073.84,203.16 1073.87,201.07 1073.99,208.35 1074.07,203.9 1074.09,207.3 1074.14,203.43 1074.29,211.64 1074.32,209.14 1074.34,213.29 1074.44,206.72 1074.57,216.04 1074.59,211.36 1074.72,214.95 1074.82,212.52 1074.84,214.74 1074.92,218.8 1075.07,216.98 1075.09,217.82 1075.12,214.69 1075.24,222.62 1075.32,220.57 1075.34,220.34 1075.42,219.63 1075.57,224.38 1075.6,224.87 1075.75,219.41 1075.82,222.4 1075.85,223.91 1075.92,224.81 1075.95,222.53 1076.07,224.41 1076.1,220.97 1076.12,220.83 1076.22,229.38 1076.32,228.29 1076.35,229.36 1076.4,221.69 1076.57,231.94 1076.6,230.37 1076.62,231.88 1076.75,222.13 1076.82,231.44 1076.85,232.5 1076.87,234.58 1077.02,226.89 1077.07,229.51 1077.1,231.98 1077.12,233.06 1077.15,229.6 1077.32,232.06 1077.35,229.35 1077.55,238.07 1077.57,234.41 1077.6,236.12 1077.7,228.02 1077.82,237.66 1077.85,233.25 1077.95,229.43 1078.08,237.17 1078.1,237.33 1078.13,237.83 1078.23,230.16 1078.33,234.16 1078.35,234.41 1078.38,232.45 1078.48,237.3 1078.58,233.89 1078.6,233.2 1078.83,237.73 1078.85,235.95 1078.88,238.36 1079.05,233.22 1079.08,235.7 1079.1,238.61 1079.3,222.78 1079.33,223.03 1079.35,223.18 1079.5,220.73 1079.58,221.49 1079.6,222.31 1079.78,216.69 1079.83,219 1079.85,219.67 1079.95,213.23 1080.08,214.09 1080.1,215.35 1080.18,215.96 1080.3,209.94 1080.33,210.62 1080.35,210.88 1080.38,213.05 1080.5,209.19 1080.58,209.47 1080.61,207.54 1080.78,209.58 1080.81,203.4 1080.83,204.32 1080.86,205.83 1080.91,205.95 1080.93,201.29 1081.08,203.34 1081.11,204.43 1081.21,197.22 1081.33,202.26 1081.36,199.88 1081.38,200.88 1081.56,195.07 1081.58,195.5 1081.61,197.74 1081.66,201.72 1081.81,194.05 1081.83,195.64 1081.86,197.8 1082.08,193.31 1082.11,192.39 1082.26,187.83 1082.33,189.94 1082.36,189.79 1082.38,195.55 1082.56,186.17 1082.58,187.29 1082.61,186.53 1082.71,190.86 1082.78,183.92 1082.83,184.35 1082.86,186.66 1082.88,183.2 1083.01,191.89 1083.09,186.63 1083.11,187.76 1083.19,182.11 1083.34,191.54 1083.36,188.73 1083.44,178.69 1083.59,187.9 1083.61,187.63 1083.64,187.84 1083.74,179.99 1083.84,182.42 1083.86,183.18 1083.89,185.37 1084.09,175.42 1084.11,175.31 1084.19,184.03 1084.34,174 1084.36,177.71 1084.51,180.64 1084.56,174.91 1084.59,175.45 1084.61,171.62 1084.79,179.54 1084.84,177.01 1084.86,176.28 1084.94,172.28 1085.09,176.12 1085.11,174.86 1085.14,175.54 1085.26,171.23 1085.34,172.12 1085.36,172.88 1085.39,169.85 1085.44,174.9 1085.57,170.99 1085.59,172.98 1085.67,169.57 1085.79,174.08 1085.82,170.48 1085.84,172.11 1085.89,169.03 1086.02,174.3 1086.07,169.88 1086.09,171.9 1086.27,166.4 1086.32,172.49 1086.34,169.54 1086.47,168.71 1086.57,170.75 1086.59,168.08 1086.64,166.6 1086.79,169.53 1086.82,167.6 1086.84,167.28 1086.94,169.38 1087.02,164.72 1087.07,167.08 1087.09,165.75 1087.12,165.35 1087.17,170.95 1087.32,165.92 1087.34,164.09 1087.47,169.12 1087.57,167.68 1087.59,166.21 1087.77,167.53 1087.82,162.28 1087.84,168.67 1087.92,162.1 1088.07,166.01 1088.1,164.54 1088.15,163.06 1088.2,167.14 1088.32,165.15 1088.35,168.02 1088.4,168.86 1088.55,160.93 1088.57,164.9 1088.6,164.09 1088.72,166.45 1088.82,161.48 1088.85,162.27 1088.92,167.5 1089.07,164.96 1089.1,161.83 1089.15,167.35 1089.3,161.52 1089.32,162.41 1089.35,163.21 1089.37,161.43 1089.5,166.45 1089.57,161.67 1089.6,162.82 1089.72,165.1 1089.77,161.23 1089.82,164.68 1089.85,161.43 1090,160.93 1090.05,165.56 1090.07,162.68 1090.1,162.83 1090.17,159.94 1090.22,163.99 1090.32,163.83 1090.35,163.97 1090.42,158.97 1090.58,161.12 1090.6,160.87 1090.75,158.19 1090.78,162.99 1090.83,161.53 1090.85,163.01 1091.05,158.79 1091.08,164.75 1091.1,161.95 1091.28,160.68 1091.33,162.29 1091.35,164.49 1091.55,157.71 1091.58,160.36 1091.6,162.17 1091.63,162.47 1091.75,157.21 1091.83,161.72 1091.85,162.97 1091.93,164.88 1092.03,156.84 1092.08,158.52 1092.1,156.88 1092.23,163.9 1092.33,160.9 1092.35,155.34 1092.53,162.98 1092.58,159.53 1092.6,160.87 1092.68,156.67 1092.8,161.27 1092.83,160.68 1092.85,161.97 1092.93,155.35 1093.08,162.46 1093.11,160.54 1093.26,157.26 1093.33,159.29 1093.36,160.77 1093.51,155.48 1093.53,161.03 1093.58,159.34 1093.61,157.67 1093.78,163.46 1093.83,159.06 1093.86,160.45 1093.93,157.56 1094.06,164.91 1094.08,160.74 1094.11,162.23 1094.28,156.55 1094.33,159.98 1094.36,165.52 1094.38,166.33 1094.56,153.88 1094.58,156.32 1094.61,157.98 1094.76,166.09 1094.83,161.37 1094.86,158.29 1094.91,155.72 1095.06,164.9 1095.08,162.4 1095.11,162.9 1095.28,155.75 1095.33,161.43 1095.36,162.73 1095.38,164.95 1095.54,155.3 1095.59,157.39 1095.61,159.71 1095.71,163.89 1095.84,158.64 1095.86,158.04 1095.89,157.2 1096.01,165.66 1096.09,161.73 1096.11,158.89 1096.34,163.46 1096.36,163.71 1096.39,163.82 1096.49,157 1096.59,162.93 1096.61,161.71 1096.64,164.63 1096.79,159.6 1096.84,162.07 1096.86,160.83 1096.96,166.63 1097.06,158.22 1097.09,159.2 1097.11,158.91 1097.16,158.02 1097.29,165.19 1097.34,160.87 1097.36,160.18 1097.44,157.14 1097.59,161.86 1097.61,162.21 1097.69,163.08 1097.76,159.38 1097.84,160.74 1097.86,161.14 1097.89,160.23 1098.02,165.85 1098.07,162.29 1098.09,161.59 1098.19,158.21 1098.32,165.28 1098.34,164.27 1098.54,159.94 1098.57,160.57 1098.59,160.76 1098.67,159.04 1098.74,164.39 1098.82,161.59 1098.84,160.32 1099.02,164.87 1099.07,162.11 1099.09,161.02 1099.24,165.09 1099.32,161.21 1099.34,160.42 1099.42,158.87 1099.52,164.82 1099.57,164.79 1099.59,164.14 1099.72,157.57 1099.79,165.32 1099.82,163.02 1099.84,165.89 1099.97,160.34 1100.07,162.87 1100.09,165.43 1100.17,167 1100.29,157.97 1100.32,161.52 1100.34,158.1 1100.5,168.27 1100.57,164.66 1100.6,160.91 1100.65,159.11 1100.77,168.16 1100.82,165.77 1100.85,167.72 1101,159.58 1101.07,163.52 1101.1,162.7 1101.15,167.58 1101.3,159.42 1101.32,160.87 1101.35,160.78 1101.42,172.6 1101.57,161.8 1101.6,161.28 1101.8,167.53 1101.82,166.49 1101.85,164.76 1101.92,160.32 1102.05,167.23 1102.07,166.93 1102.1,167.54 1102.25,162.6 1102.32,167.16 1102.35,168.32 1102.45,162.46 1102.57,166.28 1102.6,167.4 1102.62,168.14 1102.8,164.45 1102.82,165.06 1102.85,164.74 1102.93,163.32 1103.03,168.34 1103.08,165.94 1103.1,164.43 1103.13,163.79 1103.33,169.21 1103.35,170.39 1103.5,161.23 1103.58,166.4 1103.6,167.37 1103.8,164.94 1103.83,165.49 1103.85,164.91 1103.88,162.54 1104.03,167.91 1104.08,165.99 1104.1,164.36 1104.18,162.82 1104.33,169.36 1104.35,167.99 1104.4,163.21 1104.55,169.3 1104.58,168.62 1104.6,167.93 1104.63,169.06 1104.7,160.97 1104.83,167.04 1104.85,167.78 1104.93,168.68 1105.05,164.44 1105.08,165.43 1105.1,163.38 1105.28,170.54 1105.33,166.78 1105.36,166.93 1105.38,163.58 1105.51,169.96 1105.58,168.33 1105.61,165.02 1105.68,162.47 1105.78,169.34 1105.83,169.02 1105.86,171.1 1106.01,164.34 1106.08,166.93 1106.11,168.49 1106.16,172.48 1106.31,164.24 1106.33,164.94 1106.36,167.82 1106.38,164.96 1106.48,170.7 1106.58,165.74 1106.61,168.35 1106.73,165.28 1106.81,170.35 1106.83,170.08 1106.86,166.58 1106.91,168.47" fill="none" stroke="#000" stroke-width="1.25" stroke-linejoin="round"/>
<path d="M217,89.5 V183 M267.35,92 V183 M317.7,89.75 V181.25 M368.05,93 V178.75 M418.4,93.5 V181.75 M468.75,93.75 V181.75 M519.1,91.75 V186.25 M569.45,95.75 V186.75 M619.8,94.75 V185.5 M670.15,92 V184.75 M720.5,99 V184.75 M770.85,90 V186.25 M821.2,95.75 V183.75 M871.55,94.75 V187.25 M921.9,98.75 V185.5 M972.25,93 V187.25 M1022.6,96 V185.75 M1072.95,93.5 V186.25 M223.25,228 V253 M273.6,228 V252.75 M323.95,226.25 V256 M374.3,223.75 V251 M424.65,226.75 V253.5 M475,226.75 V251.5 M525.35,231.25 V255 M575.7,231.75 V259.5 M626.05,230.5 V256.5 M676.4,229.75 V253.5 M726.75,229.75 V258.5 M777.1,231.25 V251.5 M827.45,228.75 V254.75 M877.8,232.25 V256.75 M928.15,230.5 V256.5 M978.5,232.25 V258 M1028.85,230.75 V257.5 M1079.2,231.25 V259" fill="none" stroke="#000" stroke-width="1.4"/>
<rect class="fr" x="160.5" y="81.5" width="992" height="187"/>
<path class="tk" d="M205.5,268.5 v4.86 M330.5,268.5 v4.86 M456.5,268.5 v4.86 M581.5,268.5 v4.86 M706.5,268.5 v4.86 M831.5,268.5 v4.86 M957.5,268.5 v4.86 M1082.5,268.5 v4.86"/>
<path class="tk" d="M160.5,111.5 h-4.86 M160.5,148.5 h-4.86 M160.5,185.5 h-4.86 M160.5,223.5 h-4.86 M160.5,260.5 h-4.86"/>
<text class="e n" x="150.28" y="117">−0.00002</text>
<text class="e n" x="150.28" y="154">−0.00004</text>
<text class="e n" x="150.28" y="192">−0.00006</text>
<text class="e n" x="150.28" y="230">−0.00008</text>
<text class="e n" x="150.28" y="267">−0.00010</text>
<text class="n" x="160" y="78">−9.999e−1</text>
<text class="t12 m" x="656" y="0" transform="translate(0,74) scale(1,1.07)">File: AAFM.mseed</text>
<path d="M205.09,502.8 H206.2 V340.65 H1107.3" fill="none" stroke="#00f" stroke-width="1.39"/>
<path d="M160.5,333 H1152.5" fill="none" stroke="#f00" stroke-opacity="0.8" stroke-width="2.083" stroke-dasharray="7.708,3.333"/>
<path d="M160.5,377.1 H1152.5" fill="none" stroke="#008000" stroke-opacity="0.8" stroke-width="2.083" stroke-dasharray="7.708,3.333"/>
<rect class="fr" x="160.5" y="324.5" width="992" height="187"/>
<path class="tk" d="M205.5,511.5 v4.86 M330.5,511.5 v4.86 M456.5,511.5 v4.86 M581.5,511.5 v4.86 M706.5,511.5 v4.86 M831.5,511.5 v4.86 M957.5,511.5 v4.86 M1082.5,511.5 v4.86"/>
<text class="m n" x="206.59" y="533">0</text>
<text class="m n" x="329.34" y="533">500</text>
<text class="m n" x="455.6" y="533">1000</text>
<text class="m n" x="580.85" y="533">1500</text>
<text class="m n" x="706.1" y="533">2000</text>
<text class="m n" x="831.35" y="533">2500</text>
<text class="m n" x="955.81" y="533">3000</text>
<text class="m n" x="1081.06" y="533">3500</text>
<path class="tk" d="M160.5,503.5 h-4.86 M160.5,470.5 h-4.86 M160.5,438.5 h-4.86 M160.5,405.5 h-4.86 M160.5,373.5 h-4.86 M160.5,341.5 h-4.86"/>
<text class="e n" x="150.28" y="509">0.0</text>
<text class="e n" x="150.28" y="477">0.2</text>
<text class="e n" x="150.28" y="444">0.4</text>
<text class="e n" x="150.28" y="412">0.6</text>
<text class="e n" x="150.28" y="379">0.8</text>
<text class="e n" x="150.28" y="347">1.0</text>
<rect x="1074.5" y="331.5" width="71" height="46" rx="2.78" ry="2.78" fill="#fff" stroke="#ccc" stroke-width="1.11" opacity="0.8"/>
<path d="M1079.9,342.88 H1107.68" fill="none" stroke="#f00" stroke-opacity="0.8" stroke-width="2.083" stroke-dasharray="7.708,3.333"/>
<path d="M1079.9,363.9 H1107.68" fill="none" stroke="#008000" stroke-opacity="0.8" stroke-width="2.083" stroke-dasharray="7.708,3.333"/>
<text x="1118.79" y="349">On</text>
<text x="1118.79" y="369">Off</text>
<rect x="256" y="571" width="832" height="10" fill="#d3d3d3"/>
<rect x="256" y="571" width="57.32" height="10" fill="#1f77b4"/>
<path d="M416.5,571 V581" stroke="#f00" stroke-width="1.39" stroke-linecap="butt" fill="none"/>
<circle cx="313.5" cy="576.5" r="6.94" fill="#fff" stroke="#bfbfbf" stroke-width="1.39"/>
<text class="e" x="239.36" y="581">STA (s)</text>
<text class="n" x="1105.64" y="581">0.782</text>
<rect x="256" y="598" width="832" height="11" fill="#d3d3d3"/>
<rect x="256" y="598" width="51.28" height="11" fill="#1f77b4"/>
<path d="M409.5,598 V609" stroke="#f00" stroke-width="1.39" stroke-linecap="butt" fill="none"/>
<circle cx="307.5" cy="603.5" r="6.94" fill="#fff" stroke="#bfbfbf" stroke-width="1.39"/>
<text class="e" x="239.36" y="609">LTA (s)</text>
<text class="n" x="1106.64" y="608">4.02</text>
<rect x="256" y="626" width="832" height="10" fill="#d3d3d3"/>
<rect x="256" y="626" width="47.99" height="10" fill="#1f77b4"/>
<path d="M475.5,626 V636" stroke="#f00" stroke-width="1.39" stroke-linecap="butt" fill="none"/>
<circle cx="304.5" cy="631.5" r="6.94" fill="#fff" stroke="#bfbfbf" stroke-width="1.39"/>
<text class="e" x="239.36" y="635">On Thr</text>
<text class="n" x="1105.64" y="635">1.048</text>
<rect x="256" y="653" width="832" height="10" fill="#d3d3d3"/>
<rect x="256" y="653" width="114.61" height="10" fill="#1f77b4"/>
<path d="M494.5,653 V663" stroke="#f00" stroke-width="1.39" stroke-linecap="butt" fill="none"/>
<circle cx="371.5" cy="658.5" r="6.94" fill="#fff" stroke="#bfbfbf" stroke-width="1.39"/>
<text class="e" x="239.36" y="663">Off Thr</text>
<text class="n" x="1105.64" y="663">0.775</text>
</svg></body></html>
